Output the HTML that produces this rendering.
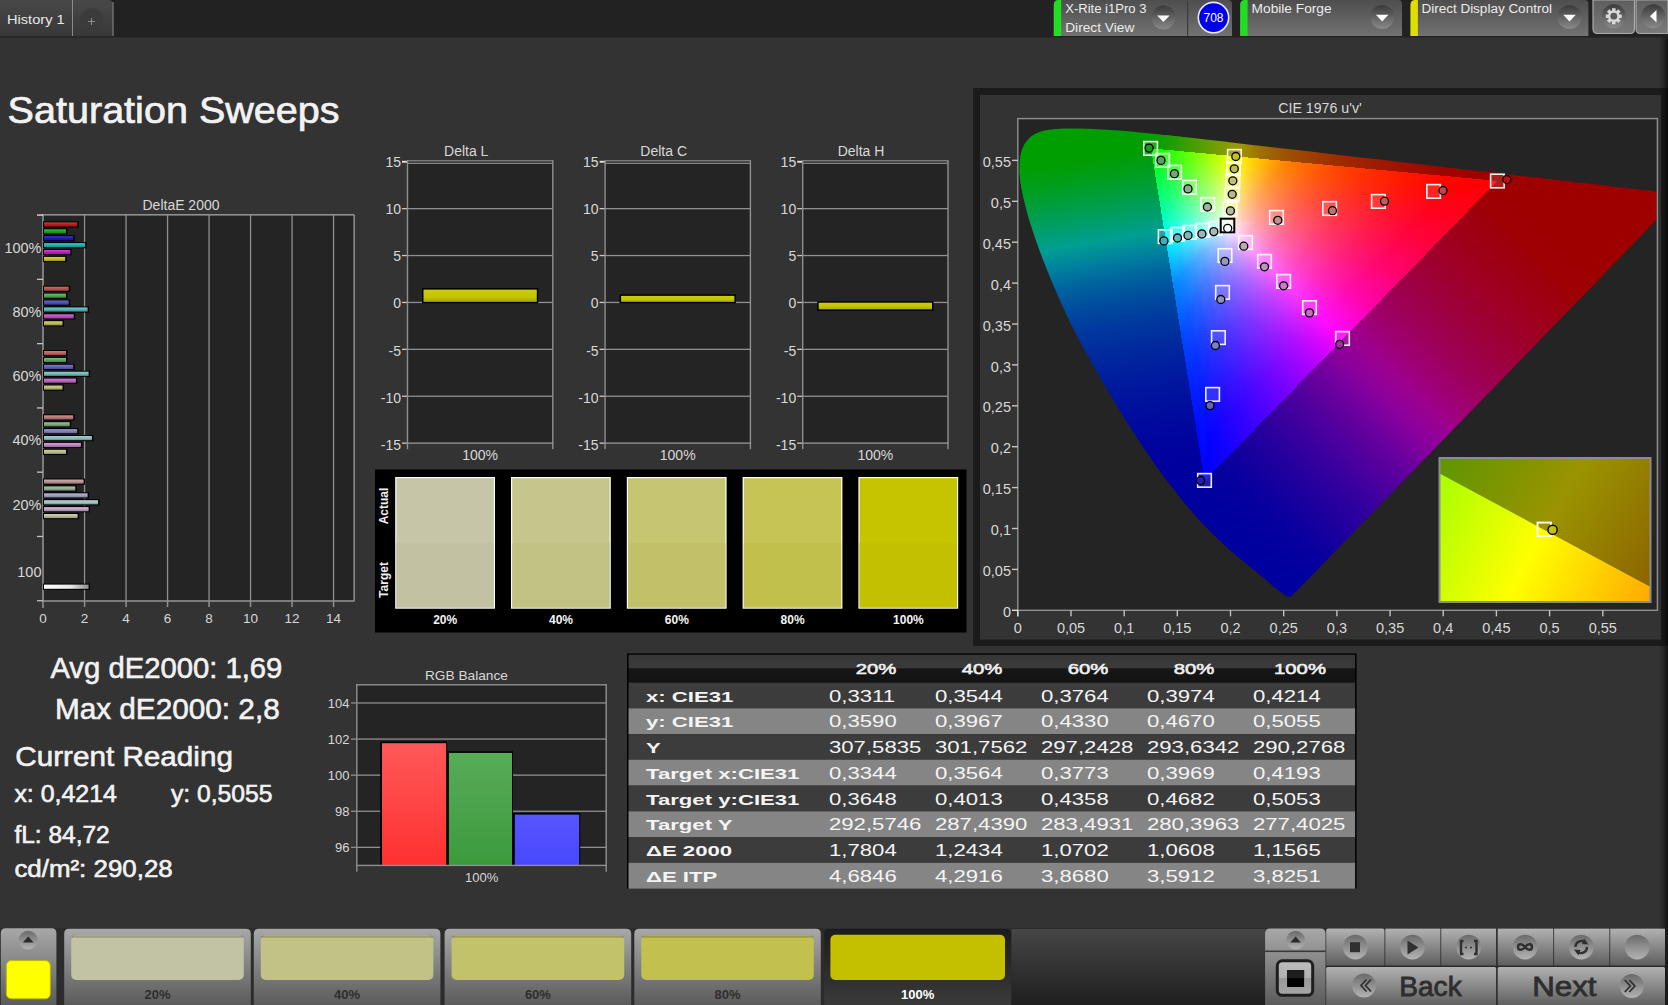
<!DOCTYPE html><html><head><meta charset="utf-8"><style>html,body{margin:0;padding:0;background:#333;overflow:hidden}svg{display:block;font-family:"Liberation Sans",sans-serif}</style></head><body>
<svg width="1668" height="1005" viewBox="0 0 1668 1005">
<defs><linearGradient id="tabg" x1="0" y1="0" x2="0" y2="1"><stop offset="0" stop-color="#484848"/><stop offset="1" stop-color="#383838"/></linearGradient><radialGradient id="plusg" cx="0.5" cy="0.3" r="0.7"><stop offset="0" stop-color="#3a3a3a"/><stop offset="1" stop-color="#444"/></radialGradient><linearGradient id="de1" x1="0" y1="0" x2="0" y2="1"><stop offset="0" stop-color="#ce4343"/><stop offset="0.45" stop-color="#c41a1a"/><stop offset="1" stop-color="#931313"/></linearGradient><linearGradient id="de2" x1="0" y1="0" x2="0" y2="1"><stop offset="0" stop-color="#44b944"/><stop offset="0.45" stop-color="#1caa1c"/><stop offset="1" stop-color="#157f15"/></linearGradient><linearGradient id="de3" x1="0" y1="0" x2="0" y2="1"><stop offset="0" stop-color="#4343c9"/><stop offset="0.45" stop-color="#1a1abe"/><stop offset="1" stop-color="#13138e"/></linearGradient><linearGradient id="de4" x1="0" y1="0" x2="0" y2="1"><stop offset="0" stop-color="#49c1c1"/><stop offset="0.45" stop-color="#22b4b4"/><stop offset="1" stop-color="#198787"/></linearGradient><linearGradient id="de5" x1="0" y1="0" x2="0" y2="1"><stop offset="0" stop-color="#cb48ce"/><stop offset="0.45" stop-color="#c020c4"/><stop offset="1" stop-color="#901893"/></linearGradient><linearGradient id="de6" x1="0" y1="0" x2="0" y2="1"><stop offset="0" stop-color="#cece4b"/><stop offset="0.45" stop-color="#c4c424"/><stop offset="1" stop-color="#93931b"/></linearGradient><linearGradient id="de7" x1="0" y1="0" x2="0" y2="1"><stop offset="0" stop-color="#cb6f6f"/><stop offset="0.45" stop-color="#c05050"/><stop offset="1" stop-color="#903c3c"/></linearGradient><linearGradient id="de8" x1="0" y1="0" x2="0" y2="1"><stop offset="0" stop-color="#6fb96f"/><stop offset="0.45" stop-color="#50aa50"/><stop offset="1" stop-color="#3c7f3c"/></linearGradient><linearGradient id="de9" x1="0" y1="0" x2="0" y2="1"><stop offset="0" stop-color="#6f6fc9"/><stop offset="0.45" stop-color="#5050be"/><stop offset="1" stop-color="#3c3c8e"/></linearGradient><linearGradient id="de10" x1="0" y1="0" x2="0" y2="1"><stop offset="0" stop-color="#76c4c4"/><stop offset="0.45" stop-color="#58b8b8"/><stop offset="1" stop-color="#428a8a"/></linearGradient><linearGradient id="de11" x1="0" y1="0" x2="0" y2="1"><stop offset="0" stop-color="#cb6fce"/><stop offset="0.45" stop-color="#c050c4"/><stop offset="1" stop-color="#903c93"/></linearGradient><linearGradient id="de12" x1="0" y1="0" x2="0" y2="1"><stop offset="0" stop-color="#cbcb76"/><stop offset="0.45" stop-color="#c0c058"/><stop offset="1" stop-color="#909042"/></linearGradient><linearGradient id="de13" x1="0" y1="0" x2="0" y2="1"><stop offset="0" stop-color="#cb7e7e"/><stop offset="0.45" stop-color="#c06262"/><stop offset="1" stop-color="#904949"/></linearGradient><linearGradient id="de14" x1="0" y1="0" x2="0" y2="1"><stop offset="0" stop-color="#7eb97e"/><stop offset="0.45" stop-color="#62aa62"/><stop offset="1" stop-color="#497f49"/></linearGradient><linearGradient id="de15" x1="0" y1="0" x2="0" y2="1"><stop offset="0" stop-color="#7f7fcb"/><stop offset="0.45" stop-color="#6464c0"/><stop offset="1" stop-color="#4b4b90"/></linearGradient><linearGradient id="de16" x1="0" y1="0" x2="0" y2="1"><stop offset="0" stop-color="#90c8c8"/><stop offset="0.45" stop-color="#78bcbc"/><stop offset="1" stop-color="#5a8d8d"/></linearGradient><linearGradient id="de17" x1="0" y1="0" x2="0" y2="1"><stop offset="0" stop-color="#cb83ce"/><stop offset="0.45" stop-color="#c068c4"/><stop offset="1" stop-color="#904e93"/></linearGradient><linearGradient id="de18" x1="0" y1="0" x2="0" y2="1"><stop offset="0" stop-color="#cbcb89"/><stop offset="0.45" stop-color="#c0c070"/><stop offset="1" stop-color="#909054"/></linearGradient><linearGradient id="de19" x1="0" y1="0" x2="0" y2="1"><stop offset="0" stop-color="#cb9191"/><stop offset="0.45" stop-color="#c07a7a"/><stop offset="1" stop-color="#905b5b"/></linearGradient><linearGradient id="de20" x1="0" y1="0" x2="0" y2="1"><stop offset="0" stop-color="#95bc95"/><stop offset="0.45" stop-color="#7eae7e"/><stop offset="1" stop-color="#5e825e"/></linearGradient><linearGradient id="de21" x1="0" y1="0" x2="0" y2="1"><stop offset="0" stop-color="#9898cc"/><stop offset="0.45" stop-color="#8282c2"/><stop offset="1" stop-color="#616191"/></linearGradient><linearGradient id="de22" x1="0" y1="0" x2="0" y2="1"><stop offset="0" stop-color="#a5cbcb"/><stop offset="0.45" stop-color="#92c0c0"/><stop offset="1" stop-color="#6d9090"/></linearGradient><linearGradient id="de23" x1="0" y1="0" x2="0" y2="1"><stop offset="0" stop-color="#cb9dce"/><stop offset="0.45" stop-color="#c088c4"/><stop offset="1" stop-color="#906693"/></linearGradient><linearGradient id="de24" x1="0" y1="0" x2="0" y2="1"><stop offset="0" stop-color="#cbcba0"/><stop offset="0.45" stop-color="#c0c08c"/><stop offset="1" stop-color="#909069"/></linearGradient><linearGradient id="de25" x1="0" y1="0" x2="0" y2="1"><stop offset="0" stop-color="#cbaaaa"/><stop offset="0.45" stop-color="#c09898"/><stop offset="1" stop-color="#907272"/></linearGradient><linearGradient id="de26" x1="0" y1="0" x2="0" y2="1"><stop offset="0" stop-color="#aac1aa"/><stop offset="0.45" stop-color="#98b498"/><stop offset="1" stop-color="#728772"/></linearGradient><linearGradient id="de27" x1="0" y1="0" x2="0" y2="1"><stop offset="0" stop-color="#b4b4d1"/><stop offset="0.45" stop-color="#a4a4c8"/><stop offset="1" stop-color="#7b7b96"/></linearGradient><linearGradient id="de28" x1="0" y1="0" x2="0" y2="1"><stop offset="0" stop-color="#b7d0d0"/><stop offset="0.45" stop-color="#a8c6c6"/><stop offset="1" stop-color="#7e9494"/></linearGradient><linearGradient id="de29" x1="0" y1="0" x2="0" y2="1"><stop offset="0" stop-color="#ceb7d1"/><stop offset="0.45" stop-color="#c4a8c8"/><stop offset="1" stop-color="#937e96"/></linearGradient><linearGradient id="de30" x1="0" y1="0" x2="0" y2="1"><stop offset="0" stop-color="#cbcbb2"/><stop offset="0.45" stop-color="#c0c0a2"/><stop offset="1" stop-color="#909079"/></linearGradient><linearGradient id="dew" x1="0" y1="0" x2="1" y2="0"><stop offset="0" stop-color="#ffffff"/><stop offset="0.6" stop-color="#e8e8e8"/><stop offset="1" stop-color="#909090"/></linearGradient><linearGradient id="ybar" x1="0" y1="0" x2="0" y2="1"><stop offset="0" stop-color="#cccc0a"/><stop offset="0.6" stop-color="#c4c400"/><stop offset="1" stop-color="#a4a400"/></linearGradient><clipPath id="plotclip"><rect x="1018.5" y="119.3" width="638.2" height="490.3"/></clipPath><clipPath id="locus"><path d="M1291.2,596.6 C1290.8,596.7 1289.6,597.2 1288.8,597.1 C1288.0,597.1 1287.2,596.8 1286.3,596.3 C1285.4,595.9 1284.6,595.3 1283.5,594.5 C1282.5,593.7 1281.3,592.8 1279.8,591.6 C1278.3,590.4 1276.5,588.9 1274.4,587.3 C1272.4,585.6 1270.2,583.6 1267.7,581.5 C1265.1,579.3 1262.4,577.1 1259.1,574.3 C1255.8,571.6 1252.0,568.5 1247.8,565.1 C1243.7,561.7 1239.3,558.1 1234.3,553.7 C1229.3,549.3 1223.8,544.6 1217.7,538.7 C1211.6,532.8 1205.5,527.0 1197.7,518.3 C1190.0,509.6 1180.9,498.9 1171.3,486.2 C1161.6,473.6 1150.9,458.8 1140.0,442.4 C1129.1,426.0 1117.2,406.8 1106.1,387.8 C1095.0,368.9 1083.2,348.1 1073.5,328.9 C1063.8,309.6 1055.1,289.6 1048.0,272.2 C1040.8,254.8 1035.0,238.3 1030.6,224.5 C1026.3,210.6 1023.5,199.0 1021.7,189.0 C1019.8,178.9 1019.3,171.2 1019.5,164.3 C1019.7,157.3 1021.0,151.9 1022.9,147.3 C1024.9,142.7 1027.8,139.2 1031.1,136.5 C1034.3,133.8 1038.4,132.3 1042.6,131.0 C1046.8,129.8 1051.5,129.4 1056.3,129.0 C1061.1,128.6 1066.2,128.5 1071.3,128.5 C1076.3,128.4 1081.3,128.5 1086.4,128.7 C1091.6,128.8 1096.8,129.1 1102.3,129.4 C1107.8,129.7 1113.4,130.2 1119.3,130.6 C1125.3,131.1 1131.4,131.7 1137.9,132.3 C1144.4,132.9 1151.1,133.6 1158.3,134.4 C1165.4,135.1 1172.9,135.9 1180.9,136.8 C1188.8,137.7 1197.1,138.6 1205.9,139.6 C1214.6,140.6 1223.8,141.6 1233.5,142.8 C1243.2,143.9 1253.3,145.0 1263.9,146.2 C1274.5,147.5 1285.6,148.8 1297.1,150.1 C1308.6,151.4 1320.6,152.8 1332.8,154.2 C1345.1,155.6 1357.9,157.1 1370.7,158.6 C1383.5,160.0 1396.8,161.6 1409.5,163.1 C1422.3,164.5 1434.8,166.0 1447.2,167.4 C1459.6,168.8 1472.2,170.3 1483.9,171.6 C1495.5,173.0 1506.7,174.2 1517.1,175.4 C1527.5,176.6 1537.4,177.8 1546.5,178.8 C1555.5,179.9 1563.8,180.8 1571.4,181.7 C1579.1,182.6 1585.9,183.4 1592.4,184.1 C1598.8,184.9 1604.5,185.5 1610.0,186.2 C1615.5,186.8 1620.6,187.4 1625.3,187.9 C1630.0,188.5 1634.3,189.0 1638.2,189.4 C1642.1,189.9 1645.6,190.3 1648.7,190.6 C1651.8,191.0 1653.6,191.2 1656.8,191.6 C1660.0,191.9 1664.4,192.4 1667.9,192.8 C1671.3,193.2 1675.2,193.7 1677.4,193.9 C1679.7,194.2 1680.5,194.3 1681.2,194.4 Z"/></clipPath><linearGradient id="es0" gradientUnits="userSpaceOnUse" x1="1497.5" y1="180.9" x2="1151.0" y2="148.4"><stop offset="0.000" stop-color="#9e0000"/><stop offset="0.062" stop-color="#9e0000"/><stop offset="0.125" stop-color="#9e0200"/><stop offset="0.188" stop-color="#9e0800"/><stop offset="0.250" stop-color="#9e0e00"/><stop offset="0.312" stop-color="#9e1500"/><stop offset="0.375" stop-color="#9e1e00"/><stop offset="0.438" stop-color="#9e2700"/><stop offset="0.500" stop-color="#9e3400"/><stop offset="0.562" stop-color="#9e4300"/><stop offset="0.625" stop-color="#9e5600"/><stop offset="0.688" stop-color="#9e7100"/><stop offset="0.750" stop-color="#9e9800"/><stop offset="0.812" stop-color="#749e00"/><stop offset="0.875" stop-color="#499e00"/><stop offset="0.938" stop-color="#209e00"/><stop offset="1.000" stop-color="#009e00"/></linearGradient><linearGradient id="es1" gradientUnits="userSpaceOnUse" x1="1151.0" y1="148.4" x2="1204.6" y2="480.6"><stop offset="0.000" stop-color="#009e00"/><stop offset="0.062" stop-color="#009e1c"/><stop offset="0.125" stop-color="#009e40"/><stop offset="0.188" stop-color="#009e68"/><stop offset="0.250" stop-color="#009e93"/><stop offset="0.312" stop-color="#007f9e"/><stop offset="0.375" stop-color="#00619e"/><stop offset="0.438" stop-color="#004b9e"/><stop offset="0.500" stop-color="#003a9e"/><stop offset="0.562" stop-color="#002d9e"/><stop offset="0.625" stop-color="#00229e"/><stop offset="0.688" stop-color="#00189e"/><stop offset="0.750" stop-color="#00109e"/><stop offset="0.812" stop-color="#00099e"/><stop offset="0.875" stop-color="#00039e"/><stop offset="0.938" stop-color="#00009e"/><stop offset="1.000" stop-color="#00009e"/></linearGradient><linearGradient id="es2" gradientUnits="userSpaceOnUse" x1="1204.6" y1="480.6" x2="1497.5" y2="180.9"><stop offset="0.000" stop-color="#00009e"/><stop offset="0.062" stop-color="#08009e"/><stop offset="0.125" stop-color="#18009e"/><stop offset="0.188" stop-color="#29009e"/><stop offset="0.250" stop-color="#3d009e"/><stop offset="0.312" stop-color="#53009e"/><stop offset="0.375" stop-color="#6d009e"/><stop offset="0.438" stop-color="#8b009e"/><stop offset="0.500" stop-color="#9e008e"/><stop offset="0.562" stop-color="#9e006f"/><stop offset="0.625" stop-color="#9e0057"/><stop offset="0.688" stop-color="#9e0042"/><stop offset="0.750" stop-color="#9e0030"/><stop offset="0.812" stop-color="#9e0020"/><stop offset="0.875" stop-color="#9e0012"/><stop offset="0.938" stop-color="#9e0005"/><stop offset="1.000" stop-color="#9e0000"/></linearGradient><linearGradient id="gR" gradientUnits="userSpaceOnUse"><stop offset="0" stop-color="#000"/><stop offset="1" stop-color="#f00"/></linearGradient><linearGradient id="gG" gradientUnits="userSpaceOnUse"><stop offset="0" stop-color="#000"/><stop offset="1" stop-color="#0f0"/></linearGradient><linearGradient id="gB" gradientUnits="userSpaceOnUse"><stop offset="0" stop-color="#000"/><stop offset="1" stop-color="#00f"/></linearGradient><linearGradient id="m1" href="#gG" x1="522.43" y1="-543.38" x2="477.30" y2="-496.44"/><linearGradient id="m2" href="#gB" x1="77.73" y1="-220.84" x2="64.72" y2="-183.88"/><linearGradient id="m3" href="#gG" x1="850.42" y1="-525.77" x2="787.76" y2="-487.03"/><linearGradient id="m4" href="#gB" x1="122.24" y1="-288.91" x2="105.51" y2="-249.38"/><linearGradient id="m5" href="#gG" x1="1158.21" y1="-317.03" x2="1085.32" y2="-297.08"/><linearGradient id="m6" href="#gB" x1="190.50" y1="-366.44" x2="168.98" y2="-325.05"/><linearGradient id="m7" href="#gG" x1="1290.30" y1="-36.94" x2="1220.96" y2="-34.95"/><linearGradient id="m8" href="#gB" x1="287.01" y1="-443.06" x2="260.11" y2="-401.54"/><linearGradient id="m9" href="#gG" x1="1298.54" y1="122.19" x2="1238.69" y2="116.56"/><linearGradient id="m10" href="#gB" x1="394.90" y1="-498.46" x2="363.82" y2="-459.24"/><linearGradient id="m11" href="#gR" x1="1183.42" y1="116.81" x2="1238.63" y2="122.26"/><linearGradient id="m12" href="#gB" x1="41.32" y1="320.22" x2="48.77" y2="377.95"/><linearGradient id="m13" href="#gR" x1="1182.56" y1="121.01" x2="1238.55" y2="126.74"/><linearGradient id="m14" href="#gB" x1="39.46" y1="315.69" x2="46.68" y2="373.44"/><linearGradient id="m15" href="#gR" x1="1181.54" y1="129.31" x2="1238.29" y2="135.52"/><linearGradient id="m16" href="#gB" x1="37.60" y1="311.09" x2="44.58" y2="368.82"/><linearGradient id="m17" href="#gR" x1="1180.22" y1="141.58" x2="1237.69" y2="148.47"/><linearGradient id="m18" href="#gB" x1="35.76" y1="306.45" x2="42.48" y2="364.10"/><linearGradient id="m19" href="#gR" x1="1178.36" y1="157.67" x2="1236.48" y2="165.45"/><linearGradient id="m20" href="#gB" x1="33.93" y1="301.78" x2="40.40" y2="359.31"/><linearGradient id="m21" href="#gG" x1="942.86" y1="-532.81" x2="806.01" y2="-455.47"/><linearGradient id="m22" href="#gB" x1="55.76" y1="-186.25" x2="34.64" y2="-115.70"/><linearGradient id="m23" href="#gG" x1="850.12" y1="757.03" x2="787.20" y2="701.00"/><linearGradient id="m24" href="#gB" x1="882.44" y1="-542.35" x2="772.40" y2="-474.72"/><linearGradient id="m25" href="#gG" x1="1194.89" y1="-339.41" x2="1055.08" y2="-299.69"/><linearGradient id="m26" href="#gB" x1="82.81" y1="-237.55" x2="58.93" y2="-169.04"/><linearGradient id="m27" href="#gG" x1="1079.57" y1="629.13" x2="1007.19" y2="586.95"/><linearGradient id="m28" href="#gB" x1="685.11" y1="-567.61" x2="607.69" y2="-503.47"/><linearGradient id="m29" href="#gG" x1="1323.28" y1="-63.54" x2="1201.29" y2="-57.69"/><linearGradient id="m30" href="#gB" x1="127.25" y1="-303.38" x2="99.78" y2="-237.89"/><linearGradient id="m31" href="#gG" x1="1242.83" y1="415.18" x2="1168.21" y2="390.26"/><linearGradient id="m32" href="#gB" x1="549.07" y1="-551.92" x2="493.48" y2="-496.04"/><linearGradient id="m33" href="#gG" x1="1325.45" y1="154.10" x2="1232.02" y2="143.24"/><linearGradient id="m34" href="#gB" x1="200.73" y1="-383.14" x2="169.10" y2="-322.76"/><linearGradient id="m35" href="#gG" x1="1300.30" y1="207.97" x2="1231.43" y2="196.96"/><linearGradient id="m36" href="#gB" x1="465.08" y1="-527.53" x2="423.49" y2="-480.36"/><linearGradient id="m37" href="#gG" x1="1296.12" y1="225.91" x2="1228.87" y2="214.19"/><linearGradient id="m38" href="#gB" x1="312.30" y1="-463.45" x2="277.53" y2="-411.86"/><linearGradient id="m39" href="#gG" x1="1298.54" y1="122.19" x2="1238.69" y2="116.56"/><linearGradient id="m40" href="#gB" x1="423.94" y1="-509.98" x2="390.80" y2="-470.11"/><linearGradient id="m41" href="#gR" x1="1180.66" y1="110.18" x2="1238.74" y2="115.60"/><linearGradient id="m42" href="#gB" x1="23.12" y1="268.09" x2="28.43" y2="329.65"/><linearGradient id="m43" href="#gR" x1="1183.17" y1="85.77" x2="1238.49" y2="89.78"/><linearGradient id="m44" href="#gB" x1="48.97" y1="335.41" x2="58.00" y2="397.25"/><linearGradient id="m45" href="#gR" x1="1178.98" y1="107.77" x2="1238.94" y2="113.25"/><linearGradient id="m46" href="#gB" x1="21.14" y1="261.42" x2="26.17" y2="323.59"/><linearGradient id="m47" href="#gR" x1="1180.70" y1="56.75" x2="1236.86" y2="59.44"/><linearGradient id="m48" href="#gB" x1="49.59" y1="335.91" x2="58.95" y2="399.26"/><linearGradient id="m49" href="#gR" x1="1177.40" y1="109.70" x2="1239.19" y2="115.46"/><linearGradient id="m50" href="#gB" x1="19.29" y1="254.95" x2="24.03" y2="317.68"/><linearGradient id="m51" href="#gR" x1="1176.34" y1="24.12" x2="1233.27" y2="25.28"/><linearGradient id="m52" href="#gB" x1="50.32" y1="336.60" x2="60.03" y2="401.53"/><linearGradient id="m53" href="#gR" x1="1175.90" y1="115.41" x2="1239.47" y2="121.65"/><linearGradient id="m54" href="#gB" x1="17.55" y1="248.70" x2="22.01" y2="311.92"/><linearGradient id="m55" href="#gR" x1="1169.60" y1="-11.41" x2="1227.18" y2="-11.98"/><linearGradient id="m56" href="#gB" x1="51.16" y1="337.47" x2="61.26" y2="404.07"/><linearGradient id="m57" href="#gR" x1="1174.39" y1="124.28" x2="1239.66" y2="131.19"/><linearGradient id="m58" href="#gB" x1="15.92" y1="242.65" x2="20.10" y2="306.32"/><linearGradient id="m59" href="#gR" x1="1160.06" y1="-49.04" x2="1218.16" y2="-51.50"/><linearGradient id="m60" href="#gB" x1="52.10" y1="338.51" x2="62.63" y2="406.86"/><linearGradient id="m61" href="#gG" x1="1397.17" y1="-48.94" x2="1092.16" y2="-38.25"/><linearGradient id="m62" href="#gB" x1="33.43" y1="-137.50" x2="4.88" y2="-20.07"/><linearGradient id="m63" href="#gG" x1="976.55" y1="737.36" x2="846.51" y2="639.18"/><linearGradient id="m64" href="#gB" x1="285.48" y1="-469.94" x2="200.23" y2="-329.61"/><linearGradient id="m65" href="#gG" x1="1395.29" y1="149.03" x2="1157.04" y2="123.58"/><linearGradient id="m66" href="#gB" x1="48.28" y1="-174.70" x2="18.46" y2="-66.80"/><linearGradient id="m67" href="#gG" x1="1168.09" y1="586.45" x2="1038.27" y2="521.28"/><linearGradient id="m68" href="#gB" x1="272.45" y1="-454.63" x2="205.24" y2="-342.48"/><linearGradient id="m69" href="#gG" x1="1346.46" y1="299.02" x2="1174.19" y2="260.77"/><linearGradient id="m70" href="#gB" x1="73.69" y1="-226.28" x2="41.98" y2="-128.89"/><linearGradient id="m71" href="#gG" x1="1291.29" y1="373.35" x2="1174.88" y2="339.69"/><linearGradient id="m72" href="#gB" x1="264.64" y1="-443.10" x2="212.23" y2="-355.35"/><linearGradient id="m73" href="#gG" x1="1292.88" y1="370.02" x2="1176.06" y2="336.59"/><linearGradient id="m74" href="#gB" x1="120.72" y1="-298.92" x2="86.45" y2="-214.05"/><linearGradient id="m75" href="#gG" x1="1323.03" y1="180.84" x2="1229.90" y2="168.11"/><linearGradient id="m76" href="#gB" x1="265.14" y1="-437.79" x2="224.56" y2="-370.79"/><linearGradient id="m77" href="#gG" x1="1274.29" y1="333.92" x2="1199.82" y2="314.40"/><linearGradient id="m78" href="#gB" x1="212.30" y1="-395.94" x2="175.72" y2="-327.73"/><linearGradient id="m79" href="#gG" x1="1306.87" y1="122.98" x2="1238.69" y2="116.56"/><linearGradient id="m80" href="#gB" x1="282.11" y1="-443.97" x2="250.41" y2="-394.07"/><linearGradient id="m81" href="#gR" x1="1177.46" y1="109.91" x2="1238.74" y2="115.63"/><linearGradient id="m82" href="#gB" x1="8.56" y1="210.95" x2="11.23" y2="276.68"/><linearGradient id="m83" href="#gR" x1="1180.06" y1="71.96" x2="1238.26" y2="75.51"/><linearGradient id="m84" href="#gB" x1="29.29" y1="283.90" x2="36.21" y2="351.03"/><linearGradient id="m85" href="#gR" x1="1175.00" y1="98.14" x2="1239.38" y2="103.52"/><linearGradient id="m86" href="#gB" x1="7.18" y1="203.84" x2="9.54" y2="270.94"/><linearGradient id="m87" href="#gR" x1="1174.87" y1="30.21" x2="1234.92" y2="31.75"/><linearGradient id="m88" href="#gB" x1="28.84" y1="281.47" x2="35.97" y2="351.05"/><linearGradient id="m89" href="#gR" x1="1172.77" y1="89.76" x2="1240.14" y2="94.91"/><linearGradient id="m90" href="#gB" x1="5.95" y1="197.17" x2="8.01" y2="265.59"/><linearGradient id="m91" href="#gR" x1="1166.44" y1="-13.58" x2="1228.16" y2="-14.30"/><linearGradient id="m92" href="#gB" x1="28.44" y1="279.16" x2="35.79" y2="351.26"/><linearGradient id="m93" href="#gR" x1="1170.90" y1="83.53" x2="1241.10" y2="88.54"/><linearGradient id="m94" href="#gB" x1="4.85" y1="190.92" x2="6.62" y2="260.62"/><linearGradient id="m95" href="#gR" x1="1154.58" y1="-58.00" x2="1217.71" y2="-61.17"/><linearGradient id="m96" href="#gB" x1="28.08" y1="276.95" x2="35.66" y2="351.64"/><linearGradient id="m97" href="#gR" x1="1169.40" y1="77.74" x2="1242.22" y2="82.59"/><linearGradient id="m98" href="#gB" x1="3.88" y1="185.07" x2="5.36" y2="256.01"/><linearGradient id="m99" href="#gR" x1="1139.50" y1="-101.41" x2="1203.80" y2="-107.13"/><linearGradient id="m100" href="#gB" x1="27.76" y1="274.83" x2="35.58" y2="352.19"/><linearGradient id="m101" href="#gG" x1="1295.18" y1="535.22" x2="910.76" y2="376.37"/><linearGradient id="m102" href="#gB" x1="14.31" y1="-76.22" x2="-16.73" y2="89.16"/><linearGradient id="m103" href="#gG" x1="1072.33" y1="712.63" x2="846.55" y2="562.59"/><linearGradient id="m104" href="#gB" x1="82.36" y1="-249.25" x2="23.65" y2="-71.59"/><linearGradient id="m105" href="#gG" x1="1257.88" y1="558.90" x2="969.81" y2="430.91"/><linearGradient id="m106" href="#gB" x1="21.00" y1="-100.87" x2="-9.74" y2="46.79"/><linearGradient id="m107" href="#gG" x1="1237.38" y1="549.69" x2="1029.82" y2="457.49"/><linearGradient id="m108" href="#gB" x1="92.06" y1="-263.10" x2="41.27" y2="-117.95"/><linearGradient id="m109" href="#gG" x1="1225.22" y1="563.24" x2="1021.30" y2="469.49"/><linearGradient id="m110" href="#gB" x1="32.69" y1="-136.69" x2="1.81" y2="-7.56"/><linearGradient id="m111" href="#gG" x1="1333.44" y1="338.66" x2="1163.13" y2="295.41"/><linearGradient id="m112" href="#gB" x1="104.74" y1="-279.89" x2="61.98" y2="-165.62"/><linearGradient id="m113" href="#gG" x1="1214.44" y1="529.75" x2="1079.29" y2="470.79"/><linearGradient id="m114" href="#gB" x1="56.04" y1="-192.63" x2="24.30" y2="-83.53"/><linearGradient id="m115" href="#gG" x1="1345.86" y1="157.16" x2="1223.11" y2="142.82"/><linearGradient id="m116" href="#gB" x1="122.81" y1="-301.85" x2="88.02" y2="-216.33"/><linearGradient id="m117" href="#gG" x1="1241.99" y1="419.69" x2="1161.25" y2="392.41"/><linearGradient id="m118" href="#gB" x1="111.66" y1="-286.44" x2="78.31" y2="-200.90"/><linearGradient id="m119" href="#gG" x1="1316.37" y1="123.87" x2="1238.69" y2="116.56"/><linearGradient id="m120" href="#gB" x1="153.26" y1="-335.02" x2="125.95" y2="-275.32"/><linearGradient id="m121" href="#gR" x1="1174.28" y1="109.64" x2="1238.74" y2="115.66"/><linearGradient id="m122" href="#gB" x1="-0.61" y1="154.77" x2="-0.89" y2="224.01"/><linearGradient id="m123" href="#gR" x1="1176.68" y1="59.62" x2="1238.09" y2="62.73"/><linearGradient id="m124" href="#gB" x1="11.89" y1="223.22" x2="15.72" y2="295.08"/><linearGradient id="m125" href="#gR" x1="1171.18" y1="87.47" x2="1239.95" y2="92.60"/><linearGradient id="m126" href="#gB" x1="-1.23" y1="148.82" x2="-1.83" y2="220.23"/><linearGradient id="m127" href="#gR" x1="1168.65" y1="7.34" x2="1233.00" y2="7.75"/><linearGradient id="m128" href="#gB" x1="11.11" y1="218.73" x2="14.93" y2="293.84"/><linearGradient id="m129" href="#gR" x1="1168.13" y1="67.08" x2="1240.94" y2="71.26"/><linearGradient id="m130" href="#gB" x1="-1.76" y1="143.39" x2="-2.66" y2="216.94"/><linearGradient id="m131" href="#gR" x1="1156.32" y1="-44.65" x2="1223.25" y2="-47.24"/><linearGradient id="m132" href="#gB" x1="10.39" y1="214.43" x2="14.19" y2="292.84"/><linearGradient id="m133" href="#gR" x1="1165.15" y1="46.34" x2="1241.57" y2="49.38"/><linearGradient id="m134" href="#gB" x1="-2.20" y1="138.42" x2="-3.41" y2="214.08"/><linearGradient id="m135" href="#gR" x1="1140.28" y1="-94.03" x2="1209.36" y2="-99.73"/><linearGradient id="m136" href="#gB" x1="9.72" y1="210.29" x2="13.50" y2="292.04"/><linearGradient id="m137" href="#gR" x1="1161.71" y1="21.15" x2="1240.99" y2="22.59"/><linearGradient id="m138" href="#gB" x1="-2.58" y1="133.86" x2="-4.08" y2="211.60"/><linearGradient id="m139" href="#gR" x1="1122.38" y1="-137.38" x2="1193.17" y2="-146.05"/><linearGradient id="m140" href="#gB" x1="9.10" y1="206.32" x2="12.85" y2="291.43"/><linearGradient id="m141" href="#gG" x1="1046.25" y1="752.82" x2="652.73" y2="469.67"/><linearGradient id="m142" href="#gB" x1="1.40" y1="-10.21" x2="-26.27" y2="191.89"/><linearGradient id="m143" href="#gG" x1="1093.93" y1="717.84" x2="772.43" y2="506.87"/><linearGradient id="m144" href="#gB" x1="22.85" y1="-108.70" x2="-19.86" y2="94.51"/><linearGradient id="m145" href="#gG" x1="1070.69" y1="730.87" x2="759.18" y2="518.23"/><linearGradient id="m146" href="#gB" x1="3.35" y1="-22.89" x2="-22.65" y2="154.73"/><linearGradient id="m147" href="#gG" x1="1262.31" y1="553.56" x2="973.16" y2="426.76"/><linearGradient id="m148" href="#gB" x1="27.92" y1="-124.11" x2="-9.92" y2="44.11"/><linearGradient id="m149" href="#gG" x1="1096.30" y1="693.86" x2="868.83" y2="549.90"/><linearGradient id="m150" href="#gB" x1="6.70" y1="-41.60" x2="-17.86" y2="110.93"/><linearGradient id="m151" href="#gG" x1="1358.91" y1="337.23" x2="1130.65" y2="280.59"/><linearGradient id="m152" href="#gB" x1="35.06" y1="-143.47" x2="2.45" y2="-10.03"/><linearGradient id="m153" href="#gG" x1="1137.98" y1="624.98" x2="986.34" y2="541.70"/><linearGradient id="m154" href="#gB" x1="13.53" y1="-72.56" x2="-10.06" y2="53.94"/><linearGradient id="m155" href="#gG" x1="1365.99" y1="149.31" x2="1211.72" y2="132.45"/><linearGradient id="m156" href="#gB" x1="45.89" y1="-169.16" x2="18.97" y2="-69.91"/><linearGradient id="m157" href="#gG" x1="1210.00" y1="480.91" x2="1123.40" y2="446.49"/><linearGradient id="m158" href="#gB" x1="32.13" y1="-133.84" x2="8.50" y2="-35.40"/><linearGradient id="m159" href="#gG" x1="1325.87" y1="124.76" x2="1238.69" y2="116.56"/><linearGradient id="m160" href="#gB" x1="64.71" y1="-206.84" x2="43.93" y2="-140.43"/><linearGradient id="m161" href="#gR" x1="1171.09" y1="109.38" x2="1238.74" y2="115.69"/><linearGradient id="m162" href="#gB" x1="-4.79" y1="99.39" x2="-8.22" y2="170.37"/><linearGradient id="m163" href="#gR" x1="1173.39" y1="48.54" x2="1238.00" y2="51.21"/><linearGradient id="m164" href="#gB" x1="0.49" y1="161.72" x2="0.72" y2="236.35"/><linearGradient id="m165" href="#gR" x1="1167.50" y1="77.52" x2="1240.62" y2="82.37"/><linearGradient id="m166" href="#gB" x1="-4.87" y1="95.87" x2="-8.62" y2="169.73"/><linearGradient id="m167" href="#gR" x1="1162.57" y1="-12.92" x2="1231.15" y2="-13.68"/><linearGradient id="m168" href="#gB" x1="0.03" y1="157.07" x2="0.04" y2="235.56"/><linearGradient id="m169" href="#gR" x1="1163.48" y1="45.85" x2="1241.53" y2="48.92"/><linearGradient id="m170" href="#gB" x1="-4.92" y1="92.73" x2="-9.00" y2="169.45"/><linearGradient id="m171" href="#gR" x1="1146.60" y1="-71.54" x2="1218.55" y2="-76.03"/><linearGradient id="m172" href="#gB" x1="-0.38" y1="152.70" x2="-0.59" y2="235.06"/><linearGradient id="m173" href="#gR" x1="1158.55" y1="10.61" x2="1240.55" y2="11.37"/><linearGradient id="m174" href="#gB" x1="-4.96" y1="89.92" x2="-9.35" y2="169.47"/><linearGradient id="m175" href="#gR" x1="1127.52" y1="-123.23" x2="1202.10" y2="-131.38"/><linearGradient id="m176" href="#gB" x1="-0.75" y1="148.60" x2="-1.19" y2="234.83"/><linearGradient id="m177" href="#gR" x1="1149.75" y1="-39.44" x2="1233.32" y2="-42.30"/><linearGradient id="m178" href="#gB" x1="-4.99" y1="87.40" x2="-9.69" y2="169.76"/><linearGradient id="m179" href="#gR" x1="1111.85" y1="-157.65" x2="1188.42" y2="-168.51"/><linearGradient id="m180" href="#gB" x1="-1.08" y1="144.73" x2="-1.75" y2="234.84"/><linearGradient id="m181" href="#gG" x1="100.22" y1="476.02" x2="-25.95" y2="-123.23"/><linearGradient id="m182" href="#gG" x1="1061.21" y1="745.32" x2="661.86" y2="464.84"/><linearGradient id="m183" href="#gB" x1="272.54" y1="-484.09" x2="-686.10" y2="1218.66"/><linearGradient id="m184" href="#gG" x1="928.06" y1="796.35" x2="599.26" y2="514.22"/><linearGradient id="m185" href="#gB" x1="-3.76" y1="40.03" x2="-88.90" y2="947.41"/><linearGradient id="m186" href="#gG" x1="1258.44" y1="582.72" x2="889.69" y2="411.97"/><linearGradient id="m187" href="#gB" x1="68.05" y1="-226.63" x2="-128.27" y2="427.17"/><linearGradient id="m188" href="#gG" x1="990.72" y1="759.83" x2="742.54" y2="569.48"/><linearGradient id="m189" href="#gB" x1="-3.75" y1="39.95" x2="-48.48" y2="516.35"/><linearGradient id="m190" href="#gG" x1="1373.49" y1="356.44" x2="1084.88" y2="281.54"/><linearGradient id="m191" href="#gB" x1="36.96" y1="-151.59" x2="-43.44" y2="178.15"/><linearGradient id="m192" href="#gG" x1="1072.25" y1="684.69" x2="904.88" y2="577.82"/><linearGradient id="m193" href="#gB" x1="-3.74" y1="39.78" x2="-30.03" y2="319.40"/><linearGradient id="m194" href="#gG" x1="1384.29" y1="152.07" x2="1196.92" y2="131.49"/><linearGradient id="m195" href="#gB" x1="27.82" y1="-123.21" x2="-12.25" y2="54.24"/><linearGradient id="m196" href="#gG" x1="1180.83" y1="526.00" x2="1088.57" y2="484.90"/><linearGradient id="m197" href="#gB" x1="-3.74" y1="39.71" x2="-19.39" y2="206.11"/><linearGradient id="m198" href="#gG" x1="1335.36" y1="125.66" x2="1238.69" y2="116.56"/><linearGradient id="m199" href="#gB" x1="26.47" y1="-117.05" x2="6.20" y2="-27.43"/><linearGradient id="m200" href="#gR" x1="1167.91" y1="109.11" x2="1238.74" y2="115.72"/><linearGradient id="m201" href="#gB" x1="-3.75" y1="39.97" x2="-12.41" y2="132.21"/><linearGradient id="m202" href="#gR" x1="1170.22" y1="38.55" x2="1238.00" y2="40.78"/><linearGradient id="m203" href="#gB" x1="-3.49" y1="118.74" x2="-6.45" y2="219.14"/><linearGradient id="m204" href="#gR" x1="1163.96" y1="68.24" x2="1241.38" y2="72.77"/><linearGradient id="m205" href="#gB" x1="-3.75" y1="39.97" x2="-13.02" y2="138.65"/><linearGradient id="m206" href="#gR" x1="1156.73" y1="-30.96" x2="1229.47" y2="-32.91"/><linearGradient id="m207" href="#gB" x1="-3.55" y1="116.27" x2="-6.88" y2="225.03"/><linearGradient id="m208" href="#gR" x1="1158.86" y1="25.86" x2="1241.94" y2="27.71"/><linearGradient id="m209" href="#gB" x1="-3.75" y1="39.97" x2="-13.64" y2="145.31"/><linearGradient id="m210" href="#gR" x1="1137.56" y1="-94.72" x2="1214.31" y2="-101.11"/><linearGradient id="m211" href="#gB" x1="-3.60" y1="114.04" x2="-7.30" y2="231.57"/><linearGradient id="m212" href="#gR" x1="1151.02" y1="-24.95" x2="1237.63" y2="-26.83"/><linearGradient id="m213" href="#gB" x1="-3.75" y1="39.97" x2="-14.29" y2="152.21"/><linearGradient id="m214" href="#gR" x1="1117.58" y1="-144.52" x2="1197.19" y2="-154.81"/><linearGradient id="m215" href="#gB" x1="-3.63" y1="112.03" x2="-7.73" y2="238.75"/><linearGradient id="m216" href="#gR" x1="1148.67" y1="164.51" x2="1260.18" y2="180.48"/><linearGradient id="m217" href="#gB" x1="-3.75" y1="39.97" x2="-14.96" y2="159.37"/><linearGradient id="m218" href="#gR" x1="916.68" y1="-395.14" x2="984.60" y2="-424.42"/><linearGradient id="m219" href="#gB" x1="-3.64" y1="110.20" x2="-8.15" y2="246.59"/><linearGradient id="m220" href="#gR" x1="1181.18" y1="45.73" x2="1235.31" y2="47.82"/><linearGradient id="m221" href="#gB" x1="85.21" y1="403.63" x2="98.02" y2="464.35"/><linearGradient id="m222" href="#gR" x1="1181.57" y1="51.08" x2="1235.87" y2="53.43"/><linearGradient id="m223" href="#gB" x1="74.43" y1="385.98" x2="86.01" y2="446.03"/><linearGradient id="m224" href="#gR" x1="1181.96" y1="56.38" x2="1236.37" y2="58.98"/><linearGradient id="m225" href="#gB" x1="66.71" y1="372.56" x2="77.33" y2="431.84"/><linearGradient id="m226" href="#gR" x1="1182.35" y1="61.59" x2="1236.82" y2="64.42"/><linearGradient id="m227" href="#gB" x1="61.76" y1="363.71" x2="71.69" y2="422.15"/><linearGradient id="m228" href="#gR" x1="1182.43" y1="62.66" x2="1236.91" y2="65.55"/><linearGradient id="m229" href="#gB" x1="59.98" y1="360.67" x2="69.59" y2="418.44"/><linearGradient id="m230" href="#gR" x1="591.70" y1="-480.83" x2="629.38" y2="-511.45"/><linearGradient id="m231" href="#gG" x1="78.99" y1="478.48" x2="68.87" y2="417.15"/><linearGradient id="m232" href="#gR" x1="690.46" y1="-473.75" x2="729.91" y2="-500.82"/><linearGradient id="m233" href="#gG" x1="17.92" y1="357.39" x2="14.37" y2="286.59"/><linearGradient id="m234" href="#gR" x1="784.47" y1="-452.73" x2="823.78" y2="-475.41"/><linearGradient id="m235" href="#gG" x1="-16.11" y1="97.15" x2="-3.55" y2="21.38"/><linearGradient id="m236" href="#gR" x1="862.66" y1="-423.56" x2="900.50" y2="-442.14"/><linearGradient id="m237" href="#gG" x1="97.67" y1="-211.95" x2="129.38" y2="-280.75"/><linearGradient id="m238" href="#gR" x1="923.31" y1="-392.62" x2="959.02" y2="-407.81"/><linearGradient id="m239" href="#gG" x1="332.85" y1="-411.35" x2="375.68" y2="-464.28"/><linearGradient id="m240" href="#gR" x1="1168.50" y1="-4.62" x2="1229.03" y2="-4.86"/><linearGradient id="m241" href="#gB" x1="58.84" y1="352.10" x2="70.34" y2="420.95"/><linearGradient id="m242" href="#gR" x1="1176.44" y1="86.03" x2="1239.64" y2="90.65"/><linearGradient id="m243" href="#gB" x1="16.39" y1="245.68" x2="20.51" y2="307.41"/><linearGradient id="m244" href="#gR" x1="1169.91" y1="1.56" x2="1229.99" y2="1.64"/><linearGradient id="m245" href="#gB" x1="54.27" y1="343.78" x2="64.82" y2="410.62"/><linearGradient id="m246" href="#gR" x1="1177.76" y1="83.83" x2="1239.27" y2="88.21"/><linearGradient id="m247" href="#gB" x1="27.67" y1="282.63" x2="33.62" y2="343.41"/><linearGradient id="m248" href="#gR" x1="1171.34" y1="7.94" x2="1230.92" y2="8.35"/><linearGradient id="m249" href="#gB" x1="51.87" y1="339.82" x2="61.75" y2="404.57"/><linearGradient id="m250" href="#gR" x1="1179.00" y1="81.92" x2="1238.93" y2="86.08"/><linearGradient id="m251" href="#gB" x1="39.41" y1="314.47" x2="46.89" y2="374.20"/><linearGradient id="m252" href="#gR" x1="1172.81" y1="14.52" x2="1231.82" y2="15.26"/><linearGradient id="m253" href="#gB" x1="51.82" y1="340.95" x2="61.33" y2="403.53"/><linearGradient id="m254" href="#gR" x1="1180.19" y1="80.31" x2="1238.63" y2="84.29"/><linearGradient id="m255" href="#gB" x1="50.56" y1="340.74" x2="59.26" y2="399.37"/><linearGradient id="m256" href="#gR" x1="1174.13" y1="20.13" x2="1232.51" y2="21.13"/><linearGradient id="m257" href="#gB" x1="54.58" y1="348.07" x2="64.06" y2="408.49"/><linearGradient id="m258" href="#gR" x1="1181.05" y1="75.12" x2="1238.15" y2="78.75"/><linearGradient id="m259" href="#gB" x1="59.98" y1="360.67" x2="69.59" y2="418.44"/><linearGradient id="m260" href="#gR" x1="723.32" y1="-463.35" x2="768.79" y2="-492.47"/><linearGradient id="m261" href="#gG" x1="81.21" y1="487.67" x2="69.72" y2="418.66"/><linearGradient id="m262" href="#gR" x1="411.87" y1="-447.32" x2="452.63" y2="-491.59"/><linearGradient id="m263" href="#gG" x1="202.45" y1="622.67" x2="183.46" y2="564.26"/><linearGradient id="m264" href="#gR" x1="828.08" y1="-428.75" x2="878.41" y2="-454.81"/><linearGradient id="m265" href="#gG" x1="3.00" y1="327.13" x2="2.16" y2="235.24"/><linearGradient id="m266" href="#gR" x1="304.77" y1="-395.75" x2="351.59" y2="-456.54"/><linearGradient id="m267" href="#gG" x1="434.00" y1="755.17" x2="400.76" y2="697.33"/><linearGradient id="m268" href="#gR" x1="900.06" y1="-392.52" x2="953.27" y2="-415.72"/><linearGradient id="m269" href="#gG" x1="-12.50" y1="56.05" x2="11.49" y2="-51.54"/><linearGradient id="m270" href="#gR" x1="166.64" y1="-287.63" x2="216.21" y2="-373.19"/><linearGradient id="m271" href="#gG" x1="705.35" y1="781.14" x2="659.76" y2="730.65"/><linearGradient id="m272" href="#gR" x1="949.07" y1="-361.00" x2="1004.16" y2="-381.96"/><linearGradient id="m273" href="#gG" x1="104.32" y1="-210.45" x2="157.44" y2="-317.61"/><linearGradient id="m274" href="#gR" x1="28.46" y1="-81.00" x2="70.49" y2="-200.64"/><linearGradient id="m275" href="#gG" x1="930.11" y1="710.50" x2="877.45" y2="670.27"/><linearGradient id="m276" href="#gR" x1="983.20" y1="-335.27" x2="1039.74" y2="-354.55"/><linearGradient id="m277" href="#gG" x1="293.69" y1="-374.67" x2="368.08" y2="-469.58"/><linearGradient id="m278" href="#gR" x1="-21.22" y1="247.98" x2="-7.83" y2="91.48"/><linearGradient id="m279" href="#gG" x1="1079.67" y1="600.01" x2="1024.47" y2="569.33"/><linearGradient id="m280" href="#gR" x1="1152.71" y1="-54.12" x2="1220.36" y2="-57.30"/><linearGradient id="m281" href="#gB" x1="28.50" y1="276.90" x2="36.47" y2="354.37"/><linearGradient id="m282" href="#gR" x1="1167.20" y1="24.03" x2="1237.13" y2="25.47"/><linearGradient id="m283" href="#gB" x1="7.95" y1="207.18" x2="10.61" y2="276.42"/><linearGradient id="m284" href="#gR" x1="1154.73" y1="-48.60" x2="1221.12" y2="-51.40"/><linearGradient id="m285" href="#gB" x1="30.83" y1="284.63" x2="38.88" y2="358.87"/><linearGradient id="m286" href="#gR" x1="1168.90" y1="24.86" x2="1236.31" y2="26.30"/><linearGradient id="m287" href="#gB" x1="19.03" y1="252.07" x2="24.11" y2="319.31"/><linearGradient id="m288" href="#gR" x1="1156.88" y1="-42.70" x2="1221.95" y2="-45.10"/><linearGradient id="m289" href="#gB" x1="34.30" y1="295.42" x2="42.52" y2="366.23"/><linearGradient id="m290" href="#gR" x1="1170.61" y1="25.85" x2="1235.58" y2="27.29"/><linearGradient id="m291" href="#gB" x1="32.22" y1="292.98" x2="39.37" y2="358.01"/><linearGradient id="m292" href="#gR" x1="1159.14" y1="-36.38" x2="1222.85" y2="-38.38"/><linearGradient id="m293" href="#gB" x1="39.68" y1="310.78" x2="48.26" y2="378.00"/><linearGradient id="m294" href="#gR" x1="1172.32" y1="27.01" x2="1234.92" y2="28.45"/><linearGradient id="m295" href="#gB" x1="46.23" y1="328.71" x2="55.04" y2="391.38"/><linearGradient id="m296" href="#gR" x1="1161.45" y1="-30.01" x2="1223.72" y2="-31.62"/><linearGradient id="m297" href="#gB" x1="47.90" y1="331.88" x2="57.07" y2="395.42"/><linearGradient id="m298" href="#gR" x1="1173.87" y1="27.27" x2="1234.22" y2="28.67"/><linearGradient id="m299" href="#gB" x1="59.55" y1="358.11" x2="69.59" y2="418.44"/><linearGradient id="m300" href="#gR" x1="853.09" y1="-414.56" x2="906.08" y2="-440.31"/><linearGradient id="m301" href="#gG" x1="82.65" y1="496.30" x2="69.72" y2="418.67"/><linearGradient id="m302" href="#gR" x1="512.28" y1="-465.05" x2="567.03" y2="-514.75"/><linearGradient id="m303" href="#gG" x1="271.08" y1="677.91" x2="245.73" y2="614.53"/><linearGradient id="m304" href="#gR" x1="930.66" y1="-366.82" x2="992.98" y2="-391.39"/><linearGradient id="m305" href="#gG" x1="-0.94" y1="333.17" x2="-0.61" y2="215.62"/><linearGradient id="m306" href="#gR" x1="483.27" y1="-451.65" x2="557.19" y2="-520.73"/><linearGradient id="m307" href="#gG" x1="543.03" y1="786.58" x2="495.35" y2="717.52"/><linearGradient id="m308" href="#gR" x1="974.52" y1="-332.27" x2="1044.95" y2="-356.29"/><linearGradient id="m309" href="#gG" x1="-22.81" y1="115.70" x2="7.35" y2="-37.29"/><linearGradient id="m310" href="#gR" x1="447.66" y1="-435.33" x2="543.76" y2="-528.77"/><linearGradient id="m311" href="#gG" x1="797.23" y1="775.05" x2="728.95" y2="708.67"/><linearGradient id="m312" href="#gR" x1="1001.94" y1="-307.36" x2="1079.93" y2="-331.29"/><linearGradient id="m313" href="#gG" x1="35.01" y1="-88.62" x2="104.30" y2="-264.05"/><linearGradient id="m314" href="#gR" x1="407.05" y1="-415.36" x2="528.24" y2="-539.03"/><linearGradient id="m315" href="#gG" x1="983.09" y1="696.05" x2="899.06" y2="636.55"/><linearGradient id="m316" href="#gR" x1="1020.47" y1="-288.93" x2="1105.71" y2="-313.07"/><linearGradient id="m317" href="#gG" x1="138.58" y1="-237.56" x2="246.58" y2="-422.72"/><linearGradient id="m318" href="#gR" x1="362.28" y1="-390.91" x2="511.28" y2="-551.68"/><linearGradient id="m319" href="#gG" x1="1102.82" y1="598.83" x2="1007.40" y2="547.02"/><linearGradient id="m320" href="#gR" x1="1136.25" y1="-98.37" x2="1210.48" y2="-104.80"/><linearGradient id="m321" href="#gB" x1="7.41" y1="198.59" x2="10.57" y2="283.20"/><linearGradient id="m322" href="#gR" x1="1153.15" y1="-38.80" x2="1228.74" y2="-41.35"/><linearGradient id="m323" href="#gB" x1="2.51" y1="174.62" x2="3.61" y2="251.79"/><linearGradient id="m324" href="#gR" x1="1138.23" y1="-94.30" x2="1210.34" y2="-100.27"/><linearGradient id="m325" href="#gB" x1="12.84" y1="223.27" x2="17.49" y2="304.27"/><linearGradient id="m326" href="#gR" x1="1155.16" y1="-36.29" x2="1227.55" y2="-38.56"/><linearGradient id="m327" href="#gB" x1="12.66" y1="225.33" x2="16.84" y2="299.59"/><linearGradient id="m328" href="#gR" x1="1140.38" y1="-89.83" x2="1210.35" y2="-95.34"/><linearGradient id="m329" href="#gB" x1="19.60" y1="249.55" x2="25.61" y2="326.16"/><linearGradient id="m330" href="#gR" x1="1157.25" y1="-33.62" x2="1226.46" y2="-35.63"/><linearGradient id="m331" href="#gB" x1="26.41" y1="273.58" x2="33.25" y2="344.46"/><linearGradient id="m332" href="#gR" x1="1142.74" y1="-84.91" x2="1210.51" y2="-89.94"/><linearGradient id="m333" href="#gB" x1="28.77" y1="279.92" x2="36.14" y2="351.68"/><linearGradient id="m334" href="#gR" x1="1159.40" y1="-30.77" x2="1225.50" y2="-32.52"/><linearGradient id="m335" href="#gB" x1="42.44" y1="317.36" x2="51.42" y2="384.53"/><linearGradient id="m336" href="#gR" x1="1145.27" y1="-79.60" x2="1210.80" y2="-84.16"/><linearGradient id="m337" href="#gB" x1="41.60" y1="315.69" x2="50.38" y2="382.35"/><linearGradient id="m338" href="#gR" x1="1161.54" y1="-28.08" x2="1224.59" y2="-29.61"/><linearGradient id="m339" href="#gB" x1="59.06" y1="355.11" x2="69.59" y2="418.44"/><linearGradient id="m340" href="#gR" x1="957.88" y1="-345.89" x2="1016.80" y2="-367.17"/><linearGradient id="m341" href="#gG" x1="84.08" y1="504.89" x2="69.72" y2="418.68"/><linearGradient id="m342" href="#gR" x1="673.19" y1="-460.87" x2="745.10" y2="-510.10"/><linearGradient id="m343" href="#gG" x1="329.10" y1="714.72" x2="297.39" y2="645.86"/><linearGradient id="m344" href="#gR" x1="1003.01" y1="-303.73" x2="1076.91" y2="-326.11"/><linearGradient id="m345" href="#gG" x1="2.70" y1="365.13" x2="1.62" y2="219.88"/><linearGradient id="m346" href="#gR" x1="717.85" y1="-443.46" x2="820.03" y2="-506.58"/><linearGradient id="m347" href="#gG" x1="616.55" y1="799.32" x2="552.59" y2="716.41"/><linearGradient id="m348" href="#gR" x1="1026.56" y1="-278.22" x2="1114.91" y2="-302.16"/><linearGradient id="m349" href="#gG" x1="-29.07" y1="226.87" x2="-2.46" y2="19.16"/><linearGradient id="m350" href="#gR" x1="753.57" y1="-426.36" x2="887.69" y2="-502.24"/><linearGradient id="m351" href="#gG" x1="848.80" y1="770.24" x2="752.57" y2="682.91"/><linearGradient id="m352" href="#gR" x1="1041.07" y1="-261.26" x2="1143.51" y2="-286.97"/><linearGradient id="m353" href="#gG" x1="-26.22" y1="108.89" x2="38.42" y2="-159.53"/><linearGradient id="m354" href="#gR" x1="782.51" y1="-410.29" x2="949.61" y2="-497.90"/><linearGradient id="m355" href="#gG" x1="1007.56" y1="694.33" x2="882.65" y2="608.25"/><linearGradient id="m356" href="#gR" x1="1050.98" y1="-249.21" x2="1167.27" y2="-276.78"/><linearGradient id="m357" href="#gG" x1="-8.34" y1="25.76" x2="97.53" y2="-301.40"/><linearGradient id="m358" href="#gR" x1="806.35" y1="-395.52" x2="1007.01" y2="-493.95"/><linearGradient id="m359" href="#gG" x1="1107.33" y1="611.89" x2="957.48" y2="529.09"/><linearGradient id="m360" href="#gR" x1="1119.52" y1="-139.32" x2="1198.00" y2="-149.08"/><linearGradient id="m361" href="#gB" x1="-2.07" y1="135.71" x2="-3.43" y2="225.09"/><linearGradient id="m362" href="#gR" x1="1136.80" y1="-93.00" x2="1215.82" y2="-99.46"/><linearGradient id="m363" href="#gB" x1="-1.67" y1="141.10" x2="-2.66" y2="225.15"/><linearGradient id="m364" href="#gR" x1="1120.77" y1="-137.09" x2="1196.43" y2="-146.35"/><linearGradient id="m365" href="#gB" x1="2.55" y1="171.47" x2="3.84" y2="258.35"/><linearGradient id="m366" href="#gR" x1="1138.66" y1="-90.47" x2="1213.93" y2="-96.45"/><linearGradient id="m367" href="#gB" x1="7.20" y1="198.73" x2="10.12" y2="279.62"/><linearGradient id="m368" href="#gR" x1="1122.18" y1="-134.61" x2="1194.98" y2="-143.34"/><linearGradient id="m369" href="#gB" x1="9.62" y1="209.40" x2="13.39" y2="291.48"/><linearGradient id="m370" href="#gR" x1="1140.64" y1="-87.76" x2="1212.17" y2="-93.27"/><linearGradient id="m371" href="#gB" x1="21.16" y1="254.70" x2="27.53" y2="331.31"/><linearGradient id="m372" href="#gR" x1="1123.77" y1="-131.81" x2="1193.70" y2="-140.01"/><linearGradient id="m373" href="#gB" x1="20.35" y1="252.24" x2="26.50" y2="328.46"/><linearGradient id="m374" href="#gR" x1="1142.75" y1="-84.85" x2="1210.56" y2="-89.89"/><linearGradient id="m375" href="#gB" x1="38.91" y1="306.41" x2="48.01" y2="378.06"/><linearGradient id="m376" href="#gR" x1="1125.56" y1="-128.67" x2="1192.58" y2="-136.33"/><linearGradient id="m377" href="#gB" x1="36.26" y1="300.95" x2="44.66" y2="370.71"/><linearGradient id="m378" href="#gR" x1="1144.95" y1="-81.82" x2="1209.06" y2="-86.41"/><linearGradient id="m379" href="#gB" x1="58.55" y1="352.09" x2="69.59" y2="418.44"/><linearGradient id="m380" href="#gR" x1="1039.39" y1="-265.77" x2="1101.71" y2="-281.70"/><linearGradient id="m381" href="#gG" x1="85.51" y1="513.46" x2="69.73" y2="418.68"/><linearGradient id="m382" href="#gR" x1="846.90" y1="-406.87" x2="933.35" y2="-448.40"/><linearGradient id="m383" href="#gG" x1="377.65" y1="739.60" x2="339.82" y2="665.51"/><linearGradient id="m384" href="#gR" x1="1058.52" y1="-240.89" x2="1141.57" y2="-259.79"/><linearGradient id="m385" href="#gG" x1="8.93" y1="401.39" x2="5.05" y2="226.87"/><linearGradient id="m386" href="#gR" x1="904.02" y1="-368.25" x2="1024.36" y2="-417.27"/><linearGradient id="m387" href="#gG" x1="674.59" y1="803.81" x2="593.46" y2="707.15"/><linearGradient id="m388" href="#gR" x1="1068.65" y1="-227.20" x2="1172.00" y2="-249.17"/><linearGradient id="m389" href="#gG" x1="-20.35" y1="333.69" x2="-4.08" y2="66.96"/><linearGradient id="m390" href="#gR" x1="939.52" y1="-339.36" x2="1092.43" y2="-394.60"/><linearGradient id="m391" href="#gG" x1="890.86" y1="762.17" x2="764.29" y2="653.87"/><linearGradient id="m392" href="#gR" x1="1075.19" y1="-218.51" x2="1198.44" y2="-243.56"/><linearGradient id="m393" href="#gG" x1="-30.76" y1="305.00" x2="6.43" y2="-63.77"/><linearGradient id="m394" href="#gR" x1="963.57" y1="-317.53" x2="1148.01" y2="-378.31"/><linearGradient id="m395" href="#gG" x1="1028.91" y1="688.23" x2="859.41" y2="574.85"/><linearGradient id="m396" href="#gR" x1="1079.92" y1="-212.52" x2="1222.72" y2="-240.62"/><linearGradient id="m397" href="#gG" x1="-25.68" y1="349.26" x2="9.56" y2="-129.99"/><linearGradient id="m398" href="#gR" x1="980.97" y1="-300.66" x2="1196.12" y2="-366.60"/><linearGradient id="m399" href="#gG" x1="1105.95" y1="622.89" x2="896.17" y2="504.74"/><linearGradient id="m400" href="#gR" x1="1098.41" y1="-177.29" x2="1214.02" y2="-195.95"/><linearGradient id="m401" href="#gB" x1="6.41" y1="-39.13" x2="-12.42" y2="75.84"/><linearGradient id="m402" href="#gR" x1="1123.07" y1="-120.52" x2="1238.36" y2="-132.90"/><linearGradient id="m403" href="#gB" x1="-4.42" y1="103.69" x2="-8.20" y2="192.54"/><linearGradient id="m404" href="#gR" x1="1098.41" y1="-177.29" x2="1206.68" y2="-194.77"/><linearGradient id="m405" href="#gB" x1="-2.53" y1="130.13" x2="-4.32" y2="221.82"/><linearGradient id="m406" href="#gR" x1="1124.28" y1="-119.92" x2="1230.62" y2="-131.26"/><linearGradient id="m407" href="#gB" x1="2.64" y1="172.04" x2="3.97" y2="258.92"/><linearGradient id="m408" href="#gR" x1="1098.41" y1="-177.29" x2="1199.63" y2="-193.63"/><linearGradient id="m409" href="#gB" x1="3.08" y1="174.59" x2="4.62" y2="261.81"/><linearGradient id="m410" href="#gR" x1="1125.57" y1="-119.17" x2="1223.41" y2="-129.53"/><linearGradient id="m411" href="#gB" x1="16.49" y1="236.39" x2="22.22" y2="318.56"/><linearGradient id="m412" href="#gR" x1="1098.41" y1="-177.29" x2="1192.84" y2="-192.53"/><linearGradient id="m413" href="#gB" x1="13.86" y1="227.42" x2="18.77" y2="307.99"/><linearGradient id="m414" href="#gR" x1="1126.96" y1="-118.26" x2="1216.72" y2="-127.68"/><linearGradient id="m415" href="#gB" x1="35.64" y1="295.89" x2="44.80" y2="371.99"/><linearGradient id="m416" href="#gR" x1="1098.41" y1="-177.29" x2="1186.31" y2="-191.48"/><linearGradient id="m417" href="#gB" x1="31.69" y1="287.48" x2="39.73" y2="360.33"/><linearGradient id="m418" href="#gR" x1="1128.45" y1="-117.20" x2="1210.52" y2="-125.73"/><linearGradient id="m419" href="#gB" x1="58.05" y1="349.07" x2="69.59" y2="418.44"/><linearGradient id="m420" href="#gR" x1="1098.41" y1="-177.29" x2="1180.02" y2="-190.46"/><linearGradient id="m421" href="#gG" x1="86.94" y1="522.00" x2="69.73" y2="418.68"/><linearGradient id="m422" href="#gR" x1="906.59" y1="-369.19" x2="1055.06" y2="-429.65"/><linearGradient id="m423" href="#gG" x1="418.41" y1="756.81" x2="374.66" y2="677.68"/><linearGradient id="m424" href="#gR" x1="1098.41" y1="-177.29" x2="1236.15" y2="-199.52"/><linearGradient id="m425" href="#gG" x1="17.54" y1="439.52" x2="9.36" y2="234.51"/><linearGradient id="m426" href="#gR" x1="905.83" y1="-359.39" x2="1174.31" y2="-465.91"/><linearGradient id="m427" href="#gG" x1="721.46" y1="803.76" x2="622.45" y2="693.45"/><linearGradient id="m428" href="#gR" x1="1098.41" y1="-177.29" x2="1315.94" y2="-212.40"/><linearGradient id="m429" href="#gG" x1="1.98" y1="433.78" x2="0.48" y2="105.87"/><linearGradient id="m430" href="#gR" x1="856.19" y1="-375.53" x2="1346.68" y2="-590.67"/><linearGradient id="m431" href="#gG" x1="924.73" y1="752.40" x2="766.10" y2="623.33"/><linearGradient id="m432" href="#gR" x1="1098.41" y1="-177.29" x2="1439.64" y2="-232.37"/><linearGradient id="m433" href="#gG" x1="17.72" y1="489.80" x2="0.91" y2="25.22"/><linearGradient id="m434" href="#gR" x1="668.27" y1="-416.39" x2="1688.66" y2="-1052.18"/><linearGradient id="m435" href="#gG" x1="1042.51" y1="682.80" x2="826.17" y2="541.10"/><linearGradient id="m436" href="#gR" x1="1098.41" y1="-177.29" x2="1658.74" y2="-267.73"/><linearGradient id="m437" href="#gG" x1="889.98" y1="-340.73" x2="1178.90" y2="-451.34"/><linearGradient id="m438" href="#gR" x1="32.31" y1="549.49" x2="-215.64" y2="-3667.72"/><linearGradient id="m439" href="#gG" x1="1245.41" y1="156.68" x2="1107.54" y2="139.33"/><linearGradient id="m440" href="#gR" x1="242.22" y1="-356.98" x2="282.39" y2="-416.18"/><linearGradient id="m441" href="#gG" x1="350.51" y1="726.84" x2="320.09" y2="663.76"/><linearGradient id="m442" href="#gR" x1="320.16" y1="-405.35" x2="362.14" y2="-458.50"/><linearGradient id="m443" href="#gG" x1="313.18" y1="708.18" x2="284.43" y2="643.18"/><linearGradient id="m444" href="#gR" x1="385.44" y1="-435.51" x2="427.53" y2="-483.07"/><linearGradient id="m445" href="#gG" x1="274.73" y1="685.29" x2="248.05" y2="618.75"/><linearGradient id="m446" href="#gR" x1="432.55" y1="-452.77" x2="473.43" y2="-495.56"/><linearGradient id="m447" href="#gG" x1="236.29" y1="658.16" x2="212.04" y2="590.62"/><linearGradient id="m448" href="#gR" x1="458.47" y1="-461.63" x2="497.13" y2="-500.56"/><linearGradient id="m449" href="#gG" x1="199.27" y1="627.32" x2="177.73" y2="559.49"/><linearGradient id="m450" href="#gG" x1="1274.27" y1="325.21" x2="1207.39" y2="308.14"/><linearGradient id="m451" href="#gB" x1="539.09" y1="-540.55" x2="499.68" y2="-501.04"/><linearGradient id="m452" href="#gG" x1="1255.65" y1="377.46" x2="1188.84" y2="357.38"/><linearGradient id="m453" href="#gB" x1="575.12" y1="-548.10" x2="531.02" y2="-506.06"/><linearGradient id="m454" href="#gG" x1="1228.16" y1="435.00" x2="1162.53" y2="411.76"/><linearGradient id="m455" href="#gB" x1="649.16" y1="-554.61" x2="598.62" y2="-511.44"/><linearGradient id="m456" href="#gG" x1="1196.79" y1="486.22" x2="1133.10" y2="460.35"/><linearGradient id="m457" href="#gB" x1="755.55" y1="-548.12" x2="697.55" y2="-506.04"/><linearGradient id="m458" href="#gG" x1="1163.71" y1="530.18" x2="1102.43" y2="502.26"/><linearGradient id="m459" href="#gB" x1="885.74" y1="-514.89" x2="820.08" y2="-476.72"/><linearGradient id="m460" href="#gR" x1="552.70" y1="-454.06" x2="638.14" y2="-524.25"/><linearGradient id="m461" href="#gG" x1="442.42" y1="788.31" x2="379.20" y2="675.68"/><linearGradient id="m462" href="#gR" x1="844.48" y1="-417.67" x2="905.96" y2="-448.08"/><linearGradient id="m463" href="#gG" x1="20.82" y1="405.40" x2="13.66" y2="266.08"/><linearGradient id="m464" href="#gR" x1="556.87" y1="-457.31" x2="633.79" y2="-520.48"/><linearGradient id="m465" href="#gG" x1="408.84" y1="776.07" x2="350.78" y2="665.87"/><linearGradient id="m466" href="#gR" x1="744.11" y1="-454.11" x2="800.45" y2="-488.49"/><linearGradient id="m467" href="#gG" x1="38.59" y1="438.64" x2="27.67" y2="314.51"/><linearGradient id="m468" href="#gR" x1="552.72" y1="-460.65" x2="620.86" y2="-517.43"/><linearGradient id="m469" href="#gG" x1="371.53" y1="759.75" x2="319.09" y2="652.50"/><linearGradient id="m470" href="#gR" x1="641.69" y1="-472.35" x2="692.23" y2="-509.55"/><linearGradient id="m471" href="#gG" x1="55.80" y1="465.82" x2="42.56" y2="355.28"/><linearGradient id="m472" href="#gR" x1="537.07" y1="-463.48" x2="596.26" y2="-514.56"/><linearGradient id="m473" href="#gG" x1="330.65" y1="738.29" x2="284.26" y2="634.72"/><linearGradient id="m474" href="#gR" x1="545.07" y1="-473.58" x2="589.59" y2="-512.27"/><linearGradient id="m475" href="#gG" x1="71.65" y1="487.50" x2="57.18" y2="389.04"/><linearGradient id="m476" href="#gR" x1="506.83" y1="-464.28" x2="557.04" y2="-510.26"/><linearGradient id="m477" href="#gG" x1="286.78" y1="710.65" x2="246.86" y2="611.73"/><linearGradient id="m478" href="#gR" x1="461.57" y1="-462.36" x2="500.33" y2="-501.19"/><linearGradient id="m479" href="#gG" x1="85.48" y1="504.08" x2="70.58" y2="416.26"/><linearGradient id="m480" href="#gG" x1="1243.07" y1="455.67" x2="1149.86" y2="421.50"/><linearGradient id="m481" href="#gB" x1="548.89" y1="-550.38" x2="499.68" y2="-501.04"/><linearGradient id="m482" href="#gG" x1="1318.03" y1="26.06" x2="1223.59" y2="24.20"/><linearGradient id="m483" href="#gB" x1="419.09" y1="-509.54" x2="383.76" y2="-466.59"/><linearGradient id="m484" href="#gG" x1="1213.27" y1="510.82" x2="1115.02" y2="469.45"/><linearGradient id="m485" href="#gB" x1="545.07" y1="-556.21" x2="487.02" y2="-496.97"/><linearGradient id="m486" href="#gG" x1="1314.36" y1="-46.60" x2="1205.48" y2="-42.74"/><linearGradient id="m487" href="#gB" x1="295.25" y1="-451.17" x2="262.50" y2="-401.12"/><linearGradient id="m488" href="#gG" x1="1182.05" y1="556.79" x2="1079.78" y2="508.62"/><linearGradient id="m489" href="#gB" x1="559.36" y1="-564.26" x2="490.95" y2="-495.25"/><linearGradient id="m490" href="#gG" x1="1304.70" y1="-117.74" x2="1179.17" y2="-106.41"/><linearGradient id="m491" href="#gB" x1="184.88" y1="-365.33" x2="156.14" y2="-308.54"/><linearGradient id="m492" href="#gG" x1="1152.14" y1="593.48" x2="1046.64" y2="539.14"/><linearGradient id="m493" href="#gB" x1="587.98" y1="-573.04" x2="507.78" y2="-494.87"/><linearGradient id="m494" href="#gG" x1="1283.27" y1="-198.68" x2="1139.60" y2="-176.44"/><linearGradient id="m495" href="#gB" x1="97.35" y1="-258.98" x2="73.94" y2="-196.70"/><linearGradient id="m496" href="#gG" x1="1124.46" y1="622.72" x2="1016.23" y2="562.78"/><linearGradient id="m497" href="#gB" x1="626.26" y1="-580.52" x2="533.02" y2="-494.09"/><linearGradient id="m498" href="#gG" x1="1245.70" y1="-287.61" x2="1083.01" y2="-250.05"/><linearGradient id="m499" href="#gB" x1="37.65" y1="-143.30" x2="20.24" y2="-77.04"/><linearGradient id="m500" href="#gR" x1="812.87" y1="-404.99" x2="943.24" y2="-469.94"/><linearGradient id="m501" href="#gG" x1="543.75" y1="833.33" x2="425.62" y2="652.29"/><linearGradient id="m502" href="#gR" x1="896.89" y1="-377.94" x2="991.39" y2="-417.76"/><linearGradient id="m503" href="#gG" x1="191.16" y1="675.15" x2="128.97" y2="455.50"/><linearGradient id="m504" href="#gR" x1="756.35" y1="-426.49" x2="870.49" y2="-490.85"/><linearGradient id="m505" href="#gG" x1="515.41" y1="826.80" x2="408.30" y2="654.99"/><linearGradient id="m506" href="#gR" x1="791.43" y1="-427.94" x2="875.55" y2="-473.43"/><linearGradient id="m507" href="#gG" x1="191.44" y1="667.76" x2="136.10" y2="474.73"/><linearGradient id="m508" href="#gR" x1="694.94" y1="-444.33" x2="791.99" y2="-506.38"/><linearGradient id="m509" href="#gG" x1="482.31" y1="817.36" x2="386.69" y2="655.32"/><linearGradient id="m510" href="#gR" x1="675.98" y1="-457.94" x2="748.30" y2="-506.93"/><linearGradient id="m511" href="#gG" x1="190.91" y1="659.78" x2="142.16" y2="491.31"/><linearGradient id="m512" href="#gR" x1="625.48" y1="-457.21" x2="705.36" y2="-515.60"/><linearGradient id="m513" href="#gG" x1="443.62" y1="803.77" x2="360.00" y2="652.27"/><linearGradient id="m514" href="#gR" x1="559.52" y1="-465.47" x2="619.53" y2="-515.39"/><linearGradient id="m515" href="#gG" x1="189.36" y1="651.00" x2="146.92" y2="505.07"/><linearGradient id="m516" href="#gR" x1="545.40" y1="-462.06" x2="608.56" y2="-515.57"/><linearGradient id="m517" href="#gG" x1="398.53" y1="784.29" x2="327.43" y2="644.36"/><linearGradient id="m518" href="#gR" x1="452.08" y1="-452.92" x2="500.25" y2="-501.18"/><linearGradient id="m519" href="#gG" x1="186.48" y1="641.08" x2="150.02" y2="515.75"/><linearGradient id="m520" href="#gG" x1="1186.06" y1="578.28" x2="1059.35" y2="516.50"/><linearGradient id="m521" href="#gB" x1="560.03" y1="-561.55" x2="499.68" y2="-501.04"/><linearGradient id="m522" href="#gG" x1="1349.02" y1="165.96" x2="1203.33" y2="148.03"/><linearGradient id="m523" href="#gB" x1="385.10" y1="-501.62" x2="342.97" y2="-446.73"/><linearGradient id="m524" href="#gG" x1="1153.69" y1="621.10" x2="1013.84" y2="545.81"/><linearGradient id="m525" href="#gB" x1="505.21" y1="-559.91" x2="432.94" y2="-479.82"/><linearGradient id="m526" href="#gG" x1="1364.78" y1="152.13" x2="1186.95" y2="132.30"/><linearGradient id="m527" href="#gB" x1="243.13" y1="-420.61" x2="202.91" y2="-351.03"/><linearGradient id="m528" href="#gG" x1="1124.84" y1="653.36" x2="972.72" y2="565.00"/><linearGradient id="m529" href="#gB" x1="454.12" y1="-552.14" x2="370.49" y2="-450.46"/><linearGradient id="m530" href="#gG" x1="1380.57" y1="140.73" x2="1166.73" y2="118.93"/><linearGradient id="m531" href="#gB" x1="131.41" y1="-310.83" x2="96.19" y2="-227.51"/><linearGradient id="m532" href="#gG" x1="1099.80" y1="677.86" x2="936.05" y2="576.93"/><linearGradient id="m533" href="#gB" x1="404.01" y1="-537.93" x2="310.36" y2="-413.23"/><linearGradient id="m534" href="#gG" x1="1396.46" y1="127.76" x2="1142.73" y2="104.55"/><linearGradient id="m535" href="#gB" x1="55.35" y1="-187.89" x2="27.38" y2="-92.95"/><linearGradient id="m536" href="#gG" x1="1078.11" y1="696.84" x2="903.19" y2="583.78"/><linearGradient id="m537" href="#gB" x1="350.52" y1="-514.97" x2="249.53" y2="-366.60"/><linearGradient id="m538" href="#gG" x1="1412.40" y1="113.36" x2="1114.77" y2="89.47"/><linearGradient id="m539" href="#gB" x1="12.56" y1="-66.58" x2="-7.08" y2="37.53"/><linearGradient id="m540" href="#gR" x1="958.00" y1="-322.00" x2="1122.54" y2="-377.30"/><linearGradient id="m541" href="#gG" x1="648.12" y1="853.27" x2="457.47" y2="602.27"/><linearGradient id="m542" href="#gR" x1="939.28" y1="-341.76" x2="1069.91" y2="-389.29"/><linearGradient id="m543" href="#gG" x1="414.47" y1="819.82" x2="269.35" y2="532.76"/><linearGradient id="m544" href="#gR" x1="880.01" y1="-371.32" x2="1026.58" y2="-433.16"/><linearGradient id="m545" href="#gG" x1="627.20" y1="851.74" x2="454.46" y2="617.15"/><linearGradient id="m546" href="#gR" x1="827.30" y1="-403.64" x2="942.82" y2="-460.00"/><linearGradient id="m547" href="#gG" x1="397.32" y1="807.77" x2="271.75" y2="552.48"/><linearGradient id="m548" href="#gR" x1="790.25" y1="-413.24" x2="914.48" y2="-478.21"/><linearGradient id="m549" href="#gG" x1="601.79" y1="848.77" x2="447.44" y2="631.07"/><linearGradient id="m550" href="#gR" x1="700.12" y1="-443.54" x2="797.34" y2="-505.13"/><linearGradient id="m551" href="#gG" x1="378.96" y1="794.24" x2="271.91" y2="569.88"/><linearGradient id="m552" href="#gR" x1="687.66" y1="-443.82" x2="787.81" y2="-508.46"/><linearGradient id="m553" href="#gG" x1="570.50" y1="843.54" x2="435.12" y2="643.38"/><linearGradient id="m554" href="#gR" x1="567.42" y1="-456.27" x2="645.04" y2="-518.68"/><linearGradient id="m555" href="#gG" x1="359.18" y1="778.94" x2="269.54" y2="584.53"/><linearGradient id="m556" href="#gR" x1="572.44" y1="-457.55" x2="648.50" y2="-518.35"/><linearGradient id="m557" href="#gG" x1="531.45" y1="834.64" x2="415.72" y2="652.89"/><linearGradient id="m558" href="#gR" x1="441.46" y1="-442.31" x2="500.19" y2="-501.17"/><linearGradient id="m559" href="#gG" x1="337.67" y1="761.46" x2="264.23" y2="595.85"/><linearGradient id="m560" href="#gG" x1="1103.09" y1="683.22" x2="942.26" y2="583.61"/><linearGradient id="m561" href="#gB" x1="571.19" y1="-572.73" x2="499.68" y2="-501.04"/><linearGradient id="m562" href="#gG" x1="1326.18" y1="375.94" x2="1120.51" y2="317.64"/><linearGradient id="m563" href="#gB" x1="364.82" y1="-497.96" x2="314.82" y2="-429.71"/><linearGradient id="m564" href="#gG" x1="1073.70" y1="710.64" x2="890.70" y2="589.52"/><linearGradient id="m565" href="#gB" x1="472.65" y1="-561.29" x2="387.12" y2="-459.72"/><linearGradient id="m566" href="#gG" x1="1328.68" y1="408.14" x2="1077.05" y2="330.85"/><linearGradient id="m567" href="#gB" x1="211.18" y1="-399.17" x2="162.76" y2="-307.66"/><linearGradient id="m568" href="#gG" x1="1049.83" y1="730.16" x2="845.29" y2="587.90"/><linearGradient id="m569" href="#gB" x1="372.92" y1="-528.17" x2="277.56" y2="-393.12"/><linearGradient id="m570" href="#gG" x1="1328.79" y1="439.04" x2="1029.49" y2="340.15"/><linearGradient id="m571" href="#gB" x1="100.08" y1="-271.13" x2="58.30" y2="-157.95"/><linearGradient id="m572" href="#gG" x1="1030.20" y1="744.51" x2="804.66" y2="581.51"/><linearGradient id="m573" href="#gB" x1="275.87" y1="-472.53" x2="176.83" y2="-302.88"/><linearGradient id="m574" href="#gG" x1="1327.43" y1="467.32" x2="979.18" y2="344.72"/><linearGradient id="m575" href="#gB" x1="32.69" y1="-135.43" x2="0.98" y2="-4.07"/><linearGradient id="m576" href="#gG" x1="1013.80" y1="755.37" x2="767.66" y2="571.98"/><linearGradient id="m577" href="#gB" x1="182.37" y1="-390.52" x2="88.51" y2="-189.54"/><linearGradient id="m578" href="#gG" x1="1324.92" y1="493.22" x2="926.74" y2="344.99"/><linearGradient id="m579" href="#gB" x1="1.46" y1="-10.39" x2="-18.92" y2="134.99"/><linearGradient id="m580" href="#gR" x1="1031.56" y1="-260.03" x2="1222.76" y2="-308.23"/><linearGradient id="m581" href="#gG" x1="749.30" y1="847.17" x2="481.51" y2="544.40"/><linearGradient id="m582" href="#gR" x1="977.56" y1="-308.07" x2="1141.49" y2="-359.72"/><linearGradient id="m583" href="#gG" x1="598.48" y1="860.26" x2="367.98" y2="528.93"/><linearGradient id="m584" href="#gR" x1="950.44" y1="-324.67" x2="1126.11" y2="-384.68"/><linearGradient id="m585" href="#gG" x1="738.67" y1="848.78" x2="494.49" y2="568.20"/><linearGradient id="m586" href="#gR" x1="857.93" y1="-381.56" x2="1004.43" y2="-446.71"/><linearGradient id="m587" href="#gG" x1="580.52" y1="855.76" x2="378.44" y2="557.87"/><linearGradient id="m588" href="#gR" x1="848.37" y1="-384.57" x2="998.28" y2="-452.53"/><linearGradient id="m589" href="#gG" x1="725.16" y1="850.23" x2="505.05" y2="592.15"/><linearGradient id="m590" href="#gR" x1="719.55" y1="-430.36" x2="841.91" y2="-503.54"/><linearGradient id="m591" href="#gG" x1="560.08" y1="849.89" x2="385.85" y2="585.51"/><linearGradient id="m592" href="#gR" x1="727.05" y1="-430.08" x2="846.91" y2="-500.98"/><linearGradient id="m593" href="#gG" x1="707.60" y1="851.29" x2="512.14" y2="616.14"/><linearGradient id="m594" href="#gR" x1="572.33" y1="-447.42" x2="667.78" y2="-522.04"/><linearGradient id="m595" href="#gG" x1="536.66" y1="842.23" x2="389.55" y2="611.35"/><linearGradient id="m596" href="#gR" x1="589.06" y1="-452.10" x2="677.84" y2="-520.24"/><linearGradient id="m597" href="#gG" x1="684.14" y1="851.54" x2="514.08" y2="639.87"/><linearGradient id="m598" href="#gR" x1="430.84" y1="-431.71" x2="500.14" y2="-501.16"/><linearGradient id="m599" href="#gG" x1="509.60" y1="832.15" x2="388.67" y2="634.68"/><linearGradient id="m600" href="#gG" x1="989.48" y1="769.03" x2="802.80" y2="623.95"/><linearGradient id="m601" href="#gB" x1="582.34" y1="-583.92" x2="499.68" y2="-501.04"/><linearGradient id="m602" href="#gG" x1="1222.15" y1="582.23" x2="968.35" y2="461.32"/><linearGradient id="m603" href="#gB" x1="351.53" y1="-496.52" x2="293.74" y2="-414.90"/><linearGradient id="m604" href="#gG" x1="969.26" y1="780.47" x2="752.68" y2="606.07"/><linearGradient id="m605" href="#gB" x1="451.01" y1="-563.55" x2="352.50" y2="-440.46"/><linearGradient id="m606" href="#gG" x1="1200.84" y1="620.47" x2="897.54" y2="463.76"/><linearGradient id="m607" href="#gB" x1="189.07" y1="-382.72" x2="133.00" y2="-269.22"/><linearGradient id="m608" href="#gG" x1="953.72" y1="788.08" x2="707.76" y2="584.84"/><linearGradient id="m609" href="#gB" x1="319.80" y1="-506.18" x2="213.85" y2="-338.47"/><linearGradient id="m610" href="#gG" x1="1180.54" y1="650.97" x2="828.84" y2="457.03"/><linearGradient id="m611" href="#gB" x1="78.77" y1="-238.75" x2="31.65" y2="-95.93"/><linearGradient id="m612" href="#gG" x1="941.33" y1="793.32" x2="666.47" y2="561.68"/><linearGradient id="m613" href="#gB" x1="200.19" y1="-412.92" x2="97.91" y2="-201.96"/><linearGradient id="m614" href="#gG" x1="1161.83" y1="675.36" x2="762.71" y2="443.36"/><linearGradient id="m615" href="#gB" x1="18.47" y1="-91.59" x2="-15.13" y2="75.02"/><linearGradient id="m616" href="#gG" x1="931.13" y1="797.02" x2="627.77" y2="537.36"/><linearGradient id="m617" href="#gB" x1="96.39" y1="-279.24" x2="13.03" y2="-37.75"/><linearGradient id="m618" href="#gG" x1="1144.66" y1="695.11" x2="699.05" y2="424.51"/><linearGradient id="m619" href="#gB" x1="-3.48" y1="32.44" x2="-23.15" y2="216.03"/><linearGradient id="m620" href="#gR" x1="1218.20" y1="37.41" x2="1485.16" y2="45.61"/><linearGradient id="m621" href="#gG" x1="842.37" y1="844.11" x2="-1123.54" y2="-1125.86"/><linearGradient id="m622" href="#gR" x1="1011.78" y1="-277.02" x2="1204.29" y2="-329.73"/><linearGradient id="m623" href="#gG" x1="298.58" y1="801.78" x2="-529.21" y2="-1421.10"/><linearGradient id="m624" href="#gR" x1="995.46" y1="-288.53" x2="1198.27" y2="-347.31"/><linearGradient id="m625" href="#gG" x1="844.98" y1="842.48" x2="-433.71" y2="-432.43"/><linearGradient id="m626" href="#gR" x1="883.19" y1="-362.12" x2="1059.84" y2="-434.55"/><linearGradient id="m627" href="#gG" x1="425.79" y1="845.60" x2="-247.17" y2="-490.88"/><linearGradient id="m628" href="#gR" x1="887.03" y1="-360.77" x2="1061.78" y2="-431.85"/><linearGradient id="m629" href="#gG" x1="846.05" y1="841.64" x2="-53.07" y2="-52.79"/><linearGradient id="m630" href="#gR" x1="734.62" y1="-418.48" x2="882.15" y2="-502.52"/><linearGradient id="m631" href="#gG" x1="492.39" y1="855.07" x2="-13.98" y2="-24.28"/><linearGradient id="m632" href="#gR" x1="753.54" y1="-417.74" x2="892.80" y2="-494.94"/><linearGradient id="m633" href="#gG" x1="846.30" y1="841.19" x2="188.15" y2="187.01"/><linearGradient id="m634" href="#gR" x1="574.73" y1="-438.90" x2="688.14" y2="-525.51"/><linearGradient id="m635" href="#gG" x1="528.56" y1="855.07" x2="153.41" y2="248.17"/><linearGradient id="m636" href="#gR" x1="599.43" y1="-446.47" x2="700.83" y2="-522.00"/><linearGradient id="m637" href="#gG" x1="845.91" y1="840.97" x2="354.56" y2="352.49"/><linearGradient id="m638" href="#gR" x1="420.24" y1="-421.12" x2="500.10" y2="-501.15"/><linearGradient id="m639" href="#gG" x1="546.75" y1="851.59" x2="272.15" y2="423.88"/><linearGradient id="m640" href="#gG" x1="859.95" y1="836.85" x2="487.05" y2="473.97"/><linearGradient id="m641" href="#gB" x1="593.50" y1="-595.11" x2="499.68" y2="-501.04"/><linearGradient id="m642" href="#gG" x1="1280.37" y1="534.52" x2="566.94" y2="236.68"/><linearGradient id="m643" href="#gB" x1="342.56" y1="-496.66" x2="277.05" y2="-401.69"/><linearGradient id="m644" href="#gG" x1="860.26" y1="837.15" x2="320.58" y2="311.97"/><linearGradient id="m645" href="#gB" x1="436.26" y1="-566.90" x2="324.97" y2="-422.28"/><linearGradient id="m646" href="#gG" x1="1347.30" y1="452.95" x2="152.30" y2="51.20"/><linearGradient id="m647" href="#gB" x1="173.13" y1="-370.11" x2="109.76" y2="-234.64"/><linearGradient id="m648" href="#gG" x1="860.94" y1="837.53" x2="64.13" y2="62.39"/><linearGradient id="m649" href="#gB" x1="283.01" y1="-487.91" x2="167.14" y2="-288.14"/><linearGradient id="m650" href="#gG" x1="1442.79" y1="220.68" x2="-765.27" y2="-117.05"/><linearGradient id="m651" href="#gB" x1="63.75" y1="-212.32" x2="12.07" y2="-40.20"/><linearGradient id="m652" href="#gG" x1="862.31" y1="838.12" x2="-384.04" y2="-373.27"/><linearGradient id="m653" href="#gB" x1="151.99" y1="-363.03" x2="47.53" y2="-113.52"/><linearGradient id="m654" href="#gG" x1="1236.16" y1="-446.03" x2="-2900.81" y2="1046.66"/><linearGradient id="m655" href="#gB" x1="9.53" y1="-55.49" x2="-24.92" y2="145.05"/><linearGradient id="m656" href="#gG" x1="865.53" y1="839.34" x2="-1370.91" y2="-1329.43"/><linearGradient id="m657" href="#gB" x1="294.01" y1="-511.22" x2="46.15" y2="-80.24"/><linearGradient id="m658" href="#gG" x1="22.53" y1="-115.26" x2="-949.04" y2="4854.70"/><linearGradient id="m659" href="#gB" x1="59.26" y1="396.08" x2="84.51" y2="564.84"/><linearGradient id="insIn" gradientUnits="userSpaceOnUse" x1="1440" y1="500" x2="1650" y2="600"><stop offset="0" stop-color="#b0ff00"/><stop offset="0.45" stop-color="#ffff00"/><stop offset="1" stop-color="#ffaa00"/></linearGradient><linearGradient id="insOut" gradientUnits="userSpaceOnUse" x1="1440" y1="460" x2="1650" y2="590"><stop offset="0" stop-color="#5e9600"/><stop offset="0.5" stop-color="#9a9400"/><stop offset="1" stop-color="#8c6400"/></linearGradient><linearGradient id="rbR" x1="0" y1="0" x2="0" y2="1"><stop offset="0" stop-color="#ff5858"/><stop offset="1" stop-color="#ff3030"/></linearGradient><linearGradient id="rbG" x1="0" y1="0" x2="0" y2="1"><stop offset="0" stop-color="#58ac58"/><stop offset="1" stop-color="#3c9a3c"/></linearGradient><linearGradient id="rbB" x1="0" y1="0" x2="0" y2="1"><stop offset="0" stop-color="#5656ff"/><stop offset="1" stop-color="#4848ff"/></linearGradient><linearGradient id="thd" x1="0" y1="0" x2="0" y2="1"><stop offset="0" stop-color="#363636"/><stop offset="0.48" stop-color="#3a3a3a"/><stop offset="0.5" stop-color="#161616"/><stop offset="1" stop-color="#121212"/></linearGradient><linearGradient id="btn" x1="0" y1="0" x2="0" y2="1"><stop offset="0" stop-color="#a8a8a8"/><stop offset="1" stop-color="#5a5a5a"/></linearGradient><linearGradient id="btnsel" x1="0" y1="0" x2="0" y2="1"><stop offset="0" stop-color="#1c1c1c"/><stop offset="1" stop-color="#3a3a3a"/></linearGradient><linearGradient id="circ" x1="0" y1="0" x2="0" y2="1"><stop offset="0" stop-color="#6a6a6a"/><stop offset="1" stop-color="#b4b4b4"/></linearGradient><linearGradient id="circd" x1="0" y1="0" x2="0" y2="1"><stop offset="0" stop-color="#3a3a3a"/><stop offset="1" stop-color="#8a8a8a"/></linearGradient><linearGradient id="darkr" x1="0" y1="0" x2="0" y2="1"><stop offset="0" stop-color="#464646"/><stop offset="1" stop-color="#1e1e1e"/></linearGradient><linearGradient id="stopb" x1="0" y1="0" x2="0" y2="1"><stop offset="0" stop-color="#bdbdbd"/><stop offset="0.5" stop-color="#b0b0b0"/><stop offset="0.5" stop-color="#989898"/><stop offset="1" stop-color="#a6a6a6"/></linearGradient><linearGradient id="btn2" x1="0" y1="0" x2="0" y2="1"><stop offset="0" stop-color="#b2b2b2"/><stop offset="1" stop-color="#5e5e5e"/></linearGradient><linearGradient id="wdg" x1="0" y1="0" x2="0" y2="1"><stop offset="0" stop-color="#4e4e4e"/><stop offset="1" stop-color="#727272"/></linearGradient><linearGradient id="gearb" x1="0" y1="0" x2="0" y2="1"><stop offset="0" stop-color="#5e5e5e"/><stop offset="1" stop-color="#7a7a7a"/></linearGradient><linearGradient id="rshadow" x1="0" y1="0" x2="1" y2="0"><stop offset="0" stop-color="#000" stop-opacity="0"/><stop offset="0.5" stop-color="#000" stop-opacity="0.25"/><stop offset="1" stop-color="#000" stop-opacity="0.62"/></linearGradient></defs>
<rect x="0" y="0" width="1668" height="1005" fill="#333333"/>
<rect x="0" y="0" width="1668" height="37.5" fill="#222222"/>
<path d="M0,0 H108 Q113,0 113,5 V36 H0 Z" fill="url(#tabg)"/>
<rect x="0" y="36" width="114" height="1.5" fill="#282828"/>
<rect x="72" y="0" width="1" height="36" fill="#8a8a8a"/>
<rect x="112.5" y="2" width="1" height="34" fill="#8a8a8a"/>
<circle cx="91.6" cy="19.8" r="11.5" fill="#3b3b3b"/>
<path d="M88,21.5 H95 M91.5,18 V25" stroke="#8a8a8a" stroke-width="1.2"/>
<text x="7.0" y="23.8" font-size="13.5" fill="#e8e8e8" textLength="57.7" lengthAdjust="spacingAndGlyphs">History 1</text>
<text x="7.6" y="123.0" font-size="37.5" fill="#f2f2f2" textLength="332.0" lengthAdjust="spacingAndGlyphs" stroke="#f2f2f2" stroke-width="0.7">Saturation Sweeps</text>
<text x="181.0" y="210.0" font-size="14" text-anchor="middle" fill="#d8d8d8" textLength="77.0" lengthAdjust="spacingAndGlyphs">DeltaE 2000</text>
<rect x="43" y="215" width="311.2" height="386" fill="#242424"/>
<rect x="83.9" y="215" width="1.3" height="386" fill="#8f8f8f"/>
<rect x="125.4" y="215" width="1.3" height="386" fill="#8f8f8f"/>
<rect x="166.9" y="215" width="1.3" height="386" fill="#8f8f8f"/>
<rect x="208.4" y="215" width="1.3" height="386" fill="#8f8f8f"/>
<rect x="249.9" y="215" width="1.3" height="386" fill="#8f8f8f"/>
<rect x="291.4" y="215" width="1.3" height="386" fill="#8f8f8f"/>
<rect x="332.9" y="215" width="1.3" height="386" fill="#8f8f8f"/>
<rect x="353.4" y="215" width="1.5" height="386" fill="#8f8f8f"/>
<rect x="42.2" y="214" width="312.2" height="1.6" fill="#8f8f8f"/>
<rect x="42.2" y="600.2" width="312.2" height="1.6" fill="#8f8f8f"/>
<rect x="42.2" y="214" width="1.6" height="394" fill="#8f8f8f"/>
<rect x="37" y="214.4" width="6" height="1.3" fill="#e8e8e8"/>
<rect x="37" y="278.7" width="6" height="1.3" fill="#c4c4c4"/>
<rect x="37" y="343.0" width="6" height="1.3" fill="#c4c4c4"/>
<rect x="37" y="407.3" width="6" height="1.3" fill="#c4c4c4"/>
<rect x="37" y="471.5" width="6" height="1.3" fill="#c4c4c4"/>
<rect x="37" y="535.8" width="6" height="1.3" fill="#c4c4c4"/>
<rect x="37" y="600.1" width="6" height="1.3" fill="#c4c4c4"/>
<rect x="83.8" y="601" width="1.5" height="6" fill="#8f8f8f"/>
<rect x="125.3" y="601" width="1.5" height="6" fill="#8f8f8f"/>
<rect x="166.8" y="601" width="1.5" height="6" fill="#8f8f8f"/>
<rect x="208.3" y="601" width="1.5" height="6" fill="#8f8f8f"/>
<rect x="249.8" y="601" width="1.5" height="6" fill="#8f8f8f"/>
<rect x="291.3" y="601" width="1.5" height="6" fill="#8f8f8f"/>
<rect x="332.8" y="601" width="1.5" height="6" fill="#8f8f8f"/>
<text x="43.0" y="622.9" font-size="13.5" text-anchor="middle" fill="#d8d8d8">0</text>
<text x="84.5" y="622.9" font-size="13.5" text-anchor="middle" fill="#d8d8d8">2</text>
<text x="126.0" y="622.9" font-size="13.5" text-anchor="middle" fill="#d8d8d8">4</text>
<text x="167.5" y="622.9" font-size="13.5" text-anchor="middle" fill="#d8d8d8">6</text>
<text x="209.0" y="622.9" font-size="13.5" text-anchor="middle" fill="#d8d8d8">8</text>
<text x="250.5" y="622.9" font-size="13.5" text-anchor="middle" fill="#d8d8d8">10</text>
<text x="292.0" y="622.9" font-size="13.5" text-anchor="middle" fill="#d8d8d8">12</text>
<text x="333.5" y="622.9" font-size="13.5" text-anchor="middle" fill="#d8d8d8">14</text>
<text x="41.5" y="252.7" font-size="14.5" text-anchor="end" fill="#d8d8d8">100%</text>
<text x="41.5" y="316.7" font-size="14.5" text-anchor="end" fill="#d8d8d8">80%</text>
<text x="41.5" y="381.2" font-size="14.5" text-anchor="end" fill="#d8d8d8">60%</text>
<text x="41.5" y="445.2" font-size="14.5" text-anchor="end" fill="#d8d8d8">40%</text>
<text x="41.5" y="510.2" font-size="14.5" text-anchor="end" fill="#d8d8d8">20%</text>
<text x="41.5" y="577.2" font-size="14.5" text-anchor="end" fill="#d8d8d8">100</text>
<rect x="43" y="221.4" width="35.7" height="6.2" fill="#000"/>
<rect x="44" y="222.4" width="33.2" height="4.2" fill="url(#de1)"/>
<rect x="43" y="228.3" width="24.5" height="6.2" fill="#000"/>
<rect x="44" y="229.3" width="22.0" height="4.2" fill="url(#de2)"/>
<rect x="43" y="235.2" width="31.7" height="6.2" fill="#000"/>
<rect x="44" y="236.2" width="29.2" height="4.2" fill="url(#de3)"/>
<rect x="43" y="242.1" width="43.6" height="6.2" fill="#000"/>
<rect x="44" y="243.1" width="41.1" height="4.2" fill="url(#de4)"/>
<rect x="43" y="249.0" width="28.8" height="6.2" fill="#000"/>
<rect x="44" y="250.0" width="26.3" height="4.2" fill="url(#de5)"/>
<rect x="43" y="255.9" width="23.7" height="6.2" fill="#000"/>
<rect x="44" y="256.9" width="21.2" height="4.2" fill="url(#de6)"/>
<rect x="43" y="285.7" width="27.2" height="6.2" fill="#000"/>
<rect x="44" y="286.7" width="24.7" height="4.2" fill="url(#de7)"/>
<rect x="43" y="292.6" width="24.5" height="6.2" fill="#000"/>
<rect x="44" y="293.6" width="22.0" height="4.2" fill="url(#de8)"/>
<rect x="43" y="299.5" width="27.2" height="6.2" fill="#000"/>
<rect x="44" y="300.5" width="24.7" height="4.2" fill="url(#de9)"/>
<rect x="43" y="306.4" width="46.1" height="6.2" fill="#000"/>
<rect x="44" y="307.4" width="43.6" height="4.2" fill="url(#de10)"/>
<rect x="43" y="313.3" width="32.2" height="6.2" fill="#000"/>
<rect x="44" y="314.3" width="29.7" height="4.2" fill="url(#de11)"/>
<rect x="43" y="320.2" width="21.0" height="6.2" fill="#000"/>
<rect x="44" y="321.2" width="18.5" height="4.2" fill="url(#de12)"/>
<rect x="43" y="350.0" width="24.5" height="6.2" fill="#000"/>
<rect x="44" y="351.0" width="22.0" height="4.2" fill="url(#de13)"/>
<rect x="43" y="356.9" width="24.5" height="6.2" fill="#000"/>
<rect x="44" y="357.9" width="22.0" height="4.2" fill="url(#de14)"/>
<rect x="43" y="363.8" width="31.7" height="6.2" fill="#000"/>
<rect x="44" y="364.8" width="29.2" height="4.2" fill="url(#de15)"/>
<rect x="43" y="370.7" width="47.1" height="6.2" fill="#000"/>
<rect x="44" y="371.7" width="44.6" height="4.2" fill="url(#de16)"/>
<rect x="43" y="377.6" width="34.4" height="6.2" fill="#000"/>
<rect x="44" y="378.6" width="31.9" height="4.2" fill="url(#de17)"/>
<rect x="43" y="384.5" width="21.0" height="6.2" fill="#000"/>
<rect x="44" y="385.5" width="18.5" height="4.2" fill="url(#de18)"/>
<rect x="43" y="414.3" width="31.7" height="6.2" fill="#000"/>
<rect x="44" y="415.3" width="29.2" height="4.2" fill="url(#de19)"/>
<rect x="43" y="421.2" width="28.2" height="6.2" fill="#000"/>
<rect x="44" y="422.2" width="25.7" height="4.2" fill="url(#de20)"/>
<rect x="43" y="428.1" width="35.7" height="6.2" fill="#000"/>
<rect x="44" y="429.1" width="33.2" height="4.2" fill="url(#de21)"/>
<rect x="43" y="435.0" width="50.4" height="6.2" fill="#000"/>
<rect x="44" y="436.0" width="47.9" height="4.2" fill="url(#de22)"/>
<rect x="43" y="441.9" width="39.4" height="6.2" fill="#000"/>
<rect x="44" y="442.9" width="36.9" height="4.2" fill="url(#de23)"/>
<rect x="43" y="448.8" width="24.5" height="6.2" fill="#000"/>
<rect x="44" y="449.8" width="22.0" height="4.2" fill="url(#de24)"/>
<rect x="43" y="478.5" width="42.1" height="6.2" fill="#000"/>
<rect x="44" y="479.5" width="39.6" height="4.2" fill="url(#de25)"/>
<rect x="43" y="485.4" width="33.8" height="6.2" fill="#000"/>
<rect x="44" y="486.4" width="31.3" height="4.2" fill="url(#de26)"/>
<rect x="43" y="492.3" width="46.1" height="6.2" fill="#000"/>
<rect x="44" y="493.3" width="43.6" height="4.2" fill="url(#de27)"/>
<rect x="43" y="499.2" width="56.6" height="6.2" fill="#000"/>
<rect x="44" y="500.2" width="54.1" height="4.2" fill="url(#de28)"/>
<rect x="43" y="506.1" width="47.1" height="6.2" fill="#000"/>
<rect x="44" y="507.1" width="44.6" height="4.2" fill="url(#de29)"/>
<rect x="43" y="513.0" width="36.1" height="6.2" fill="#000"/>
<rect x="44" y="514.0" width="33.6" height="4.2" fill="url(#de30)"/>
<rect x="43" y="583.6" width="47.1" height="6.2" fill="#000"/>
<rect x="44" y="584.6" width="44.6" height="4.2" fill="url(#dew)"/>
<text x="466.2" y="156.3" font-size="14" text-anchor="middle" fill="#d8d8d8">Delta L</text>
<rect x="407.5" y="161" width="145.3" height="282" fill="#242424"/>
<rect x="407.5" y="208.0" width="145.3" height="1.3" fill="#8f8f8f"/>
<rect x="407.5" y="254.9" width="145.3" height="1.3" fill="#8f8f8f"/>
<rect x="407.5" y="301.8" width="145.3" height="1.3" fill="#8f8f8f"/>
<rect x="407.5" y="348.7" width="145.3" height="1.3" fill="#8f8f8f"/>
<rect x="407.5" y="395.6" width="145.3" height="1.3" fill="#8f8f8f"/>
<rect x="402.0" y="208.0" width="5.5" height="1.3" fill="#c8c8c8"/>
<rect x="402.0" y="254.9" width="5.5" height="1.3" fill="#c8c8c8"/>
<rect x="402.0" y="301.8" width="5.5" height="1.3" fill="#c8c8c8"/>
<rect x="402.0" y="348.7" width="5.5" height="1.3" fill="#c8c8c8"/>
<rect x="402.0" y="395.6" width="5.5" height="1.3" fill="#c8c8c8"/>
<rect x="402.0" y="442.5" width="5.5" height="1.3" fill="#c8c8c8"/>
<rect x="402.0" y="160.8" width="5.5" height="1.9" fill="#e4e4e4"/>
<rect x="407.5" y="160.2" width="145.3" height="1.2" fill="#8f8f8f"/>
<rect x="407.5" y="162.7" width="145.3" height="1.2" fill="#8f8f8f"/>
<rect x="406.8" y="442.4" width="146.7" height="1.4" fill="#8f8f8f"/>
<rect x="406.8" y="160.2" width="1.4" height="289" fill="#8f8f8f"/>
<rect x="552.1" y="160.2" width="1.4" height="289" fill="#8f8f8f"/>
<text x="401.0" y="167.1" font-size="14" text-anchor="end" fill="#d8d8d8">15</text>
<text x="401.0" y="214.2" font-size="14" text-anchor="end" fill="#d8d8d8">10</text>
<text x="401.0" y="261.3" font-size="14" text-anchor="end" fill="#d8d8d8">5</text>
<text x="401.0" y="308.4" font-size="14" text-anchor="end" fill="#d8d8d8">0</text>
<text x="401.0" y="355.5" font-size="14" text-anchor="end" fill="#d8d8d8">-5</text>
<text x="401.0" y="402.6" font-size="14" text-anchor="end" fill="#d8d8d8">-10</text>
<text x="401.0" y="449.7" font-size="14" text-anchor="end" fill="#d8d8d8">-15</text>
<text x="480.1" y="460.0" font-size="14" text-anchor="middle" fill="#d8d8d8">100%</text>
<rect x="422.0" y="288.1" width="116.3" height="15.3" fill="#000"/>
<rect x="423.5" y="289.6" width="113.3" height="12.3" fill="url(#ybar)"/>
<text x="663.7" y="156.3" font-size="14" text-anchor="middle" fill="#d8d8d8">Delta C</text>
<rect x="605.1" y="161" width="145.3" height="282" fill="#242424"/>
<rect x="605.1" y="208.0" width="145.3" height="1.3" fill="#8f8f8f"/>
<rect x="605.1" y="254.9" width="145.3" height="1.3" fill="#8f8f8f"/>
<rect x="605.1" y="301.8" width="145.3" height="1.3" fill="#8f8f8f"/>
<rect x="605.1" y="348.7" width="145.3" height="1.3" fill="#8f8f8f"/>
<rect x="605.1" y="395.6" width="145.3" height="1.3" fill="#8f8f8f"/>
<rect x="599.6" y="208.0" width="5.5" height="1.3" fill="#c8c8c8"/>
<rect x="599.6" y="254.9" width="5.5" height="1.3" fill="#c8c8c8"/>
<rect x="599.6" y="301.8" width="5.5" height="1.3" fill="#c8c8c8"/>
<rect x="599.6" y="348.7" width="5.5" height="1.3" fill="#c8c8c8"/>
<rect x="599.6" y="395.6" width="5.5" height="1.3" fill="#c8c8c8"/>
<rect x="599.6" y="442.5" width="5.5" height="1.3" fill="#c8c8c8"/>
<rect x="599.6" y="160.8" width="5.5" height="1.9" fill="#e4e4e4"/>
<rect x="605.1" y="160.2" width="145.3" height="1.2" fill="#8f8f8f"/>
<rect x="605.1" y="162.7" width="145.3" height="1.2" fill="#8f8f8f"/>
<rect x="604.4" y="442.4" width="146.7" height="1.4" fill="#8f8f8f"/>
<rect x="604.4" y="160.2" width="1.4" height="289" fill="#8f8f8f"/>
<rect x="749.7" y="160.2" width="1.4" height="289" fill="#8f8f8f"/>
<text x="598.6" y="167.1" font-size="14" text-anchor="end" fill="#d8d8d8">15</text>
<text x="598.6" y="214.2" font-size="14" text-anchor="end" fill="#d8d8d8">10</text>
<text x="598.6" y="261.3" font-size="14" text-anchor="end" fill="#d8d8d8">5</text>
<text x="598.6" y="308.4" font-size="14" text-anchor="end" fill="#d8d8d8">0</text>
<text x="598.6" y="355.5" font-size="14" text-anchor="end" fill="#d8d8d8">-5</text>
<text x="598.6" y="402.6" font-size="14" text-anchor="end" fill="#d8d8d8">-10</text>
<text x="598.6" y="449.7" font-size="14" text-anchor="end" fill="#d8d8d8">-15</text>
<text x="677.7" y="460.0" font-size="14" text-anchor="middle" fill="#d8d8d8">100%</text>
<rect x="619.6" y="294.4" width="116.3" height="9.0" fill="#000"/>
<rect x="621.1" y="295.9" width="113.3" height="6.0" fill="url(#ybar)"/>
<text x="861.0" y="156.3" font-size="14" text-anchor="middle" fill="#d8d8d8">Delta H</text>
<rect x="802.7" y="161" width="145.3" height="282" fill="#242424"/>
<rect x="802.7" y="208.0" width="145.3" height="1.3" fill="#8f8f8f"/>
<rect x="802.7" y="254.9" width="145.3" height="1.3" fill="#8f8f8f"/>
<rect x="802.7" y="301.8" width="145.3" height="1.3" fill="#8f8f8f"/>
<rect x="802.7" y="348.7" width="145.3" height="1.3" fill="#8f8f8f"/>
<rect x="802.7" y="395.6" width="145.3" height="1.3" fill="#8f8f8f"/>
<rect x="797.2" y="208.0" width="5.5" height="1.3" fill="#c8c8c8"/>
<rect x="797.2" y="254.9" width="5.5" height="1.3" fill="#c8c8c8"/>
<rect x="797.2" y="301.8" width="5.5" height="1.3" fill="#c8c8c8"/>
<rect x="797.2" y="348.7" width="5.5" height="1.3" fill="#c8c8c8"/>
<rect x="797.2" y="395.6" width="5.5" height="1.3" fill="#c8c8c8"/>
<rect x="797.2" y="442.5" width="5.5" height="1.3" fill="#c8c8c8"/>
<rect x="797.2" y="160.8" width="5.5" height="1.9" fill="#e4e4e4"/>
<rect x="802.7" y="160.2" width="145.3" height="1.2" fill="#8f8f8f"/>
<rect x="802.7" y="162.7" width="145.3" height="1.2" fill="#8f8f8f"/>
<rect x="802.0" y="442.4" width="146.7" height="1.4" fill="#8f8f8f"/>
<rect x="802.0" y="160.2" width="1.4" height="289" fill="#8f8f8f"/>
<rect x="947.3" y="160.2" width="1.4" height="289" fill="#8f8f8f"/>
<text x="796.2" y="167.1" font-size="14" text-anchor="end" fill="#d8d8d8">15</text>
<text x="796.2" y="214.2" font-size="14" text-anchor="end" fill="#d8d8d8">10</text>
<text x="796.2" y="261.3" font-size="14" text-anchor="end" fill="#d8d8d8">5</text>
<text x="796.2" y="308.4" font-size="14" text-anchor="end" fill="#d8d8d8">0</text>
<text x="796.2" y="355.5" font-size="14" text-anchor="end" fill="#d8d8d8">-5</text>
<text x="796.2" y="402.6" font-size="14" text-anchor="end" fill="#d8d8d8">-10</text>
<text x="796.2" y="449.7" font-size="14" text-anchor="end" fill="#d8d8d8">-15</text>
<text x="875.3" y="460.0" font-size="14" text-anchor="middle" fill="#d8d8d8">100%</text>
<rect x="817.2" y="301.2" width="116.3" height="9.7" fill="#000"/>
<rect x="818.7" y="302.7" width="113.3" height="6.7" fill="url(#ybar)"/>
<rect x="375" y="469.5" width="591.5" height="163" fill="#000"/>
<rect x="395.2" y="477" width="99.8" height="131.7" fill="#fff"/>
<rect x="396.4" y="478.2" width="97.4" height="129.3" fill="#c6c5a8"/>
<rect x="396.4" y="543" width="97.4" height="64.5" fill="#c2c2a3"/>
<text x="445.2" y="623.6" font-size="12" text-anchor="middle" font-weight="bold" fill="#f4f4f4">20%</text>
<rect x="511.0" y="477" width="99.8" height="131.7" fill="#fff"/>
<rect x="512.2" y="478.2" width="97.4" height="129.3" fill="#c6c68c"/>
<rect x="512.2" y="543" width="97.4" height="64.5" fill="#c2c284"/>
<text x="561.0" y="623.6" font-size="12" text-anchor="middle" font-weight="bold" fill="#f4f4f4">40%</text>
<rect x="626.8" y="477" width="99.8" height="131.7" fill="#fff"/>
<rect x="628.0" y="478.2" width="97.4" height="129.3" fill="#c6c571"/>
<rect x="628.0" y="543" width="97.4" height="64.5" fill="#c2c069"/>
<text x="676.8" y="623.6" font-size="12" text-anchor="middle" font-weight="bold" fill="#f4f4f4">60%</text>
<rect x="742.6" y="477" width="99.8" height="131.7" fill="#fff"/>
<rect x="743.8" y="478.2" width="97.4" height="129.3" fill="#c6c454"/>
<rect x="743.8" y="543" width="97.4" height="64.5" fill="#c2c04c"/>
<text x="792.6" y="623.6" font-size="12" text-anchor="middle" font-weight="bold" fill="#f4f4f4">80%</text>
<rect x="858.4" y="477" width="99.8" height="131.7" fill="#fff"/>
<rect x="859.6" y="478.2" width="97.4" height="129.3" fill="#c6c400"/>
<rect x="859.6" y="543" width="97.4" height="64.5" fill="#c2c000"/>
<text x="908.4" y="623.6" font-size="12" text-anchor="middle" font-weight="bold" fill="#f4f4f4">100%</text>
<text transform="translate(387.5,506) rotate(-90)" font-size="12" font-weight="bold" text-anchor="middle" fill="#f0f0f0">Actual</text>
<text transform="translate(387.5,580) rotate(-90)" font-size="12" font-weight="bold" text-anchor="middle" fill="#f0f0f0">Target</text>
<rect x="973" y="88" width="695" height="558" fill="#1b1b1b"/>
<rect x="980" y="95" width="681" height="544.6" fill="#333333"/>
<text x="1320.0" y="113.0" font-size="14" text-anchor="middle" fill="#d8d8d8" textLength="83.5" lengthAdjust="spacingAndGlyphs">CIE 1976 u'v'</text>
<rect x="1017.8" y="118.6" width="639.6" height="491.7" fill="#242424"/>
<g clip-path="url(#plotclip)"><g clip-path="url(#locus)"><polygon points="1475.1,201.0 2120.1,831.4 2764.8,-284.1 1551.7,-718.0 1467.4,180.1" fill="#9e0000"/><polygon points="1180.7,153.2 1264.9,-744.9 165.2,-774.0 267.3,321.4 1157.7,177.7" fill="#009e00"/><polygon points="1201.8,450.6 311.3,594.4 796.7,1767.5 1869.2,1088.2 1224.1,457.7" fill="#00009e"/><polygon points="1497.3,182.9 1150.8,150.4 1235.1,-747.7 1581.5,-715.2" fill="url(#es0)"/><polygon points="1152.9,148.1 1206.6,480.2 316.1,624.0 262.5,291.8" fill="url(#es1)"/><polygon points="1203.2,479.2 1496.0,179.5 2141.1,809.9 1848.2,1109.6" fill="url(#es2)"/><g style="isolation:isolate"><g shape-rendering="crispEdges"><polygon points="1228.42,225.73 1260.70,220.35 1254.40,219.76" fill="#ff0000"/><polygon points="1228.42,225.73 1254.40,219.76 1248.10,219.16" fill="#ff0000"/><polygon points="1228.42,225.73 1248.10,219.16 1241.80,218.57" fill="#ff0000"/><polygon points="1228.42,225.73 1241.80,218.57 1235.50,217.98" fill="#ff0000"/><polygon points="1228.42,225.73 1235.50,217.98 1229.20,217.39" fill="#ff0000"/><polygon points="1228.42,225.73 1229.20,217.39 1227.19,217.20" fill="url(#m11)"/><polygon points="1228.42,225.73 1227.19,217.20 1225.17,217.01" fill="url(#m13)"/><polygon points="1228.42,225.73 1225.17,217.01 1223.16,216.82" fill="url(#m15)"/><polygon points="1228.42,225.73 1223.16,216.82 1221.14,216.63" fill="url(#m17)"/><polygon points="1228.42,225.73 1221.14,216.63 1219.13,216.45" fill="url(#m19)"/><polygon points="1260.70,220.35 1303.75,213.17 1289.05,211.79" fill="#ff0000"/><polygon points="1260.70,220.35 1289.05,211.79 1254.40,219.76" fill="#ff0000"/><polygon points="1254.40,219.76 1289.05,211.79 1274.35,210.42" fill="#ff0000"/><polygon points="1254.40,219.76 1274.35,210.42 1248.10,219.16" fill="#ff0000"/><polygon points="1248.10,219.16 1274.35,210.42 1259.65,209.04" fill="#ff0000"/><polygon points="1248.10,219.16 1259.65,209.04 1241.80,218.57" fill="#ff0000"/><polygon points="1241.80,218.57 1259.65,209.04 1244.95,207.66" fill="#ff0000"/><polygon points="1241.80,218.57 1244.95,207.66 1235.50,217.98" fill="#ff0000"/><polygon points="1235.50,217.98 1244.95,207.66 1230.25,206.28" fill="#ff0000"/><polygon points="1235.50,217.98 1230.25,206.28 1229.20,217.39" fill="#ff0000"/><polygon points="1229.20,217.39 1230.25,206.28 1225.55,205.84" fill="url(#m41)"/><polygon points="1229.20,217.39 1225.55,205.84 1227.19,217.20" fill="url(#m43)"/><polygon points="1227.19,217.20 1225.55,205.84 1220.84,205.39" fill="url(#m45)"/><polygon points="1227.19,217.20 1220.84,205.39 1225.17,217.01" fill="url(#m47)"/><polygon points="1225.17,217.01 1220.84,205.39 1216.14,204.95" fill="url(#m49)"/><polygon points="1225.17,217.01 1216.14,204.95 1223.16,216.82" fill="url(#m51)"/><polygon points="1223.16,216.82 1216.14,204.95 1211.44,204.51" fill="url(#m53)"/><polygon points="1223.16,216.82 1211.44,204.51 1221.14,216.63" fill="url(#m55)"/><polygon points="1221.14,216.63 1211.44,204.51 1206.74,204.07" fill="url(#m57)"/><polygon points="1221.14,216.63 1206.74,204.07 1219.13,216.45" fill="url(#m59)"/><polygon points="1303.75,213.17 1352.18,205.11 1328.03,202.84" fill="#ff0000"/><polygon points="1303.75,213.17 1328.03,202.84 1289.05,211.79" fill="#ff0000"/><polygon points="1289.05,211.79 1328.03,202.84 1303.88,200.57" fill="#ff0000"/><polygon points="1289.05,211.79 1303.88,200.57 1274.35,210.42" fill="#ff0000"/><polygon points="1274.35,210.42 1303.88,200.57 1279.73,198.31" fill="#ff0000"/><polygon points="1274.35,210.42 1279.73,198.31 1259.65,209.04" fill="#ff0000"/><polygon points="1259.65,209.04 1279.73,198.31 1255.58,196.04" fill="#ff0000"/><polygon points="1259.65,209.04 1255.58,196.04 1244.95,207.66" fill="#ff0000"/><polygon points="1244.95,207.66 1255.58,196.04 1231.43,193.78" fill="#ff0000"/><polygon points="1244.95,207.66 1231.43,193.78 1230.25,206.28" fill="#ff0000"/><polygon points="1230.25,206.28 1231.43,193.78 1223.70,193.05" fill="url(#m81)"/><polygon points="1230.25,206.28 1223.70,193.05 1225.55,205.84" fill="url(#m83)"/><polygon points="1225.55,205.84 1223.70,193.05 1215.97,192.33" fill="url(#m85)"/><polygon points="1225.55,205.84 1215.97,192.33 1220.84,205.39" fill="url(#m87)"/><polygon points="1220.84,205.39 1215.97,192.33 1208.25,191.60" fill="url(#m89)"/><polygon points="1220.84,205.39 1208.25,191.60 1216.14,204.95" fill="url(#m91)"/><polygon points="1216.14,204.95 1208.25,191.60 1200.52,190.88" fill="url(#m93)"/><polygon points="1216.14,204.95 1200.52,190.88 1211.44,204.51" fill="url(#m95)"/><polygon points="1211.44,204.51 1200.52,190.88 1192.80,190.15" fill="url(#m97)"/><polygon points="1211.44,204.51 1192.80,190.15 1206.74,204.07" fill="url(#m99)"/><polygon points="1352.18,205.11 1400.60,197.04 1367.00,193.88" fill="#ff0000"/><polygon points="1352.18,205.11 1367.00,193.88 1328.03,202.84" fill="#ff0000"/><polygon points="1328.03,202.84 1367.00,193.88 1333.40,190.73" fill="#ff0000"/><polygon points="1328.03,202.84 1333.40,190.73 1303.88,200.57" fill="#ff0000"/><polygon points="1303.88,200.57 1333.40,190.73 1299.80,187.58" fill="#ff0000"/><polygon points="1303.88,200.57 1299.80,187.58 1279.73,198.31" fill="#ff0000"/><polygon points="1279.73,198.31 1299.80,187.58 1266.20,184.43" fill="#ff0000"/><polygon points="1279.73,198.31 1266.20,184.43 1255.58,196.04" fill="#ff0000"/><polygon points="1255.58,196.04 1266.20,184.43 1232.60,181.27" fill="#ff0000"/><polygon points="1255.58,196.04 1232.60,181.27 1231.43,193.78" fill="#ff0000"/><polygon points="1231.43,193.78 1232.60,181.27 1221.85,180.26" fill="url(#m121)"/><polygon points="1231.43,193.78 1221.85,180.26 1223.70,193.05" fill="url(#m123)"/><polygon points="1223.70,193.05 1221.85,180.26 1211.10,179.26" fill="url(#m125)"/><polygon points="1223.70,193.05 1211.10,179.26 1215.97,192.33" fill="url(#m127)"/><polygon points="1215.97,192.33 1211.10,179.26 1200.35,178.25" fill="url(#m129)"/><polygon points="1215.97,192.33 1200.35,178.25 1208.25,191.60" fill="url(#m131)"/><polygon points="1208.25,191.60 1200.35,178.25 1189.60,177.24" fill="url(#m133)"/><polygon points="1208.25,191.60 1189.60,177.24 1200.52,190.88" fill="url(#m135)"/><polygon points="1200.52,190.88 1189.60,177.24 1178.86,176.23" fill="url(#m137)"/><polygon points="1200.52,190.88 1178.86,176.23 1192.80,190.15" fill="url(#m139)"/><polygon points="1400.60,197.04 1449.03,188.97 1405.98,184.93" fill="#ff0000"/><polygon points="1400.60,197.04 1405.98,184.93 1367.00,193.88" fill="#ff0000"/><polygon points="1367.00,193.88 1405.98,184.93 1362.93,180.89" fill="#ff0000"/><polygon points="1367.00,193.88 1362.93,180.89 1333.40,190.73" fill="#ff0000"/><polygon points="1333.40,190.73 1362.93,180.89 1319.88,176.85" fill="#ff0000"/><polygon points="1333.40,190.73 1319.88,176.85 1299.80,187.58" fill="#ff0000"/><polygon points="1299.80,187.58 1319.88,176.85 1276.83,172.81" fill="#ff0000"/><polygon points="1299.80,187.58 1276.83,172.81 1266.20,184.43" fill="#ff0000"/><polygon points="1266.20,184.43 1276.83,172.81 1233.78,168.77" fill="#ff0000"/><polygon points="1266.20,184.43 1233.78,168.77 1232.60,181.27" fill="#ff0000"/><polygon points="1232.60,181.27 1233.78,168.77 1220.01,167.48" fill="url(#m161)"/><polygon points="1232.60,181.27 1220.01,167.48 1221.85,180.26" fill="url(#m163)"/><polygon points="1221.85,180.26 1220.01,167.48 1206.23,166.19" fill="url(#m165)"/><polygon points="1221.85,180.26 1206.23,166.19 1211.10,179.26" fill="url(#m167)"/><polygon points="1211.10,179.26 1206.23,166.19 1192.46,164.89" fill="url(#m169)"/><polygon points="1211.10,179.26 1192.46,164.89 1200.35,178.25" fill="url(#m171)"/><polygon points="1200.35,178.25 1192.46,164.89 1178.69,163.60" fill="url(#m173)"/><polygon points="1200.35,178.25 1178.69,163.60 1189.60,177.24" fill="url(#m175)"/><polygon points="1189.60,177.24 1178.69,163.60 1164.92,162.31" fill="url(#m177)"/><polygon points="1189.60,177.24 1164.92,162.31 1178.86,176.23" fill="url(#m179)"/><polygon points="1449.03,188.97 1497.45,180.90 1444.95,175.97" fill="#ff0000"/><polygon points="1449.03,188.97 1444.95,175.97 1405.98,184.93" fill="#ff0000"/><polygon points="1405.98,184.93 1444.95,175.97 1392.46,171.05" fill="#ff0000"/><polygon points="1405.98,184.93 1392.46,171.05 1362.93,180.89" fill="#ff0000"/><polygon points="1362.93,180.89 1392.46,171.05 1339.96,166.12" fill="#ff0000"/><polygon points="1362.93,180.89 1339.96,166.12 1319.88,176.85" fill="#ff0000"/><polygon points="1319.88,176.85 1339.96,166.12 1287.46,161.19" fill="#ff0000"/><polygon points="1319.88,176.85 1287.46,161.19 1276.83,172.81" fill="#ff0000"/><polygon points="1276.83,172.81 1287.46,161.19 1234.96,156.27" fill="#ff0000"/><polygon points="1276.83,172.81 1234.96,156.27 1233.78,168.77" fill="#ff0000"/><polygon points="1233.78,168.77 1234.96,156.27 1218.16,154.69" fill="url(#m200)"/><polygon points="1233.78,168.77 1218.16,154.69 1220.01,167.48" fill="url(#m202)"/><polygon points="1220.01,167.48 1218.16,154.69 1201.36,153.12" fill="url(#m204)"/><polygon points="1220.01,167.48 1201.36,153.12 1206.23,166.19" fill="url(#m206)"/><polygon points="1206.23,166.19 1201.36,153.12 1184.57,151.54" fill="url(#m208)"/><polygon points="1206.23,166.19 1184.57,151.54 1192.46,164.89" fill="url(#m210)"/><polygon points="1192.46,164.89 1184.57,151.54 1167.77,149.96" fill="url(#m212)"/><polygon points="1192.46,164.89 1167.77,149.96 1178.69,163.60" fill="url(#m214)"/><polygon points="1178.69,163.60 1167.77,149.96 1150.97,148.39" fill="url(#m216)"/><polygon points="1178.69,163.60 1150.97,148.39 1164.92,162.31" fill="url(#m218)"/><polygon points="1228.42,225.73 1219.13,216.45 1219.47,218.55" fill="url(#m220)"/><polygon points="1228.42,225.73 1219.47,218.55 1219.81,220.66" fill="url(#m222)"/><polygon points="1228.42,225.73 1219.81,220.66 1220.15,222.77" fill="url(#m224)"/><polygon points="1228.42,225.73 1220.15,222.77 1220.49,224.88" fill="url(#m226)"/><polygon points="1228.42,225.73 1220.49,224.88 1220.83,226.99" fill="url(#m228)"/><polygon points="1228.42,225.73 1220.83,226.99 1221.77,232.85" fill="url(#m230)"/><polygon points="1228.42,225.73 1221.77,232.85 1222.72,238.72" fill="url(#m232)"/><polygon points="1228.42,225.73 1222.72,238.72 1223.67,244.58" fill="url(#m234)"/><polygon points="1228.42,225.73 1223.67,244.58 1224.61,250.44" fill="url(#m236)"/><polygon points="1228.42,225.73 1224.61,250.44 1225.56,256.31" fill="url(#m238)"/><polygon points="1219.13,216.45 1206.74,204.07 1207.53,208.99" fill="url(#m240)"/><polygon points="1219.13,216.45 1207.53,208.99 1219.47,218.55" fill="url(#m242)"/><polygon points="1219.47,218.55 1207.53,208.99 1208.32,213.91" fill="url(#m244)"/><polygon points="1219.47,218.55 1208.32,213.91 1219.81,220.66" fill="url(#m246)"/><polygon points="1219.81,220.66 1208.32,213.91 1209.12,218.83" fill="url(#m248)"/><polygon points="1219.81,220.66 1209.12,218.83 1220.15,222.77" fill="url(#m250)"/><polygon points="1220.15,222.77 1209.12,218.83 1209.91,223.75" fill="url(#m252)"/><polygon points="1220.15,222.77 1209.91,223.75 1220.49,224.88" fill="url(#m254)"/><polygon points="1220.49,224.88 1209.91,223.75 1210.71,228.67" fill="url(#m256)"/><polygon points="1220.49,224.88 1210.71,228.67 1220.83,226.99" fill="url(#m258)"/><polygon points="1220.83,226.99 1210.71,228.67 1212.91,242.35" fill="url(#m260)"/><polygon points="1220.83,226.99 1212.91,242.35 1221.77,232.85" fill="url(#m262)"/><polygon points="1221.77,232.85 1212.91,242.35 1215.12,256.04" fill="url(#m264)"/><polygon points="1221.77,232.85 1215.12,256.04 1222.72,238.72" fill="url(#m266)"/><polygon points="1222.72,238.72 1215.12,256.04 1217.33,269.72" fill="url(#m268)"/><polygon points="1222.72,238.72 1217.33,269.72 1223.67,244.58" fill="url(#m270)"/><polygon points="1223.67,244.58 1217.33,269.72 1219.54,283.40" fill="url(#m272)"/><polygon points="1223.67,244.58 1219.54,283.40 1224.61,250.44" fill="url(#m274)"/><polygon points="1224.61,250.44 1219.54,283.40 1221.75,297.08" fill="url(#m276)"/><polygon points="1224.61,250.44 1221.75,297.08 1225.56,256.31" fill="url(#m278)"/><polygon points="1206.74,204.07 1192.80,190.15 1194.10,198.23" fill="url(#m280)"/><polygon points="1206.74,204.07 1194.10,198.23 1207.53,208.99" fill="url(#m282)"/><polygon points="1207.53,208.99 1194.10,198.23 1195.40,206.32" fill="url(#m284)"/><polygon points="1207.53,208.99 1195.40,206.32 1208.32,213.91" fill="url(#m286)"/><polygon points="1208.32,213.91 1195.40,206.32 1196.71,214.40" fill="url(#m288)"/><polygon points="1208.32,213.91 1196.71,214.40 1209.12,218.83" fill="url(#m290)"/><polygon points="1209.12,218.83 1196.71,214.40 1198.01,222.48" fill="url(#m292)"/><polygon points="1209.12,218.83 1198.01,222.48 1209.91,223.75" fill="url(#m294)"/><polygon points="1209.91,223.75 1198.01,222.48 1199.32,230.57" fill="url(#m296)"/><polygon points="1209.91,223.75 1199.32,230.57 1210.71,228.67" fill="url(#m298)"/><polygon points="1210.71,228.67 1199.32,230.57 1202.95,253.04" fill="url(#m300)"/><polygon points="1210.71,228.67 1202.95,253.04 1212.91,242.35" fill="url(#m302)"/><polygon points="1212.91,242.35 1202.95,253.04 1206.57,275.52" fill="url(#m304)"/><polygon points="1212.91,242.35 1206.57,275.52 1215.12,256.04" fill="url(#m306)"/><polygon points="1215.12,256.04 1206.57,275.52 1210.20,298.00" fill="url(#m308)"/><polygon points="1215.12,256.04 1210.20,298.00 1217.33,269.72" fill="url(#m310)"/><polygon points="1217.33,269.72 1210.20,298.00 1213.83,320.47" fill="url(#m312)"/><polygon points="1217.33,269.72 1213.83,320.47 1219.54,283.40" fill="url(#m314)"/><polygon points="1219.54,283.40 1213.83,320.47 1217.46,342.95" fill="url(#m316)"/><polygon points="1219.54,283.40 1217.46,342.95 1221.75,297.08" fill="url(#m318)"/><polygon points="1192.80,190.15 1178.86,176.23 1180.67,187.48" fill="url(#m320)"/><polygon points="1192.80,190.15 1180.67,187.48 1194.10,198.23" fill="url(#m322)"/><polygon points="1194.10,198.23 1180.67,187.48 1182.49,198.72" fill="url(#m324)"/><polygon points="1194.10,198.23 1182.49,198.72 1195.40,206.32" fill="url(#m326)"/><polygon points="1195.40,206.32 1182.49,198.72 1184.30,209.97" fill="url(#m328)"/><polygon points="1195.40,206.32 1184.30,209.97 1196.71,214.40" fill="url(#m330)"/><polygon points="1196.71,214.40 1184.30,209.97 1186.12,221.21" fill="url(#m332)"/><polygon points="1196.71,214.40 1186.12,221.21 1198.01,222.48" fill="url(#m334)"/><polygon points="1198.01,222.48 1186.12,221.21 1187.93,232.46" fill="url(#m336)"/><polygon points="1198.01,222.48 1187.93,232.46 1199.32,230.57" fill="url(#m338)"/><polygon points="1199.32,230.57 1187.93,232.46 1192.98,263.73" fill="url(#m340)"/><polygon points="1199.32,230.57 1192.98,263.73 1202.95,253.04" fill="url(#m342)"/><polygon points="1202.95,253.04 1192.98,263.73 1198.03,295.00" fill="url(#m344)"/><polygon points="1202.95,253.04 1198.03,295.00 1206.57,275.52" fill="url(#m346)"/><polygon points="1206.57,275.52 1198.03,295.00 1203.07,326.28" fill="url(#m348)"/><polygon points="1206.57,275.52 1203.07,326.28 1210.20,298.00" fill="url(#m350)"/><polygon points="1210.20,298.00 1203.07,326.28 1208.12,357.55" fill="url(#m352)"/><polygon points="1210.20,298.00 1208.12,357.55 1213.83,320.47" fill="url(#m354)"/><polygon points="1213.83,320.47 1208.12,357.55 1213.17,388.82" fill="url(#m356)"/><polygon points="1213.83,320.47 1213.17,388.82 1217.46,342.95" fill="url(#m358)"/><polygon points="1178.86,176.23 1164.92,162.31 1167.24,176.72" fill="url(#m360)"/><polygon points="1178.86,176.23 1167.24,176.72 1180.67,187.48" fill="url(#m362)"/><polygon points="1180.67,187.48 1167.24,176.72 1169.57,191.13" fill="url(#m364)"/><polygon points="1180.67,187.48 1169.57,191.13 1182.49,198.72" fill="url(#m366)"/><polygon points="1182.49,198.72 1169.57,191.13 1171.89,205.54" fill="url(#m368)"/><polygon points="1182.49,198.72 1171.89,205.54 1184.30,209.97" fill="url(#m370)"/><polygon points="1184.30,209.97 1171.89,205.54 1174.22,219.94" fill="url(#m372)"/><polygon points="1184.30,209.97 1174.22,219.94 1186.12,221.21" fill="url(#m374)"/><polygon points="1186.12,221.21 1174.22,219.94 1176.54,234.35" fill="url(#m376)"/><polygon points="1186.12,221.21 1176.54,234.35 1187.93,232.46" fill="url(#m378)"/><polygon points="1187.93,232.46 1176.54,234.35 1183.01,274.42" fill="url(#m380)"/><polygon points="1187.93,232.46 1183.01,274.42 1192.98,263.73" fill="url(#m382)"/><polygon points="1192.98,263.73 1183.01,274.42 1189.48,314.49" fill="url(#m384)"/><polygon points="1192.98,263.73 1189.48,314.49 1198.03,295.00" fill="url(#m386)"/><polygon points="1198.03,295.00 1189.48,314.49 1195.95,354.56" fill="url(#m388)"/><polygon points="1198.03,295.00 1195.95,354.56 1203.07,326.28" fill="url(#m390)"/><polygon points="1203.07,326.28 1195.95,354.56 1202.41,394.63" fill="url(#m392)"/><polygon points="1203.07,326.28 1202.41,394.63 1208.12,357.55" fill="url(#m394)"/><polygon points="1208.12,357.55 1202.41,394.63 1208.88,434.69" fill="url(#m396)"/><polygon points="1208.12,357.55 1208.88,434.69 1213.17,388.82" fill="url(#m398)"/><polygon points="1164.92,162.31 1150.97,148.39 1153.81,165.96" fill="url(#m400)"/><polygon points="1164.92,162.31 1153.81,165.96 1167.24,176.72" fill="url(#m402)"/><polygon points="1167.24,176.72 1153.81,165.96 1156.65,183.53" fill="url(#m404)"/><polygon points="1167.24,176.72 1156.65,183.53 1169.57,191.13" fill="url(#m406)"/><polygon points="1169.57,191.13 1156.65,183.53 1159.48,201.10" fill="url(#m408)"/><polygon points="1169.57,191.13 1159.48,201.10 1171.89,205.54" fill="url(#m410)"/><polygon points="1171.89,205.54 1159.48,201.10 1162.32,218.67" fill="url(#m412)"/><polygon points="1171.89,205.54 1162.32,218.67 1174.22,219.94" fill="url(#m414)"/><polygon points="1174.22,219.94 1162.32,218.67 1165.16,236.25" fill="url(#m416)"/><polygon points="1174.22,219.94 1165.16,236.25 1176.54,234.35" fill="url(#m418)"/><polygon points="1176.54,234.35 1165.16,236.25 1173.04,285.11" fill="url(#m420)"/><polygon points="1176.54,234.35 1173.04,285.11 1183.01,274.42" fill="url(#m422)"/><polygon points="1183.01,274.42 1173.04,285.11 1180.93,333.97" fill="url(#m424)"/><polygon points="1183.01,274.42 1180.93,333.97 1189.48,314.49" fill="url(#m426)"/><polygon points="1189.48,314.49 1180.93,333.97 1188.82,382.84" fill="url(#m428)"/><polygon points="1189.48,314.49 1188.82,382.84 1195.95,354.56" fill="url(#m430)"/><polygon points="1195.95,354.56 1188.82,382.84 1196.70,431.70" fill="url(#m432)"/><polygon points="1195.95,354.56 1196.70,431.70 1202.41,394.63" fill="url(#m434)"/><polygon points="1202.41,394.63 1196.70,431.70 1204.59,480.56" fill="url(#m436)"/><polygon points="1202.41,394.63 1204.59,480.56 1208.88,434.69" fill="url(#m438)"/><polygon points="1228.42,225.73 1225.56,256.31 1228.87,252.92" fill="url(#m440)"/><polygon points="1228.42,225.73 1228.87,252.92 1232.18,249.53" fill="url(#m442)"/><polygon points="1228.42,225.73 1232.18,249.53 1235.49,246.15" fill="url(#m444)"/><polygon points="1228.42,225.73 1235.49,246.15 1238.80,242.76" fill="url(#m446)"/><polygon points="1228.42,225.73 1238.80,242.76 1242.11,239.38" fill="url(#m448)"/><polygon points="1228.42,225.73 1242.11,239.38 1245.83,235.57" fill="#ff0000"/><polygon points="1228.42,225.73 1245.83,235.57 1249.55,231.76" fill="#ff0000"/><polygon points="1228.42,225.73 1249.55,231.76 1253.26,227.96" fill="#ff0000"/><polygon points="1228.42,225.73 1253.26,227.96 1256.98,224.15" fill="#ff0000"/><polygon points="1228.42,225.73 1256.98,224.15 1260.70,220.35" fill="#ff0000"/><polygon points="1225.56,256.31 1221.75,297.08 1229.47,289.18" fill="url(#m460)"/><polygon points="1225.56,256.31 1229.47,289.18 1228.87,252.92" fill="url(#m462)"/><polygon points="1228.87,252.92 1229.47,289.18 1237.19,281.28" fill="url(#m464)"/><polygon points="1228.87,252.92 1237.19,281.28 1232.18,249.53" fill="url(#m466)"/><polygon points="1232.18,249.53 1237.19,281.28 1244.91,273.38" fill="url(#m468)"/><polygon points="1232.18,249.53 1244.91,273.38 1235.49,246.15" fill="url(#m470)"/><polygon points="1235.49,246.15 1244.91,273.38 1252.63,265.48" fill="url(#m472)"/><polygon points="1235.49,246.15 1252.63,265.48 1238.80,242.76" fill="url(#m474)"/><polygon points="1238.80,242.76 1252.63,265.48 1260.36,257.58" fill="url(#m476)"/><polygon points="1238.80,242.76 1260.36,257.58 1242.11,239.38" fill="url(#m478)"/><polygon points="1242.11,239.38 1260.36,257.58 1269.03,248.70" fill="#ff0000"/><polygon points="1242.11,239.38 1269.03,248.70 1245.83,235.57" fill="#ff0000"/><polygon points="1245.83,235.57 1269.03,248.70 1277.71,239.82" fill="#ff0000"/><polygon points="1245.83,235.57 1277.71,239.82 1249.55,231.76" fill="#ff0000"/><polygon points="1249.55,231.76 1277.71,239.82 1286.39,230.93" fill="#ff0000"/><polygon points="1249.55,231.76 1286.39,230.93 1253.26,227.96" fill="#ff0000"/><polygon points="1253.26,227.96 1286.39,230.93 1295.07,222.05" fill="#ff0000"/><polygon points="1253.26,227.96 1295.07,222.05 1256.98,224.15" fill="#ff0000"/><polygon points="1256.98,224.15 1295.07,222.05 1303.75,213.17" fill="#ff0000"/><polygon points="1256.98,224.15 1303.75,213.17 1260.70,220.35" fill="#ff0000"/><polygon points="1221.75,297.08 1217.46,342.95 1230.14,329.97" fill="url(#m500)"/><polygon points="1221.75,297.08 1230.14,329.97 1229.47,289.18" fill="url(#m502)"/><polygon points="1229.47,289.18 1230.14,329.97 1242.83,316.99" fill="url(#m504)"/><polygon points="1229.47,289.18 1242.83,316.99 1237.19,281.28" fill="url(#m506)"/><polygon points="1237.19,281.28 1242.83,316.99 1255.52,304.01" fill="url(#m508)"/><polygon points="1237.19,281.28 1255.52,304.01 1244.91,273.38" fill="url(#m510)"/><polygon points="1244.91,273.38 1255.52,304.01 1268.20,291.03" fill="url(#m512)"/><polygon points="1244.91,273.38 1268.20,291.03 1252.63,265.48" fill="url(#m514)"/><polygon points="1252.63,265.48 1268.20,291.03 1280.89,278.05" fill="url(#m516)"/><polygon points="1252.63,265.48 1280.89,278.05 1260.36,257.58" fill="url(#m518)"/><polygon points="1260.36,257.58 1280.89,278.05 1295.14,263.46" fill="#ff0000"/><polygon points="1260.36,257.58 1295.14,263.46 1269.03,248.70" fill="#ff0000"/><polygon points="1269.03,248.70 1295.14,263.46 1309.40,248.87" fill="#ff0000"/><polygon points="1269.03,248.70 1309.40,248.87 1277.71,239.82" fill="#ff0000"/><polygon points="1277.71,239.82 1309.40,248.87 1323.66,234.28" fill="#ff0000"/><polygon points="1277.71,239.82 1323.66,234.28 1286.39,230.93" fill="#ff0000"/><polygon points="1286.39,230.93 1323.66,234.28 1337.92,219.69" fill="#ff0000"/><polygon points="1286.39,230.93 1337.92,219.69 1295.07,222.05" fill="#ff0000"/><polygon points="1295.07,222.05 1337.92,219.69 1352.18,205.11" fill="#ff0000"/><polygon points="1295.07,222.05 1352.18,205.11 1303.75,213.17" fill="#ff0000"/><polygon points="1217.46,342.95 1213.17,388.82 1230.82,370.76" fill="url(#m540)"/><polygon points="1217.46,342.95 1230.82,370.76 1230.14,329.97" fill="url(#m542)"/><polygon points="1230.14,329.97 1230.82,370.76 1248.47,352.70" fill="url(#m544)"/><polygon points="1230.14,329.97 1248.47,352.70 1242.83,316.99" fill="url(#m546)"/><polygon points="1242.83,316.99 1248.47,352.70 1266.12,334.64" fill="url(#m548)"/><polygon points="1242.83,316.99 1266.12,334.64 1255.52,304.01" fill="url(#m550)"/><polygon points="1255.52,304.01 1266.12,334.64 1283.77,316.58" fill="url(#m552)"/><polygon points="1255.52,304.01 1283.77,316.58 1268.20,291.03" fill="url(#m554)"/><polygon points="1268.20,291.03 1283.77,316.58 1301.42,298.53" fill="url(#m556)"/><polygon points="1268.20,291.03 1301.42,298.53 1280.89,278.05" fill="url(#m558)"/><polygon points="1280.89,278.05 1301.42,298.53 1321.25,278.23" fill="#ff0000"/><polygon points="1280.89,278.05 1321.25,278.23 1295.14,263.46" fill="#ff0000"/><polygon points="1295.14,263.46 1321.25,278.23 1341.09,257.93" fill="#ff0000"/><polygon points="1295.14,263.46 1341.09,257.93 1309.40,248.87" fill="#ff0000"/><polygon points="1309.40,248.87 1341.09,257.93 1360.93,237.63" fill="#ff0000"/><polygon points="1309.40,248.87 1360.93,237.63 1323.66,234.28" fill="#ff0000"/><polygon points="1323.66,234.28 1360.93,237.63 1380.76,217.33" fill="#ff0000"/><polygon points="1323.66,234.28 1380.76,217.33 1337.92,219.69" fill="#ff0000"/><polygon points="1337.92,219.69 1380.76,217.33 1400.60,197.04" fill="#ff0000"/><polygon points="1337.92,219.69 1400.60,197.04 1352.18,205.11" fill="#ff0000"/><polygon points="1213.17,388.82 1208.88,434.69 1231.49,411.55" fill="url(#m580)"/><polygon points="1213.17,388.82 1231.49,411.55 1230.82,370.76" fill="url(#m582)"/><polygon points="1230.82,370.76 1231.49,411.55 1254.11,388.42" fill="url(#m584)"/><polygon points="1230.82,370.76 1254.11,388.42 1248.47,352.70" fill="url(#m586)"/><polygon points="1248.47,352.70 1254.11,388.42 1276.72,365.28" fill="url(#m588)"/><polygon points="1248.47,352.70 1276.72,365.28 1266.12,334.64" fill="url(#m590)"/><polygon points="1266.12,334.64 1276.72,365.28 1299.33,342.14" fill="url(#m592)"/><polygon points="1266.12,334.64 1299.33,342.14 1283.77,316.58" fill="url(#m594)"/><polygon points="1283.77,316.58 1299.33,342.14 1321.95,319.00" fill="url(#m596)"/><polygon points="1283.77,316.58 1321.95,319.00 1301.42,298.53" fill="url(#m598)"/><polygon points="1301.42,298.53 1321.95,319.00 1347.36,292.99" fill="#ff0000"/><polygon points="1301.42,298.53 1347.36,292.99 1321.25,278.23" fill="#ff0000"/><polygon points="1321.25,278.23 1347.36,292.99 1372.78,266.99" fill="#ff0000"/><polygon points="1321.25,278.23 1372.78,266.99 1341.09,257.93" fill="#ff0000"/><polygon points="1341.09,257.93 1372.78,266.99 1398.20,240.98" fill="#ff0000"/><polygon points="1341.09,257.93 1398.20,240.98 1360.93,237.63" fill="#ff0000"/><polygon points="1360.93,237.63 1398.20,240.98 1423.61,214.97" fill="#ff0000"/><polygon points="1360.93,237.63 1423.61,214.97 1380.76,217.33" fill="#ff0000"/><polygon points="1380.76,217.33 1423.61,214.97 1449.03,188.97" fill="#ff0000"/><polygon points="1380.76,217.33 1449.03,188.97 1400.60,197.04" fill="#ff0000"/><polygon points="1208.88,434.69 1204.59,480.56 1232.17,452.35" fill="url(#m620)"/><polygon points="1208.88,434.69 1232.17,452.35 1231.49,411.55" fill="url(#m622)"/><polygon points="1231.49,411.55 1232.17,452.35 1259.75,424.13" fill="url(#m624)"/><polygon points="1231.49,411.55 1259.75,424.13 1254.11,388.42" fill="url(#m626)"/><polygon points="1254.11,388.42 1259.75,424.13 1287.32,395.91" fill="url(#m628)"/><polygon points="1254.11,388.42 1287.32,395.91 1276.72,365.28" fill="url(#m630)"/><polygon points="1276.72,365.28 1287.32,395.91 1314.90,367.69" fill="url(#m632)"/><polygon points="1276.72,365.28 1314.90,367.69 1299.33,342.14" fill="url(#m634)"/><polygon points="1299.33,342.14 1314.90,367.69 1342.48,339.48" fill="url(#m636)"/><polygon points="1299.33,342.14 1342.48,339.48 1321.95,319.00" fill="url(#m638)"/><polygon points="1321.95,319.00 1342.48,339.48 1373.47,307.76" fill="#ff0000"/><polygon points="1321.95,319.00 1373.47,307.76 1347.36,292.99" fill="#ff0000"/><polygon points="1347.36,292.99 1373.47,307.76 1404.47,276.04" fill="#ff0000"/><polygon points="1347.36,292.99 1404.47,276.04 1372.78,266.99" fill="#ff0000"/><polygon points="1372.78,266.99 1404.47,276.04 1435.46,244.33" fill="#ff0000"/><polygon points="1372.78,266.99 1435.46,244.33 1398.20,240.98" fill="#ff0000"/><polygon points="1398.20,240.98 1435.46,244.33 1466.46,212.61" fill="#ff0000"/><polygon points="1398.20,240.98 1466.46,212.61 1423.61,214.97" fill="#ff0000"/><polygon points="1423.61,214.97 1466.46,212.61 1497.45,180.90" fill="#ff0000"/><polygon points="1423.61,214.97 1497.45,180.90 1449.03,188.97" fill="#ff0000"/></g><g shape-rendering="crispEdges" style="mix-blend-mode:screen"><polygon points="1228.42,225.73 1260.70,220.35 1254.40,219.76" fill="url(#m1)"/><polygon points="1228.42,225.73 1254.40,219.76 1248.10,219.16" fill="url(#m3)"/><polygon points="1228.42,225.73 1248.10,219.16 1241.80,218.57" fill="url(#m5)"/><polygon points="1228.42,225.73 1241.80,218.57 1235.50,217.98" fill="url(#m7)"/><polygon points="1228.42,225.73 1235.50,217.98 1229.20,217.39" fill="url(#m9)"/><polygon points="1228.42,225.73 1229.20,217.39 1227.19,217.20" fill="#00ff00"/><polygon points="1228.42,225.73 1227.19,217.20 1225.17,217.01" fill="#00ff00"/><polygon points="1228.42,225.73 1225.17,217.01 1223.16,216.82" fill="#00ff00"/><polygon points="1228.42,225.73 1223.16,216.82 1221.14,216.63" fill="#00ff00"/><polygon points="1228.42,225.73 1221.14,216.63 1219.13,216.45" fill="#00ff00"/><polygon points="1260.70,220.35 1303.75,213.17 1289.05,211.79" fill="url(#m21)"/><polygon points="1260.70,220.35 1289.05,211.79 1254.40,219.76" fill="url(#m23)"/><polygon points="1254.40,219.76 1289.05,211.79 1274.35,210.42" fill="url(#m25)"/><polygon points="1254.40,219.76 1274.35,210.42 1248.10,219.16" fill="url(#m27)"/><polygon points="1248.10,219.16 1274.35,210.42 1259.65,209.04" fill="url(#m29)"/><polygon points="1248.10,219.16 1259.65,209.04 1241.80,218.57" fill="url(#m31)"/><polygon points="1241.80,218.57 1259.65,209.04 1244.95,207.66" fill="url(#m33)"/><polygon points="1241.80,218.57 1244.95,207.66 1235.50,217.98" fill="url(#m35)"/><polygon points="1235.50,217.98 1244.95,207.66 1230.25,206.28" fill="url(#m37)"/><polygon points="1235.50,217.98 1230.25,206.28 1229.20,217.39" fill="url(#m39)"/><polygon points="1229.20,217.39 1230.25,206.28 1225.55,205.84" fill="#00ff00"/><polygon points="1229.20,217.39 1225.55,205.84 1227.19,217.20" fill="#00ff00"/><polygon points="1227.19,217.20 1225.55,205.84 1220.84,205.39" fill="#00ff00"/><polygon points="1227.19,217.20 1220.84,205.39 1225.17,217.01" fill="#00ff00"/><polygon points="1225.17,217.01 1220.84,205.39 1216.14,204.95" fill="#00ff00"/><polygon points="1225.17,217.01 1216.14,204.95 1223.16,216.82" fill="#00ff00"/><polygon points="1223.16,216.82 1216.14,204.95 1211.44,204.51" fill="#00ff00"/><polygon points="1223.16,216.82 1211.44,204.51 1221.14,216.63" fill="#00ff00"/><polygon points="1221.14,216.63 1211.44,204.51 1206.74,204.07" fill="#00ff00"/><polygon points="1221.14,216.63 1206.74,204.07 1219.13,216.45" fill="#00ff00"/><polygon points="1303.75,213.17 1352.18,205.11 1328.03,202.84" fill="url(#m61)"/><polygon points="1303.75,213.17 1328.03,202.84 1289.05,211.79" fill="url(#m63)"/><polygon points="1289.05,211.79 1328.03,202.84 1303.88,200.57" fill="url(#m65)"/><polygon points="1289.05,211.79 1303.88,200.57 1274.35,210.42" fill="url(#m67)"/><polygon points="1274.35,210.42 1303.88,200.57 1279.73,198.31" fill="url(#m69)"/><polygon points="1274.35,210.42 1279.73,198.31 1259.65,209.04" fill="url(#m71)"/><polygon points="1259.65,209.04 1279.73,198.31 1255.58,196.04" fill="url(#m73)"/><polygon points="1259.65,209.04 1255.58,196.04 1244.95,207.66" fill="url(#m75)"/><polygon points="1244.95,207.66 1255.58,196.04 1231.43,193.78" fill="url(#m77)"/><polygon points="1244.95,207.66 1231.43,193.78 1230.25,206.28" fill="url(#m79)"/><polygon points="1230.25,206.28 1231.43,193.78 1223.70,193.05" fill="#00ff00"/><polygon points="1230.25,206.28 1223.70,193.05 1225.55,205.84" fill="#00ff00"/><polygon points="1225.55,205.84 1223.70,193.05 1215.97,192.33" fill="#00ff00"/><polygon points="1225.55,205.84 1215.97,192.33 1220.84,205.39" fill="#00ff00"/><polygon points="1220.84,205.39 1215.97,192.33 1208.25,191.60" fill="#00ff00"/><polygon points="1220.84,205.39 1208.25,191.60 1216.14,204.95" fill="#00ff00"/><polygon points="1216.14,204.95 1208.25,191.60 1200.52,190.88" fill="#00ff00"/><polygon points="1216.14,204.95 1200.52,190.88 1211.44,204.51" fill="#00ff00"/><polygon points="1211.44,204.51 1200.52,190.88 1192.80,190.15" fill="#00ff00"/><polygon points="1211.44,204.51 1192.80,190.15 1206.74,204.07" fill="#00ff00"/><polygon points="1352.18,205.11 1400.60,197.04 1367.00,193.88" fill="url(#m101)"/><polygon points="1352.18,205.11 1367.00,193.88 1328.03,202.84" fill="url(#m103)"/><polygon points="1328.03,202.84 1367.00,193.88 1333.40,190.73" fill="url(#m105)"/><polygon points="1328.03,202.84 1333.40,190.73 1303.88,200.57" fill="url(#m107)"/><polygon points="1303.88,200.57 1333.40,190.73 1299.80,187.58" fill="url(#m109)"/><polygon points="1303.88,200.57 1299.80,187.58 1279.73,198.31" fill="url(#m111)"/><polygon points="1279.73,198.31 1299.80,187.58 1266.20,184.43" fill="url(#m113)"/><polygon points="1279.73,198.31 1266.20,184.43 1255.58,196.04" fill="url(#m115)"/><polygon points="1255.58,196.04 1266.20,184.43 1232.60,181.27" fill="url(#m117)"/><polygon points="1255.58,196.04 1232.60,181.27 1231.43,193.78" fill="url(#m119)"/><polygon points="1231.43,193.78 1232.60,181.27 1221.85,180.26" fill="#00ff00"/><polygon points="1231.43,193.78 1221.85,180.26 1223.70,193.05" fill="#00ff00"/><polygon points="1223.70,193.05 1221.85,180.26 1211.10,179.26" fill="#00ff00"/><polygon points="1223.70,193.05 1211.10,179.26 1215.97,192.33" fill="#00ff00"/><polygon points="1215.97,192.33 1211.10,179.26 1200.35,178.25" fill="#00ff00"/><polygon points="1215.97,192.33 1200.35,178.25 1208.25,191.60" fill="#00ff00"/><polygon points="1208.25,191.60 1200.35,178.25 1189.60,177.24" fill="#00ff00"/><polygon points="1208.25,191.60 1189.60,177.24 1200.52,190.88" fill="#00ff00"/><polygon points="1200.52,190.88 1189.60,177.24 1178.86,176.23" fill="#00ff00"/><polygon points="1200.52,190.88 1178.86,176.23 1192.80,190.15" fill="#00ff00"/><polygon points="1400.60,197.04 1449.03,188.97 1405.98,184.93" fill="url(#m141)"/><polygon points="1400.60,197.04 1405.98,184.93 1367.00,193.88" fill="url(#m143)"/><polygon points="1367.00,193.88 1405.98,184.93 1362.93,180.89" fill="url(#m145)"/><polygon points="1367.00,193.88 1362.93,180.89 1333.40,190.73" fill="url(#m147)"/><polygon points="1333.40,190.73 1362.93,180.89 1319.88,176.85" fill="url(#m149)"/><polygon points="1333.40,190.73 1319.88,176.85 1299.80,187.58" fill="url(#m151)"/><polygon points="1299.80,187.58 1319.88,176.85 1276.83,172.81" fill="url(#m153)"/><polygon points="1299.80,187.58 1276.83,172.81 1266.20,184.43" fill="url(#m155)"/><polygon points="1266.20,184.43 1276.83,172.81 1233.78,168.77" fill="url(#m157)"/><polygon points="1266.20,184.43 1233.78,168.77 1232.60,181.27" fill="url(#m159)"/><polygon points="1232.60,181.27 1233.78,168.77 1220.01,167.48" fill="#00ff00"/><polygon points="1232.60,181.27 1220.01,167.48 1221.85,180.26" fill="#00ff00"/><polygon points="1221.85,180.26 1220.01,167.48 1206.23,166.19" fill="#00ff00"/><polygon points="1221.85,180.26 1206.23,166.19 1211.10,179.26" fill="#00ff00"/><polygon points="1211.10,179.26 1206.23,166.19 1192.46,164.89" fill="#00ff00"/><polygon points="1211.10,179.26 1192.46,164.89 1200.35,178.25" fill="#00ff00"/><polygon points="1200.35,178.25 1192.46,164.89 1178.69,163.60" fill="#00ff00"/><polygon points="1200.35,178.25 1178.69,163.60 1189.60,177.24" fill="#00ff00"/><polygon points="1189.60,177.24 1178.69,163.60 1164.92,162.31" fill="#00ff00"/><polygon points="1189.60,177.24 1164.92,162.31 1178.86,176.23" fill="#00ff00"/><polygon points="1449.03,188.97 1497.45,180.90 1444.95,175.97" fill="url(#m181)"/><polygon points="1449.03,188.97 1444.95,175.97 1405.98,184.93" fill="url(#m182)"/><polygon points="1405.98,184.93 1444.95,175.97 1392.46,171.05" fill="url(#m184)"/><polygon points="1405.98,184.93 1392.46,171.05 1362.93,180.89" fill="url(#m186)"/><polygon points="1362.93,180.89 1392.46,171.05 1339.96,166.12" fill="url(#m188)"/><polygon points="1362.93,180.89 1339.96,166.12 1319.88,176.85" fill="url(#m190)"/><polygon points="1319.88,176.85 1339.96,166.12 1287.46,161.19" fill="url(#m192)"/><polygon points="1319.88,176.85 1287.46,161.19 1276.83,172.81" fill="url(#m194)"/><polygon points="1276.83,172.81 1287.46,161.19 1234.96,156.27" fill="url(#m196)"/><polygon points="1276.83,172.81 1234.96,156.27 1233.78,168.77" fill="url(#m198)"/><polygon points="1233.78,168.77 1234.96,156.27 1218.16,154.69" fill="#00ff00"/><polygon points="1233.78,168.77 1218.16,154.69 1220.01,167.48" fill="#00ff00"/><polygon points="1220.01,167.48 1218.16,154.69 1201.36,153.12" fill="#00ff00"/><polygon points="1220.01,167.48 1201.36,153.12 1206.23,166.19" fill="#00ff00"/><polygon points="1206.23,166.19 1201.36,153.12 1184.57,151.54" fill="#00ff00"/><polygon points="1206.23,166.19 1184.57,151.54 1192.46,164.89" fill="#00ff00"/><polygon points="1192.46,164.89 1184.57,151.54 1167.77,149.96" fill="#00ff00"/><polygon points="1192.46,164.89 1167.77,149.96 1178.69,163.60" fill="#00ff00"/><polygon points="1178.69,163.60 1167.77,149.96 1150.97,148.39" fill="#00ff00"/><polygon points="1178.69,163.60 1150.97,148.39 1164.92,162.31" fill="#00ff00"/><polygon points="1228.42,225.73 1219.13,216.45 1219.47,218.55" fill="#00ff00"/><polygon points="1228.42,225.73 1219.47,218.55 1219.81,220.66" fill="#00ff00"/><polygon points="1228.42,225.73 1219.81,220.66 1220.15,222.77" fill="#00ff00"/><polygon points="1228.42,225.73 1220.15,222.77 1220.49,224.88" fill="#00ff00"/><polygon points="1228.42,225.73 1220.49,224.88 1220.83,226.99" fill="#00ff00"/><polygon points="1228.42,225.73 1220.83,226.99 1221.77,232.85" fill="url(#m231)"/><polygon points="1228.42,225.73 1221.77,232.85 1222.72,238.72" fill="url(#m233)"/><polygon points="1228.42,225.73 1222.72,238.72 1223.67,244.58" fill="url(#m235)"/><polygon points="1228.42,225.73 1223.67,244.58 1224.61,250.44" fill="url(#m237)"/><polygon points="1228.42,225.73 1224.61,250.44 1225.56,256.31" fill="url(#m239)"/><polygon points="1219.13,216.45 1206.74,204.07 1207.53,208.99" fill="#00ff00"/><polygon points="1219.13,216.45 1207.53,208.99 1219.47,218.55" fill="#00ff00"/><polygon points="1219.47,218.55 1207.53,208.99 1208.32,213.91" fill="#00ff00"/><polygon points="1219.47,218.55 1208.32,213.91 1219.81,220.66" fill="#00ff00"/><polygon points="1219.81,220.66 1208.32,213.91 1209.12,218.83" fill="#00ff00"/><polygon points="1219.81,220.66 1209.12,218.83 1220.15,222.77" fill="#00ff00"/><polygon points="1220.15,222.77 1209.12,218.83 1209.91,223.75" fill="#00ff00"/><polygon points="1220.15,222.77 1209.91,223.75 1220.49,224.88" fill="#00ff00"/><polygon points="1220.49,224.88 1209.91,223.75 1210.71,228.67" fill="#00ff00"/><polygon points="1220.49,224.88 1210.71,228.67 1220.83,226.99" fill="#00ff00"/><polygon points="1220.83,226.99 1210.71,228.67 1212.91,242.35" fill="url(#m261)"/><polygon points="1220.83,226.99 1212.91,242.35 1221.77,232.85" fill="url(#m263)"/><polygon points="1221.77,232.85 1212.91,242.35 1215.12,256.04" fill="url(#m265)"/><polygon points="1221.77,232.85 1215.12,256.04 1222.72,238.72" fill="url(#m267)"/><polygon points="1222.72,238.72 1215.12,256.04 1217.33,269.72" fill="url(#m269)"/><polygon points="1222.72,238.72 1217.33,269.72 1223.67,244.58" fill="url(#m271)"/><polygon points="1223.67,244.58 1217.33,269.72 1219.54,283.40" fill="url(#m273)"/><polygon points="1223.67,244.58 1219.54,283.40 1224.61,250.44" fill="url(#m275)"/><polygon points="1224.61,250.44 1219.54,283.40 1221.75,297.08" fill="url(#m277)"/><polygon points="1224.61,250.44 1221.75,297.08 1225.56,256.31" fill="url(#m279)"/><polygon points="1206.74,204.07 1192.80,190.15 1194.10,198.23" fill="#00ff00"/><polygon points="1206.74,204.07 1194.10,198.23 1207.53,208.99" fill="#00ff00"/><polygon points="1207.53,208.99 1194.10,198.23 1195.40,206.32" fill="#00ff00"/><polygon points="1207.53,208.99 1195.40,206.32 1208.32,213.91" fill="#00ff00"/><polygon points="1208.32,213.91 1195.40,206.32 1196.71,214.40" fill="#00ff00"/><polygon points="1208.32,213.91 1196.71,214.40 1209.12,218.83" fill="#00ff00"/><polygon points="1209.12,218.83 1196.71,214.40 1198.01,222.48" fill="#00ff00"/><polygon points="1209.12,218.83 1198.01,222.48 1209.91,223.75" fill="#00ff00"/><polygon points="1209.91,223.75 1198.01,222.48 1199.32,230.57" fill="#00ff00"/><polygon points="1209.91,223.75 1199.32,230.57 1210.71,228.67" fill="#00ff00"/><polygon points="1210.71,228.67 1199.32,230.57 1202.95,253.04" fill="url(#m301)"/><polygon points="1210.71,228.67 1202.95,253.04 1212.91,242.35" fill="url(#m303)"/><polygon points="1212.91,242.35 1202.95,253.04 1206.57,275.52" fill="url(#m305)"/><polygon points="1212.91,242.35 1206.57,275.52 1215.12,256.04" fill="url(#m307)"/><polygon points="1215.12,256.04 1206.57,275.52 1210.20,298.00" fill="url(#m309)"/><polygon points="1215.12,256.04 1210.20,298.00 1217.33,269.72" fill="url(#m311)"/><polygon points="1217.33,269.72 1210.20,298.00 1213.83,320.47" fill="url(#m313)"/><polygon points="1217.33,269.72 1213.83,320.47 1219.54,283.40" fill="url(#m315)"/><polygon points="1219.54,283.40 1213.83,320.47 1217.46,342.95" fill="url(#m317)"/><polygon points="1219.54,283.40 1217.46,342.95 1221.75,297.08" fill="url(#m319)"/><polygon points="1192.80,190.15 1178.86,176.23 1180.67,187.48" fill="#00ff00"/><polygon points="1192.80,190.15 1180.67,187.48 1194.10,198.23" fill="#00ff00"/><polygon points="1194.10,198.23 1180.67,187.48 1182.49,198.72" fill="#00ff00"/><polygon points="1194.10,198.23 1182.49,198.72 1195.40,206.32" fill="#00ff00"/><polygon points="1195.40,206.32 1182.49,198.72 1184.30,209.97" fill="#00ff00"/><polygon points="1195.40,206.32 1184.30,209.97 1196.71,214.40" fill="#00ff00"/><polygon points="1196.71,214.40 1184.30,209.97 1186.12,221.21" fill="#00ff00"/><polygon points="1196.71,214.40 1186.12,221.21 1198.01,222.48" fill="#00ff00"/><polygon points="1198.01,222.48 1186.12,221.21 1187.93,232.46" fill="#00ff00"/><polygon points="1198.01,222.48 1187.93,232.46 1199.32,230.57" fill="#00ff00"/><polygon points="1199.32,230.57 1187.93,232.46 1192.98,263.73" fill="url(#m341)"/><polygon points="1199.32,230.57 1192.98,263.73 1202.95,253.04" fill="url(#m343)"/><polygon points="1202.95,253.04 1192.98,263.73 1198.03,295.00" fill="url(#m345)"/><polygon points="1202.95,253.04 1198.03,295.00 1206.57,275.52" fill="url(#m347)"/><polygon points="1206.57,275.52 1198.03,295.00 1203.07,326.28" fill="url(#m349)"/><polygon points="1206.57,275.52 1203.07,326.28 1210.20,298.00" fill="url(#m351)"/><polygon points="1210.20,298.00 1203.07,326.28 1208.12,357.55" fill="url(#m353)"/><polygon points="1210.20,298.00 1208.12,357.55 1213.83,320.47" fill="url(#m355)"/><polygon points="1213.83,320.47 1208.12,357.55 1213.17,388.82" fill="url(#m357)"/><polygon points="1213.83,320.47 1213.17,388.82 1217.46,342.95" fill="url(#m359)"/><polygon points="1178.86,176.23 1164.92,162.31 1167.24,176.72" fill="#00ff00"/><polygon points="1178.86,176.23 1167.24,176.72 1180.67,187.48" fill="#00ff00"/><polygon points="1180.67,187.48 1167.24,176.72 1169.57,191.13" fill="#00ff00"/><polygon points="1180.67,187.48 1169.57,191.13 1182.49,198.72" fill="#00ff00"/><polygon points="1182.49,198.72 1169.57,191.13 1171.89,205.54" fill="#00ff00"/><polygon points="1182.49,198.72 1171.89,205.54 1184.30,209.97" fill="#00ff00"/><polygon points="1184.30,209.97 1171.89,205.54 1174.22,219.94" fill="#00ff00"/><polygon points="1184.30,209.97 1174.22,219.94 1186.12,221.21" fill="#00ff00"/><polygon points="1186.12,221.21 1174.22,219.94 1176.54,234.35" fill="#00ff00"/><polygon points="1186.12,221.21 1176.54,234.35 1187.93,232.46" fill="#00ff00"/><polygon points="1187.93,232.46 1176.54,234.35 1183.01,274.42" fill="url(#m381)"/><polygon points="1187.93,232.46 1183.01,274.42 1192.98,263.73" fill="url(#m383)"/><polygon points="1192.98,263.73 1183.01,274.42 1189.48,314.49" fill="url(#m385)"/><polygon points="1192.98,263.73 1189.48,314.49 1198.03,295.00" fill="url(#m387)"/><polygon points="1198.03,295.00 1189.48,314.49 1195.95,354.56" fill="url(#m389)"/><polygon points="1198.03,295.00 1195.95,354.56 1203.07,326.28" fill="url(#m391)"/><polygon points="1203.07,326.28 1195.95,354.56 1202.41,394.63" fill="url(#m393)"/><polygon points="1203.07,326.28 1202.41,394.63 1208.12,357.55" fill="url(#m395)"/><polygon points="1208.12,357.55 1202.41,394.63 1208.88,434.69" fill="url(#m397)"/><polygon points="1208.12,357.55 1208.88,434.69 1213.17,388.82" fill="url(#m399)"/><polygon points="1164.92,162.31 1150.97,148.39 1153.81,165.96" fill="#00ff00"/><polygon points="1164.92,162.31 1153.81,165.96 1167.24,176.72" fill="#00ff00"/><polygon points="1167.24,176.72 1153.81,165.96 1156.65,183.53" fill="#00ff00"/><polygon points="1167.24,176.72 1156.65,183.53 1169.57,191.13" fill="#00ff00"/><polygon points="1169.57,191.13 1156.65,183.53 1159.48,201.10" fill="#00ff00"/><polygon points="1169.57,191.13 1159.48,201.10 1171.89,205.54" fill="#00ff00"/><polygon points="1171.89,205.54 1159.48,201.10 1162.32,218.67" fill="#00ff00"/><polygon points="1171.89,205.54 1162.32,218.67 1174.22,219.94" fill="#00ff00"/><polygon points="1174.22,219.94 1162.32,218.67 1165.16,236.25" fill="#00ff00"/><polygon points="1174.22,219.94 1165.16,236.25 1176.54,234.35" fill="#00ff00"/><polygon points="1176.54,234.35 1165.16,236.25 1173.04,285.11" fill="url(#m421)"/><polygon points="1176.54,234.35 1173.04,285.11 1183.01,274.42" fill="url(#m423)"/><polygon points="1183.01,274.42 1173.04,285.11 1180.93,333.97" fill="url(#m425)"/><polygon points="1183.01,274.42 1180.93,333.97 1189.48,314.49" fill="url(#m427)"/><polygon points="1189.48,314.49 1180.93,333.97 1188.82,382.84" fill="url(#m429)"/><polygon points="1189.48,314.49 1188.82,382.84 1195.95,354.56" fill="url(#m431)"/><polygon points="1195.95,354.56 1188.82,382.84 1196.70,431.70" fill="url(#m433)"/><polygon points="1195.95,354.56 1196.70,431.70 1202.41,394.63" fill="url(#m435)"/><polygon points="1202.41,394.63 1196.70,431.70 1204.59,480.56" fill="url(#m437)"/><polygon points="1202.41,394.63 1204.59,480.56 1208.88,434.69" fill="url(#m439)"/><polygon points="1228.42,225.73 1225.56,256.31 1228.87,252.92" fill="url(#m441)"/><polygon points="1228.42,225.73 1228.87,252.92 1232.18,249.53" fill="url(#m443)"/><polygon points="1228.42,225.73 1232.18,249.53 1235.49,246.15" fill="url(#m445)"/><polygon points="1228.42,225.73 1235.49,246.15 1238.80,242.76" fill="url(#m447)"/><polygon points="1228.42,225.73 1238.80,242.76 1242.11,239.38" fill="url(#m449)"/><polygon points="1228.42,225.73 1242.11,239.38 1245.83,235.57" fill="url(#m450)"/><polygon points="1228.42,225.73 1245.83,235.57 1249.55,231.76" fill="url(#m452)"/><polygon points="1228.42,225.73 1249.55,231.76 1253.26,227.96" fill="url(#m454)"/><polygon points="1228.42,225.73 1253.26,227.96 1256.98,224.15" fill="url(#m456)"/><polygon points="1228.42,225.73 1256.98,224.15 1260.70,220.35" fill="url(#m458)"/><polygon points="1225.56,256.31 1221.75,297.08 1229.47,289.18" fill="url(#m461)"/><polygon points="1225.56,256.31 1229.47,289.18 1228.87,252.92" fill="url(#m463)"/><polygon points="1228.87,252.92 1229.47,289.18 1237.19,281.28" fill="url(#m465)"/><polygon points="1228.87,252.92 1237.19,281.28 1232.18,249.53" fill="url(#m467)"/><polygon points="1232.18,249.53 1237.19,281.28 1244.91,273.38" fill="url(#m469)"/><polygon points="1232.18,249.53 1244.91,273.38 1235.49,246.15" fill="url(#m471)"/><polygon points="1235.49,246.15 1244.91,273.38 1252.63,265.48" fill="url(#m473)"/><polygon points="1235.49,246.15 1252.63,265.48 1238.80,242.76" fill="url(#m475)"/><polygon points="1238.80,242.76 1252.63,265.48 1260.36,257.58" fill="url(#m477)"/><polygon points="1238.80,242.76 1260.36,257.58 1242.11,239.38" fill="url(#m479)"/><polygon points="1242.11,239.38 1260.36,257.58 1269.03,248.70" fill="url(#m480)"/><polygon points="1242.11,239.38 1269.03,248.70 1245.83,235.57" fill="url(#m482)"/><polygon points="1245.83,235.57 1269.03,248.70 1277.71,239.82" fill="url(#m484)"/><polygon points="1245.83,235.57 1277.71,239.82 1249.55,231.76" fill="url(#m486)"/><polygon points="1249.55,231.76 1277.71,239.82 1286.39,230.93" fill="url(#m488)"/><polygon points="1249.55,231.76 1286.39,230.93 1253.26,227.96" fill="url(#m490)"/><polygon points="1253.26,227.96 1286.39,230.93 1295.07,222.05" fill="url(#m492)"/><polygon points="1253.26,227.96 1295.07,222.05 1256.98,224.15" fill="url(#m494)"/><polygon points="1256.98,224.15 1295.07,222.05 1303.75,213.17" fill="url(#m496)"/><polygon points="1256.98,224.15 1303.75,213.17 1260.70,220.35" fill="url(#m498)"/><polygon points="1221.75,297.08 1217.46,342.95 1230.14,329.97" fill="url(#m501)"/><polygon points="1221.75,297.08 1230.14,329.97 1229.47,289.18" fill="url(#m503)"/><polygon points="1229.47,289.18 1230.14,329.97 1242.83,316.99" fill="url(#m505)"/><polygon points="1229.47,289.18 1242.83,316.99 1237.19,281.28" fill="url(#m507)"/><polygon points="1237.19,281.28 1242.83,316.99 1255.52,304.01" fill="url(#m509)"/><polygon points="1237.19,281.28 1255.52,304.01 1244.91,273.38" fill="url(#m511)"/><polygon points="1244.91,273.38 1255.52,304.01 1268.20,291.03" fill="url(#m513)"/><polygon points="1244.91,273.38 1268.20,291.03 1252.63,265.48" fill="url(#m515)"/><polygon points="1252.63,265.48 1268.20,291.03 1280.89,278.05" fill="url(#m517)"/><polygon points="1252.63,265.48 1280.89,278.05 1260.36,257.58" fill="url(#m519)"/><polygon points="1260.36,257.58 1280.89,278.05 1295.14,263.46" fill="url(#m520)"/><polygon points="1260.36,257.58 1295.14,263.46 1269.03,248.70" fill="url(#m522)"/><polygon points="1269.03,248.70 1295.14,263.46 1309.40,248.87" fill="url(#m524)"/><polygon points="1269.03,248.70 1309.40,248.87 1277.71,239.82" fill="url(#m526)"/><polygon points="1277.71,239.82 1309.40,248.87 1323.66,234.28" fill="url(#m528)"/><polygon points="1277.71,239.82 1323.66,234.28 1286.39,230.93" fill="url(#m530)"/><polygon points="1286.39,230.93 1323.66,234.28 1337.92,219.69" fill="url(#m532)"/><polygon points="1286.39,230.93 1337.92,219.69 1295.07,222.05" fill="url(#m534)"/><polygon points="1295.07,222.05 1337.92,219.69 1352.18,205.11" fill="url(#m536)"/><polygon points="1295.07,222.05 1352.18,205.11 1303.75,213.17" fill="url(#m538)"/><polygon points="1217.46,342.95 1213.17,388.82 1230.82,370.76" fill="url(#m541)"/><polygon points="1217.46,342.95 1230.82,370.76 1230.14,329.97" fill="url(#m543)"/><polygon points="1230.14,329.97 1230.82,370.76 1248.47,352.70" fill="url(#m545)"/><polygon points="1230.14,329.97 1248.47,352.70 1242.83,316.99" fill="url(#m547)"/><polygon points="1242.83,316.99 1248.47,352.70 1266.12,334.64" fill="url(#m549)"/><polygon points="1242.83,316.99 1266.12,334.64 1255.52,304.01" fill="url(#m551)"/><polygon points="1255.52,304.01 1266.12,334.64 1283.77,316.58" fill="url(#m553)"/><polygon points="1255.52,304.01 1283.77,316.58 1268.20,291.03" fill="url(#m555)"/><polygon points="1268.20,291.03 1283.77,316.58 1301.42,298.53" fill="url(#m557)"/><polygon points="1268.20,291.03 1301.42,298.53 1280.89,278.05" fill="url(#m559)"/><polygon points="1280.89,278.05 1301.42,298.53 1321.25,278.23" fill="url(#m560)"/><polygon points="1280.89,278.05 1321.25,278.23 1295.14,263.46" fill="url(#m562)"/><polygon points="1295.14,263.46 1321.25,278.23 1341.09,257.93" fill="url(#m564)"/><polygon points="1295.14,263.46 1341.09,257.93 1309.40,248.87" fill="url(#m566)"/><polygon points="1309.40,248.87 1341.09,257.93 1360.93,237.63" fill="url(#m568)"/><polygon points="1309.40,248.87 1360.93,237.63 1323.66,234.28" fill="url(#m570)"/><polygon points="1323.66,234.28 1360.93,237.63 1380.76,217.33" fill="url(#m572)"/><polygon points="1323.66,234.28 1380.76,217.33 1337.92,219.69" fill="url(#m574)"/><polygon points="1337.92,219.69 1380.76,217.33 1400.60,197.04" fill="url(#m576)"/><polygon points="1337.92,219.69 1400.60,197.04 1352.18,205.11" fill="url(#m578)"/><polygon points="1213.17,388.82 1208.88,434.69 1231.49,411.55" fill="url(#m581)"/><polygon points="1213.17,388.82 1231.49,411.55 1230.82,370.76" fill="url(#m583)"/><polygon points="1230.82,370.76 1231.49,411.55 1254.11,388.42" fill="url(#m585)"/><polygon points="1230.82,370.76 1254.11,388.42 1248.47,352.70" fill="url(#m587)"/><polygon points="1248.47,352.70 1254.11,388.42 1276.72,365.28" fill="url(#m589)"/><polygon points="1248.47,352.70 1276.72,365.28 1266.12,334.64" fill="url(#m591)"/><polygon points="1266.12,334.64 1276.72,365.28 1299.33,342.14" fill="url(#m593)"/><polygon points="1266.12,334.64 1299.33,342.14 1283.77,316.58" fill="url(#m595)"/><polygon points="1283.77,316.58 1299.33,342.14 1321.95,319.00" fill="url(#m597)"/><polygon points="1283.77,316.58 1321.95,319.00 1301.42,298.53" fill="url(#m599)"/><polygon points="1301.42,298.53 1321.95,319.00 1347.36,292.99" fill="url(#m600)"/><polygon points="1301.42,298.53 1347.36,292.99 1321.25,278.23" fill="url(#m602)"/><polygon points="1321.25,278.23 1347.36,292.99 1372.78,266.99" fill="url(#m604)"/><polygon points="1321.25,278.23 1372.78,266.99 1341.09,257.93" fill="url(#m606)"/><polygon points="1341.09,257.93 1372.78,266.99 1398.20,240.98" fill="url(#m608)"/><polygon points="1341.09,257.93 1398.20,240.98 1360.93,237.63" fill="url(#m610)"/><polygon points="1360.93,237.63 1398.20,240.98 1423.61,214.97" fill="url(#m612)"/><polygon points="1360.93,237.63 1423.61,214.97 1380.76,217.33" fill="url(#m614)"/><polygon points="1380.76,217.33 1423.61,214.97 1449.03,188.97" fill="url(#m616)"/><polygon points="1380.76,217.33 1449.03,188.97 1400.60,197.04" fill="url(#m618)"/><polygon points="1208.88,434.69 1204.59,480.56 1232.17,452.35" fill="url(#m621)"/><polygon points="1208.88,434.69 1232.17,452.35 1231.49,411.55" fill="url(#m623)"/><polygon points="1231.49,411.55 1232.17,452.35 1259.75,424.13" fill="url(#m625)"/><polygon points="1231.49,411.55 1259.75,424.13 1254.11,388.42" fill="url(#m627)"/><polygon points="1254.11,388.42 1259.75,424.13 1287.32,395.91" fill="url(#m629)"/><polygon points="1254.11,388.42 1287.32,395.91 1276.72,365.28" fill="url(#m631)"/><polygon points="1276.72,365.28 1287.32,395.91 1314.90,367.69" fill="url(#m633)"/><polygon points="1276.72,365.28 1314.90,367.69 1299.33,342.14" fill="url(#m635)"/><polygon points="1299.33,342.14 1314.90,367.69 1342.48,339.48" fill="url(#m637)"/><polygon points="1299.33,342.14 1342.48,339.48 1321.95,319.00" fill="url(#m639)"/><polygon points="1321.95,319.00 1342.48,339.48 1373.47,307.76" fill="url(#m640)"/><polygon points="1321.95,319.00 1373.47,307.76 1347.36,292.99" fill="url(#m642)"/><polygon points="1347.36,292.99 1373.47,307.76 1404.47,276.04" fill="url(#m644)"/><polygon points="1347.36,292.99 1404.47,276.04 1372.78,266.99" fill="url(#m646)"/><polygon points="1372.78,266.99 1404.47,276.04 1435.46,244.33" fill="url(#m648)"/><polygon points="1372.78,266.99 1435.46,244.33 1398.20,240.98" fill="url(#m650)"/><polygon points="1398.20,240.98 1435.46,244.33 1466.46,212.61" fill="url(#m652)"/><polygon points="1398.20,240.98 1466.46,212.61 1423.61,214.97" fill="url(#m654)"/><polygon points="1423.61,214.97 1466.46,212.61 1497.45,180.90" fill="url(#m656)"/><polygon points="1423.61,214.97 1497.45,180.90 1449.03,188.97" fill="url(#m658)"/></g><g shape-rendering="crispEdges" style="mix-blend-mode:screen"><polygon points="1228.42,225.73 1260.70,220.35 1254.40,219.76" fill="url(#m2)"/><polygon points="1228.42,225.73 1254.40,219.76 1248.10,219.16" fill="url(#m4)"/><polygon points="1228.42,225.73 1248.10,219.16 1241.80,218.57" fill="url(#m6)"/><polygon points="1228.42,225.73 1241.80,218.57 1235.50,217.98" fill="url(#m8)"/><polygon points="1228.42,225.73 1235.50,217.98 1229.20,217.39" fill="url(#m10)"/><polygon points="1228.42,225.73 1229.20,217.39 1227.19,217.20" fill="url(#m12)"/><polygon points="1228.42,225.73 1227.19,217.20 1225.17,217.01" fill="url(#m14)"/><polygon points="1228.42,225.73 1225.17,217.01 1223.16,216.82" fill="url(#m16)"/><polygon points="1228.42,225.73 1223.16,216.82 1221.14,216.63" fill="url(#m18)"/><polygon points="1228.42,225.73 1221.14,216.63 1219.13,216.45" fill="url(#m20)"/><polygon points="1260.70,220.35 1303.75,213.17 1289.05,211.79" fill="url(#m22)"/><polygon points="1260.70,220.35 1289.05,211.79 1254.40,219.76" fill="url(#m24)"/><polygon points="1254.40,219.76 1289.05,211.79 1274.35,210.42" fill="url(#m26)"/><polygon points="1254.40,219.76 1274.35,210.42 1248.10,219.16" fill="url(#m28)"/><polygon points="1248.10,219.16 1274.35,210.42 1259.65,209.04" fill="url(#m30)"/><polygon points="1248.10,219.16 1259.65,209.04 1241.80,218.57" fill="url(#m32)"/><polygon points="1241.80,218.57 1259.65,209.04 1244.95,207.66" fill="url(#m34)"/><polygon points="1241.80,218.57 1244.95,207.66 1235.50,217.98" fill="url(#m36)"/><polygon points="1235.50,217.98 1244.95,207.66 1230.25,206.28" fill="url(#m38)"/><polygon points="1235.50,217.98 1230.25,206.28 1229.20,217.39" fill="url(#m40)"/><polygon points="1229.20,217.39 1230.25,206.28 1225.55,205.84" fill="url(#m42)"/><polygon points="1229.20,217.39 1225.55,205.84 1227.19,217.20" fill="url(#m44)"/><polygon points="1227.19,217.20 1225.55,205.84 1220.84,205.39" fill="url(#m46)"/><polygon points="1227.19,217.20 1220.84,205.39 1225.17,217.01" fill="url(#m48)"/><polygon points="1225.17,217.01 1220.84,205.39 1216.14,204.95" fill="url(#m50)"/><polygon points="1225.17,217.01 1216.14,204.95 1223.16,216.82" fill="url(#m52)"/><polygon points="1223.16,216.82 1216.14,204.95 1211.44,204.51" fill="url(#m54)"/><polygon points="1223.16,216.82 1211.44,204.51 1221.14,216.63" fill="url(#m56)"/><polygon points="1221.14,216.63 1211.44,204.51 1206.74,204.07" fill="url(#m58)"/><polygon points="1221.14,216.63 1206.74,204.07 1219.13,216.45" fill="url(#m60)"/><polygon points="1303.75,213.17 1352.18,205.11 1328.03,202.84" fill="url(#m62)"/><polygon points="1303.75,213.17 1328.03,202.84 1289.05,211.79" fill="url(#m64)"/><polygon points="1289.05,211.79 1328.03,202.84 1303.88,200.57" fill="url(#m66)"/><polygon points="1289.05,211.79 1303.88,200.57 1274.35,210.42" fill="url(#m68)"/><polygon points="1274.35,210.42 1303.88,200.57 1279.73,198.31" fill="url(#m70)"/><polygon points="1274.35,210.42 1279.73,198.31 1259.65,209.04" fill="url(#m72)"/><polygon points="1259.65,209.04 1279.73,198.31 1255.58,196.04" fill="url(#m74)"/><polygon points="1259.65,209.04 1255.58,196.04 1244.95,207.66" fill="url(#m76)"/><polygon points="1244.95,207.66 1255.58,196.04 1231.43,193.78" fill="url(#m78)"/><polygon points="1244.95,207.66 1231.43,193.78 1230.25,206.28" fill="url(#m80)"/><polygon points="1230.25,206.28 1231.43,193.78 1223.70,193.05" fill="url(#m82)"/><polygon points="1230.25,206.28 1223.70,193.05 1225.55,205.84" fill="url(#m84)"/><polygon points="1225.55,205.84 1223.70,193.05 1215.97,192.33" fill="url(#m86)"/><polygon points="1225.55,205.84 1215.97,192.33 1220.84,205.39" fill="url(#m88)"/><polygon points="1220.84,205.39 1215.97,192.33 1208.25,191.60" fill="url(#m90)"/><polygon points="1220.84,205.39 1208.25,191.60 1216.14,204.95" fill="url(#m92)"/><polygon points="1216.14,204.95 1208.25,191.60 1200.52,190.88" fill="url(#m94)"/><polygon points="1216.14,204.95 1200.52,190.88 1211.44,204.51" fill="url(#m96)"/><polygon points="1211.44,204.51 1200.52,190.88 1192.80,190.15" fill="url(#m98)"/><polygon points="1211.44,204.51 1192.80,190.15 1206.74,204.07" fill="url(#m100)"/><polygon points="1352.18,205.11 1400.60,197.04 1367.00,193.88" fill="url(#m102)"/><polygon points="1352.18,205.11 1367.00,193.88 1328.03,202.84" fill="url(#m104)"/><polygon points="1328.03,202.84 1367.00,193.88 1333.40,190.73" fill="url(#m106)"/><polygon points="1328.03,202.84 1333.40,190.73 1303.88,200.57" fill="url(#m108)"/><polygon points="1303.88,200.57 1333.40,190.73 1299.80,187.58" fill="url(#m110)"/><polygon points="1303.88,200.57 1299.80,187.58 1279.73,198.31" fill="url(#m112)"/><polygon points="1279.73,198.31 1299.80,187.58 1266.20,184.43" fill="url(#m114)"/><polygon points="1279.73,198.31 1266.20,184.43 1255.58,196.04" fill="url(#m116)"/><polygon points="1255.58,196.04 1266.20,184.43 1232.60,181.27" fill="url(#m118)"/><polygon points="1255.58,196.04 1232.60,181.27 1231.43,193.78" fill="url(#m120)"/><polygon points="1231.43,193.78 1232.60,181.27 1221.85,180.26" fill="url(#m122)"/><polygon points="1231.43,193.78 1221.85,180.26 1223.70,193.05" fill="url(#m124)"/><polygon points="1223.70,193.05 1221.85,180.26 1211.10,179.26" fill="url(#m126)"/><polygon points="1223.70,193.05 1211.10,179.26 1215.97,192.33" fill="url(#m128)"/><polygon points="1215.97,192.33 1211.10,179.26 1200.35,178.25" fill="url(#m130)"/><polygon points="1215.97,192.33 1200.35,178.25 1208.25,191.60" fill="url(#m132)"/><polygon points="1208.25,191.60 1200.35,178.25 1189.60,177.24" fill="url(#m134)"/><polygon points="1208.25,191.60 1189.60,177.24 1200.52,190.88" fill="url(#m136)"/><polygon points="1200.52,190.88 1189.60,177.24 1178.86,176.23" fill="url(#m138)"/><polygon points="1200.52,190.88 1178.86,176.23 1192.80,190.15" fill="url(#m140)"/><polygon points="1400.60,197.04 1449.03,188.97 1405.98,184.93" fill="url(#m142)"/><polygon points="1400.60,197.04 1405.98,184.93 1367.00,193.88" fill="url(#m144)"/><polygon points="1367.00,193.88 1405.98,184.93 1362.93,180.89" fill="url(#m146)"/><polygon points="1367.00,193.88 1362.93,180.89 1333.40,190.73" fill="url(#m148)"/><polygon points="1333.40,190.73 1362.93,180.89 1319.88,176.85" fill="url(#m150)"/><polygon points="1333.40,190.73 1319.88,176.85 1299.80,187.58" fill="url(#m152)"/><polygon points="1299.80,187.58 1319.88,176.85 1276.83,172.81" fill="url(#m154)"/><polygon points="1299.80,187.58 1276.83,172.81 1266.20,184.43" fill="url(#m156)"/><polygon points="1266.20,184.43 1276.83,172.81 1233.78,168.77" fill="url(#m158)"/><polygon points="1266.20,184.43 1233.78,168.77 1232.60,181.27" fill="url(#m160)"/><polygon points="1232.60,181.27 1233.78,168.77 1220.01,167.48" fill="url(#m162)"/><polygon points="1232.60,181.27 1220.01,167.48 1221.85,180.26" fill="url(#m164)"/><polygon points="1221.85,180.26 1220.01,167.48 1206.23,166.19" fill="url(#m166)"/><polygon points="1221.85,180.26 1206.23,166.19 1211.10,179.26" fill="url(#m168)"/><polygon points="1211.10,179.26 1206.23,166.19 1192.46,164.89" fill="url(#m170)"/><polygon points="1211.10,179.26 1192.46,164.89 1200.35,178.25" fill="url(#m172)"/><polygon points="1200.35,178.25 1192.46,164.89 1178.69,163.60" fill="url(#m174)"/><polygon points="1200.35,178.25 1178.69,163.60 1189.60,177.24" fill="url(#m176)"/><polygon points="1189.60,177.24 1178.69,163.60 1164.92,162.31" fill="url(#m178)"/><polygon points="1189.60,177.24 1164.92,162.31 1178.86,176.23" fill="url(#m180)"/><polygon points="1449.03,188.97 1444.95,175.97 1405.98,184.93" fill="url(#m183)"/><polygon points="1405.98,184.93 1444.95,175.97 1392.46,171.05" fill="url(#m185)"/><polygon points="1405.98,184.93 1392.46,171.05 1362.93,180.89" fill="url(#m187)"/><polygon points="1362.93,180.89 1392.46,171.05 1339.96,166.12" fill="url(#m189)"/><polygon points="1362.93,180.89 1339.96,166.12 1319.88,176.85" fill="url(#m191)"/><polygon points="1319.88,176.85 1339.96,166.12 1287.46,161.19" fill="url(#m193)"/><polygon points="1319.88,176.85 1287.46,161.19 1276.83,172.81" fill="url(#m195)"/><polygon points="1276.83,172.81 1287.46,161.19 1234.96,156.27" fill="url(#m197)"/><polygon points="1276.83,172.81 1234.96,156.27 1233.78,168.77" fill="url(#m199)"/><polygon points="1233.78,168.77 1234.96,156.27 1218.16,154.69" fill="url(#m201)"/><polygon points="1233.78,168.77 1218.16,154.69 1220.01,167.48" fill="url(#m203)"/><polygon points="1220.01,167.48 1218.16,154.69 1201.36,153.12" fill="url(#m205)"/><polygon points="1220.01,167.48 1201.36,153.12 1206.23,166.19" fill="url(#m207)"/><polygon points="1206.23,166.19 1201.36,153.12 1184.57,151.54" fill="url(#m209)"/><polygon points="1206.23,166.19 1184.57,151.54 1192.46,164.89" fill="url(#m211)"/><polygon points="1192.46,164.89 1184.57,151.54 1167.77,149.96" fill="url(#m213)"/><polygon points="1192.46,164.89 1167.77,149.96 1178.69,163.60" fill="url(#m215)"/><polygon points="1178.69,163.60 1167.77,149.96 1150.97,148.39" fill="url(#m217)"/><polygon points="1178.69,163.60 1150.97,148.39 1164.92,162.31" fill="url(#m219)"/><polygon points="1228.42,225.73 1219.13,216.45 1219.47,218.55" fill="url(#m221)"/><polygon points="1228.42,225.73 1219.47,218.55 1219.81,220.66" fill="url(#m223)"/><polygon points="1228.42,225.73 1219.81,220.66 1220.15,222.77" fill="url(#m225)"/><polygon points="1228.42,225.73 1220.15,222.77 1220.49,224.88" fill="url(#m227)"/><polygon points="1228.42,225.73 1220.49,224.88 1220.83,226.99" fill="url(#m229)"/><polygon points="1228.42,225.73 1220.83,226.99 1221.77,232.85" fill="#0000ff"/><polygon points="1228.42,225.73 1221.77,232.85 1222.72,238.72" fill="#0000ff"/><polygon points="1228.42,225.73 1222.72,238.72 1223.67,244.58" fill="#0000ff"/><polygon points="1228.42,225.73 1223.67,244.58 1224.61,250.44" fill="#0000ff"/><polygon points="1228.42,225.73 1224.61,250.44 1225.56,256.31" fill="#0000ff"/><polygon points="1219.13,216.45 1206.74,204.07 1207.53,208.99" fill="url(#m241)"/><polygon points="1219.13,216.45 1207.53,208.99 1219.47,218.55" fill="url(#m243)"/><polygon points="1219.47,218.55 1207.53,208.99 1208.32,213.91" fill="url(#m245)"/><polygon points="1219.47,218.55 1208.32,213.91 1219.81,220.66" fill="url(#m247)"/><polygon points="1219.81,220.66 1208.32,213.91 1209.12,218.83" fill="url(#m249)"/><polygon points="1219.81,220.66 1209.12,218.83 1220.15,222.77" fill="url(#m251)"/><polygon points="1220.15,222.77 1209.12,218.83 1209.91,223.75" fill="url(#m253)"/><polygon points="1220.15,222.77 1209.91,223.75 1220.49,224.88" fill="url(#m255)"/><polygon points="1220.49,224.88 1209.91,223.75 1210.71,228.67" fill="url(#m257)"/><polygon points="1220.49,224.88 1210.71,228.67 1220.83,226.99" fill="url(#m259)"/><polygon points="1220.83,226.99 1210.71,228.67 1212.91,242.35" fill="#0000ff"/><polygon points="1220.83,226.99 1212.91,242.35 1221.77,232.85" fill="#0000ff"/><polygon points="1221.77,232.85 1212.91,242.35 1215.12,256.04" fill="#0000ff"/><polygon points="1221.77,232.85 1215.12,256.04 1222.72,238.72" fill="#0000ff"/><polygon points="1222.72,238.72 1215.12,256.04 1217.33,269.72" fill="#0000ff"/><polygon points="1222.72,238.72 1217.33,269.72 1223.67,244.58" fill="#0000ff"/><polygon points="1223.67,244.58 1217.33,269.72 1219.54,283.40" fill="#0000ff"/><polygon points="1223.67,244.58 1219.54,283.40 1224.61,250.44" fill="#0000ff"/><polygon points="1224.61,250.44 1219.54,283.40 1221.75,297.08" fill="#0000ff"/><polygon points="1224.61,250.44 1221.75,297.08 1225.56,256.31" fill="#0000ff"/><polygon points="1206.74,204.07 1192.80,190.15 1194.10,198.23" fill="url(#m281)"/><polygon points="1206.74,204.07 1194.10,198.23 1207.53,208.99" fill="url(#m283)"/><polygon points="1207.53,208.99 1194.10,198.23 1195.40,206.32" fill="url(#m285)"/><polygon points="1207.53,208.99 1195.40,206.32 1208.32,213.91" fill="url(#m287)"/><polygon points="1208.32,213.91 1195.40,206.32 1196.71,214.40" fill="url(#m289)"/><polygon points="1208.32,213.91 1196.71,214.40 1209.12,218.83" fill="url(#m291)"/><polygon points="1209.12,218.83 1196.71,214.40 1198.01,222.48" fill="url(#m293)"/><polygon points="1209.12,218.83 1198.01,222.48 1209.91,223.75" fill="url(#m295)"/><polygon points="1209.91,223.75 1198.01,222.48 1199.32,230.57" fill="url(#m297)"/><polygon points="1209.91,223.75 1199.32,230.57 1210.71,228.67" fill="url(#m299)"/><polygon points="1210.71,228.67 1199.32,230.57 1202.95,253.04" fill="#0000ff"/><polygon points="1210.71,228.67 1202.95,253.04 1212.91,242.35" fill="#0000ff"/><polygon points="1212.91,242.35 1202.95,253.04 1206.57,275.52" fill="#0000ff"/><polygon points="1212.91,242.35 1206.57,275.52 1215.12,256.04" fill="#0000ff"/><polygon points="1215.12,256.04 1206.57,275.52 1210.20,298.00" fill="#0000ff"/><polygon points="1215.12,256.04 1210.20,298.00 1217.33,269.72" fill="#0000ff"/><polygon points="1217.33,269.72 1210.20,298.00 1213.83,320.47" fill="#0000ff"/><polygon points="1217.33,269.72 1213.83,320.47 1219.54,283.40" fill="#0000ff"/><polygon points="1219.54,283.40 1213.83,320.47 1217.46,342.95" fill="#0000ff"/><polygon points="1219.54,283.40 1217.46,342.95 1221.75,297.08" fill="#0000ff"/><polygon points="1192.80,190.15 1178.86,176.23 1180.67,187.48" fill="url(#m321)"/><polygon points="1192.80,190.15 1180.67,187.48 1194.10,198.23" fill="url(#m323)"/><polygon points="1194.10,198.23 1180.67,187.48 1182.49,198.72" fill="url(#m325)"/><polygon points="1194.10,198.23 1182.49,198.72 1195.40,206.32" fill="url(#m327)"/><polygon points="1195.40,206.32 1182.49,198.72 1184.30,209.97" fill="url(#m329)"/><polygon points="1195.40,206.32 1184.30,209.97 1196.71,214.40" fill="url(#m331)"/><polygon points="1196.71,214.40 1184.30,209.97 1186.12,221.21" fill="url(#m333)"/><polygon points="1196.71,214.40 1186.12,221.21 1198.01,222.48" fill="url(#m335)"/><polygon points="1198.01,222.48 1186.12,221.21 1187.93,232.46" fill="url(#m337)"/><polygon points="1198.01,222.48 1187.93,232.46 1199.32,230.57" fill="url(#m339)"/><polygon points="1199.32,230.57 1187.93,232.46 1192.98,263.73" fill="#0000ff"/><polygon points="1199.32,230.57 1192.98,263.73 1202.95,253.04" fill="#0000ff"/><polygon points="1202.95,253.04 1192.98,263.73 1198.03,295.00" fill="#0000ff"/><polygon points="1202.95,253.04 1198.03,295.00 1206.57,275.52" fill="#0000ff"/><polygon points="1206.57,275.52 1198.03,295.00 1203.07,326.28" fill="#0000ff"/><polygon points="1206.57,275.52 1203.07,326.28 1210.20,298.00" fill="#0000ff"/><polygon points="1210.20,298.00 1203.07,326.28 1208.12,357.55" fill="#0000ff"/><polygon points="1210.20,298.00 1208.12,357.55 1213.83,320.47" fill="#0000ff"/><polygon points="1213.83,320.47 1208.12,357.55 1213.17,388.82" fill="#0000ff"/><polygon points="1213.83,320.47 1213.17,388.82 1217.46,342.95" fill="#0000ff"/><polygon points="1178.86,176.23 1164.92,162.31 1167.24,176.72" fill="url(#m361)"/><polygon points="1178.86,176.23 1167.24,176.72 1180.67,187.48" fill="url(#m363)"/><polygon points="1180.67,187.48 1167.24,176.72 1169.57,191.13" fill="url(#m365)"/><polygon points="1180.67,187.48 1169.57,191.13 1182.49,198.72" fill="url(#m367)"/><polygon points="1182.49,198.72 1169.57,191.13 1171.89,205.54" fill="url(#m369)"/><polygon points="1182.49,198.72 1171.89,205.54 1184.30,209.97" fill="url(#m371)"/><polygon points="1184.30,209.97 1171.89,205.54 1174.22,219.94" fill="url(#m373)"/><polygon points="1184.30,209.97 1174.22,219.94 1186.12,221.21" fill="url(#m375)"/><polygon points="1186.12,221.21 1174.22,219.94 1176.54,234.35" fill="url(#m377)"/><polygon points="1186.12,221.21 1176.54,234.35 1187.93,232.46" fill="url(#m379)"/><polygon points="1187.93,232.46 1176.54,234.35 1183.01,274.42" fill="#0000ff"/><polygon points="1187.93,232.46 1183.01,274.42 1192.98,263.73" fill="#0000ff"/><polygon points="1192.98,263.73 1183.01,274.42 1189.48,314.49" fill="#0000ff"/><polygon points="1192.98,263.73 1189.48,314.49 1198.03,295.00" fill="#0000ff"/><polygon points="1198.03,295.00 1189.48,314.49 1195.95,354.56" fill="#0000ff"/><polygon points="1198.03,295.00 1195.95,354.56 1203.07,326.28" fill="#0000ff"/><polygon points="1203.07,326.28 1195.95,354.56 1202.41,394.63" fill="#0000ff"/><polygon points="1203.07,326.28 1202.41,394.63 1208.12,357.55" fill="#0000ff"/><polygon points="1208.12,357.55 1202.41,394.63 1208.88,434.69" fill="#0000ff"/><polygon points="1208.12,357.55 1208.88,434.69 1213.17,388.82" fill="#0000ff"/><polygon points="1164.92,162.31 1150.97,148.39 1153.81,165.96" fill="url(#m401)"/><polygon points="1164.92,162.31 1153.81,165.96 1167.24,176.72" fill="url(#m403)"/><polygon points="1167.24,176.72 1153.81,165.96 1156.65,183.53" fill="url(#m405)"/><polygon points="1167.24,176.72 1156.65,183.53 1169.57,191.13" fill="url(#m407)"/><polygon points="1169.57,191.13 1156.65,183.53 1159.48,201.10" fill="url(#m409)"/><polygon points="1169.57,191.13 1159.48,201.10 1171.89,205.54" fill="url(#m411)"/><polygon points="1171.89,205.54 1159.48,201.10 1162.32,218.67" fill="url(#m413)"/><polygon points="1171.89,205.54 1162.32,218.67 1174.22,219.94" fill="url(#m415)"/><polygon points="1174.22,219.94 1162.32,218.67 1165.16,236.25" fill="url(#m417)"/><polygon points="1174.22,219.94 1165.16,236.25 1176.54,234.35" fill="url(#m419)"/><polygon points="1176.54,234.35 1165.16,236.25 1173.04,285.11" fill="#0000ff"/><polygon points="1176.54,234.35 1173.04,285.11 1183.01,274.42" fill="#0000ff"/><polygon points="1183.01,274.42 1173.04,285.11 1180.93,333.97" fill="#0000ff"/><polygon points="1183.01,274.42 1180.93,333.97 1189.48,314.49" fill="#0000ff"/><polygon points="1189.48,314.49 1180.93,333.97 1188.82,382.84" fill="#0000ff"/><polygon points="1189.48,314.49 1188.82,382.84 1195.95,354.56" fill="#0000ff"/><polygon points="1195.95,354.56 1188.82,382.84 1196.70,431.70" fill="#0000ff"/><polygon points="1195.95,354.56 1196.70,431.70 1202.41,394.63" fill="#0000ff"/><polygon points="1202.41,394.63 1196.70,431.70 1204.59,480.56" fill="#0000ff"/><polygon points="1202.41,394.63 1204.59,480.56 1208.88,434.69" fill="#0000ff"/><polygon points="1228.42,225.73 1225.56,256.31 1228.87,252.92" fill="#0000ff"/><polygon points="1228.42,225.73 1228.87,252.92 1232.18,249.53" fill="#0000ff"/><polygon points="1228.42,225.73 1232.18,249.53 1235.49,246.15" fill="#0000ff"/><polygon points="1228.42,225.73 1235.49,246.15 1238.80,242.76" fill="#0000ff"/><polygon points="1228.42,225.73 1238.80,242.76 1242.11,239.38" fill="#0000ff"/><polygon points="1228.42,225.73 1242.11,239.38 1245.83,235.57" fill="url(#m451)"/><polygon points="1228.42,225.73 1245.83,235.57 1249.55,231.76" fill="url(#m453)"/><polygon points="1228.42,225.73 1249.55,231.76 1253.26,227.96" fill="url(#m455)"/><polygon points="1228.42,225.73 1253.26,227.96 1256.98,224.15" fill="url(#m457)"/><polygon points="1228.42,225.73 1256.98,224.15 1260.70,220.35" fill="url(#m459)"/><polygon points="1225.56,256.31 1221.75,297.08 1229.47,289.18" fill="#0000ff"/><polygon points="1225.56,256.31 1229.47,289.18 1228.87,252.92" fill="#0000ff"/><polygon points="1228.87,252.92 1229.47,289.18 1237.19,281.28" fill="#0000ff"/><polygon points="1228.87,252.92 1237.19,281.28 1232.18,249.53" fill="#0000ff"/><polygon points="1232.18,249.53 1237.19,281.28 1244.91,273.38" fill="#0000ff"/><polygon points="1232.18,249.53 1244.91,273.38 1235.49,246.15" fill="#0000ff"/><polygon points="1235.49,246.15 1244.91,273.38 1252.63,265.48" fill="#0000ff"/><polygon points="1235.49,246.15 1252.63,265.48 1238.80,242.76" fill="#0000ff"/><polygon points="1238.80,242.76 1252.63,265.48 1260.36,257.58" fill="#0000ff"/><polygon points="1238.80,242.76 1260.36,257.58 1242.11,239.38" fill="#0000ff"/><polygon points="1242.11,239.38 1260.36,257.58 1269.03,248.70" fill="url(#m481)"/><polygon points="1242.11,239.38 1269.03,248.70 1245.83,235.57" fill="url(#m483)"/><polygon points="1245.83,235.57 1269.03,248.70 1277.71,239.82" fill="url(#m485)"/><polygon points="1245.83,235.57 1277.71,239.82 1249.55,231.76" fill="url(#m487)"/><polygon points="1249.55,231.76 1277.71,239.82 1286.39,230.93" fill="url(#m489)"/><polygon points="1249.55,231.76 1286.39,230.93 1253.26,227.96" fill="url(#m491)"/><polygon points="1253.26,227.96 1286.39,230.93 1295.07,222.05" fill="url(#m493)"/><polygon points="1253.26,227.96 1295.07,222.05 1256.98,224.15" fill="url(#m495)"/><polygon points="1256.98,224.15 1295.07,222.05 1303.75,213.17" fill="url(#m497)"/><polygon points="1256.98,224.15 1303.75,213.17 1260.70,220.35" fill="url(#m499)"/><polygon points="1221.75,297.08 1217.46,342.95 1230.14,329.97" fill="#0000ff"/><polygon points="1221.75,297.08 1230.14,329.97 1229.47,289.18" fill="#0000ff"/><polygon points="1229.47,289.18 1230.14,329.97 1242.83,316.99" fill="#0000ff"/><polygon points="1229.47,289.18 1242.83,316.99 1237.19,281.28" fill="#0000ff"/><polygon points="1237.19,281.28 1242.83,316.99 1255.52,304.01" fill="#0000ff"/><polygon points="1237.19,281.28 1255.52,304.01 1244.91,273.38" fill="#0000ff"/><polygon points="1244.91,273.38 1255.52,304.01 1268.20,291.03" fill="#0000ff"/><polygon points="1244.91,273.38 1268.20,291.03 1252.63,265.48" fill="#0000ff"/><polygon points="1252.63,265.48 1268.20,291.03 1280.89,278.05" fill="#0000ff"/><polygon points="1252.63,265.48 1280.89,278.05 1260.36,257.58" fill="#0000ff"/><polygon points="1260.36,257.58 1280.89,278.05 1295.14,263.46" fill="url(#m521)"/><polygon points="1260.36,257.58 1295.14,263.46 1269.03,248.70" fill="url(#m523)"/><polygon points="1269.03,248.70 1295.14,263.46 1309.40,248.87" fill="url(#m525)"/><polygon points="1269.03,248.70 1309.40,248.87 1277.71,239.82" fill="url(#m527)"/><polygon points="1277.71,239.82 1309.40,248.87 1323.66,234.28" fill="url(#m529)"/><polygon points="1277.71,239.82 1323.66,234.28 1286.39,230.93" fill="url(#m531)"/><polygon points="1286.39,230.93 1323.66,234.28 1337.92,219.69" fill="url(#m533)"/><polygon points="1286.39,230.93 1337.92,219.69 1295.07,222.05" fill="url(#m535)"/><polygon points="1295.07,222.05 1337.92,219.69 1352.18,205.11" fill="url(#m537)"/><polygon points="1295.07,222.05 1352.18,205.11 1303.75,213.17" fill="url(#m539)"/><polygon points="1217.46,342.95 1213.17,388.82 1230.82,370.76" fill="#0000ff"/><polygon points="1217.46,342.95 1230.82,370.76 1230.14,329.97" fill="#0000ff"/><polygon points="1230.14,329.97 1230.82,370.76 1248.47,352.70" fill="#0000ff"/><polygon points="1230.14,329.97 1248.47,352.70 1242.83,316.99" fill="#0000ff"/><polygon points="1242.83,316.99 1248.47,352.70 1266.12,334.64" fill="#0000ff"/><polygon points="1242.83,316.99 1266.12,334.64 1255.52,304.01" fill="#0000ff"/><polygon points="1255.52,304.01 1266.12,334.64 1283.77,316.58" fill="#0000ff"/><polygon points="1255.52,304.01 1283.77,316.58 1268.20,291.03" fill="#0000ff"/><polygon points="1268.20,291.03 1283.77,316.58 1301.42,298.53" fill="#0000ff"/><polygon points="1268.20,291.03 1301.42,298.53 1280.89,278.05" fill="#0000ff"/><polygon points="1280.89,278.05 1301.42,298.53 1321.25,278.23" fill="url(#m561)"/><polygon points="1280.89,278.05 1321.25,278.23 1295.14,263.46" fill="url(#m563)"/><polygon points="1295.14,263.46 1321.25,278.23 1341.09,257.93" fill="url(#m565)"/><polygon points="1295.14,263.46 1341.09,257.93 1309.40,248.87" fill="url(#m567)"/><polygon points="1309.40,248.87 1341.09,257.93 1360.93,237.63" fill="url(#m569)"/><polygon points="1309.40,248.87 1360.93,237.63 1323.66,234.28" fill="url(#m571)"/><polygon points="1323.66,234.28 1360.93,237.63 1380.76,217.33" fill="url(#m573)"/><polygon points="1323.66,234.28 1380.76,217.33 1337.92,219.69" fill="url(#m575)"/><polygon points="1337.92,219.69 1380.76,217.33 1400.60,197.04" fill="url(#m577)"/><polygon points="1337.92,219.69 1400.60,197.04 1352.18,205.11" fill="url(#m579)"/><polygon points="1213.17,388.82 1208.88,434.69 1231.49,411.55" fill="#0000ff"/><polygon points="1213.17,388.82 1231.49,411.55 1230.82,370.76" fill="#0000ff"/><polygon points="1230.82,370.76 1231.49,411.55 1254.11,388.42" fill="#0000ff"/><polygon points="1230.82,370.76 1254.11,388.42 1248.47,352.70" fill="#0000ff"/><polygon points="1248.47,352.70 1254.11,388.42 1276.72,365.28" fill="#0000ff"/><polygon points="1248.47,352.70 1276.72,365.28 1266.12,334.64" fill="#0000ff"/><polygon points="1266.12,334.64 1276.72,365.28 1299.33,342.14" fill="#0000ff"/><polygon points="1266.12,334.64 1299.33,342.14 1283.77,316.58" fill="#0000ff"/><polygon points="1283.77,316.58 1299.33,342.14 1321.95,319.00" fill="#0000ff"/><polygon points="1283.77,316.58 1321.95,319.00 1301.42,298.53" fill="#0000ff"/><polygon points="1301.42,298.53 1321.95,319.00 1347.36,292.99" fill="url(#m601)"/><polygon points="1301.42,298.53 1347.36,292.99 1321.25,278.23" fill="url(#m603)"/><polygon points="1321.25,278.23 1347.36,292.99 1372.78,266.99" fill="url(#m605)"/><polygon points="1321.25,278.23 1372.78,266.99 1341.09,257.93" fill="url(#m607)"/><polygon points="1341.09,257.93 1372.78,266.99 1398.20,240.98" fill="url(#m609)"/><polygon points="1341.09,257.93 1398.20,240.98 1360.93,237.63" fill="url(#m611)"/><polygon points="1360.93,237.63 1398.20,240.98 1423.61,214.97" fill="url(#m613)"/><polygon points="1360.93,237.63 1423.61,214.97 1380.76,217.33" fill="url(#m615)"/><polygon points="1380.76,217.33 1423.61,214.97 1449.03,188.97" fill="url(#m617)"/><polygon points="1380.76,217.33 1449.03,188.97 1400.60,197.04" fill="url(#m619)"/><polygon points="1208.88,434.69 1204.59,480.56 1232.17,452.35" fill="#0000ff"/><polygon points="1208.88,434.69 1232.17,452.35 1231.49,411.55" fill="#0000ff"/><polygon points="1231.49,411.55 1232.17,452.35 1259.75,424.13" fill="#0000ff"/><polygon points="1231.49,411.55 1259.75,424.13 1254.11,388.42" fill="#0000ff"/><polygon points="1254.11,388.42 1259.75,424.13 1287.32,395.91" fill="#0000ff"/><polygon points="1254.11,388.42 1287.32,395.91 1276.72,365.28" fill="#0000ff"/><polygon points="1276.72,365.28 1287.32,395.91 1314.90,367.69" fill="#0000ff"/><polygon points="1276.72,365.28 1314.90,367.69 1299.33,342.14" fill="#0000ff"/><polygon points="1299.33,342.14 1314.90,367.69 1342.48,339.48" fill="#0000ff"/><polygon points="1299.33,342.14 1342.48,339.48 1321.95,319.00" fill="#0000ff"/><polygon points="1321.95,319.00 1342.48,339.48 1373.47,307.76" fill="url(#m641)"/><polygon points="1321.95,319.00 1373.47,307.76 1347.36,292.99" fill="url(#m643)"/><polygon points="1347.36,292.99 1373.47,307.76 1404.47,276.04" fill="url(#m645)"/><polygon points="1347.36,292.99 1404.47,276.04 1372.78,266.99" fill="url(#m647)"/><polygon points="1372.78,266.99 1404.47,276.04 1435.46,244.33" fill="url(#m649)"/><polygon points="1372.78,266.99 1435.46,244.33 1398.20,240.98" fill="url(#m651)"/><polygon points="1398.20,240.98 1435.46,244.33 1466.46,212.61" fill="url(#m653)"/><polygon points="1398.20,240.98 1466.46,212.61 1423.61,214.97" fill="url(#m655)"/><polygon points="1423.61,214.97 1466.46,212.61 1497.45,180.90" fill="url(#m657)"/><polygon points="1423.61,214.97 1497.45,180.90 1449.03,188.97" fill="url(#m659)"/></g></g></g></g>
<rect x="1017.1" y="117.9" width="641.0" height="1.4" fill="#8f8f8f"/>
<rect x="1017.1" y="609.6" width="641.0" height="1.4" fill="#8f8f8f"/>
<rect x="1017.1" y="117.9" width="1.4" height="498.7" fill="#8f8f8f"/>
<rect x="1656.7" y="117.9" width="1.4" height="493.1" fill="#8f8f8f"/>
<rect x="1012" y="609.6" width="6" height="1.4" fill="#e0e0e0"/>
<text x="1011.0" y="616.9" font-size="14.5" text-anchor="end" fill="#d8d8d8">0</text>
<rect x="1012" y="568.7" width="6" height="1.4" fill="#c4c4c4"/>
<text x="1011.0" y="576.0" font-size="14.5" text-anchor="end" fill="#d8d8d8">0,05</text>
<rect x="1012" y="527.8" width="6" height="1.4" fill="#c4c4c4"/>
<text x="1011.0" y="535.1" font-size="14.5" text-anchor="end" fill="#d8d8d8">0,1</text>
<rect x="1012" y="486.9" width="6" height="1.4" fill="#c4c4c4"/>
<text x="1011.0" y="494.2" font-size="14.5" text-anchor="end" fill="#d8d8d8">0,15</text>
<rect x="1012" y="446.0" width="6" height="1.4" fill="#c4c4c4"/>
<text x="1011.0" y="453.3" font-size="14.5" text-anchor="end" fill="#d8d8d8">0,2</text>
<rect x="1012" y="405.1" width="6" height="1.4" fill="#c4c4c4"/>
<text x="1011.0" y="412.4" font-size="14.5" text-anchor="end" fill="#d8d8d8">0,25</text>
<rect x="1012" y="364.2" width="6" height="1.4" fill="#c4c4c4"/>
<text x="1011.0" y="371.5" font-size="14.5" text-anchor="end" fill="#d8d8d8">0,3</text>
<rect x="1012" y="323.3" width="6" height="1.4" fill="#c4c4c4"/>
<text x="1011.0" y="330.6" font-size="14.5" text-anchor="end" fill="#d8d8d8">0,35</text>
<rect x="1012" y="282.4" width="6" height="1.4" fill="#c4c4c4"/>
<text x="1011.0" y="289.7" font-size="14.5" text-anchor="end" fill="#d8d8d8">0,4</text>
<rect x="1012" y="241.5" width="6" height="1.4" fill="#c4c4c4"/>
<text x="1011.0" y="248.8" font-size="14.5" text-anchor="end" fill="#d8d8d8">0,45</text>
<rect x="1012" y="200.6" width="6" height="1.4" fill="#c4c4c4"/>
<text x="1011.0" y="207.9" font-size="14.5" text-anchor="end" fill="#d8d8d8">0,5</text>
<rect x="1012" y="159.7" width="6" height="1.4" fill="#c4c4c4"/>
<text x="1011.0" y="167.0" font-size="14.5" text-anchor="end" fill="#d8d8d8">0,55</text>
<rect x="1017.1" y="610.3" width="1.4" height="6" fill="#e0e0e0"/>
<text x="1017.8" y="633.0" font-size="14.5" text-anchor="middle" fill="#d8d8d8">0</text>
<rect x="1070.3" y="610.3" width="1.4" height="6" fill="#c4c4c4"/>
<text x="1071.0" y="633.0" font-size="14.5" text-anchor="middle" fill="#d8d8d8">0,05</text>
<rect x="1123.5" y="610.3" width="1.4" height="6" fill="#c4c4c4"/>
<text x="1124.2" y="633.0" font-size="14.5" text-anchor="middle" fill="#d8d8d8">0,1</text>
<rect x="1176.6" y="610.3" width="1.4" height="6" fill="#c4c4c4"/>
<text x="1177.3" y="633.0" font-size="14.5" text-anchor="middle" fill="#d8d8d8">0,15</text>
<rect x="1229.8" y="610.3" width="1.4" height="6" fill="#c4c4c4"/>
<text x="1230.5" y="633.0" font-size="14.5" text-anchor="middle" fill="#d8d8d8">0,2</text>
<rect x="1283.0" y="610.3" width="1.4" height="6" fill="#c4c4c4"/>
<text x="1283.7" y="633.0" font-size="14.5" text-anchor="middle" fill="#d8d8d8">0,25</text>
<rect x="1336.2" y="610.3" width="1.4" height="6" fill="#c4c4c4"/>
<text x="1336.9" y="633.0" font-size="14.5" text-anchor="middle" fill="#d8d8d8">0,3</text>
<rect x="1389.4" y="610.3" width="1.4" height="6" fill="#c4c4c4"/>
<text x="1390.1" y="633.0" font-size="14.5" text-anchor="middle" fill="#d8d8d8">0,35</text>
<rect x="1442.5" y="610.3" width="1.4" height="6" fill="#c4c4c4"/>
<text x="1443.2" y="633.0" font-size="14.5" text-anchor="middle" fill="#d8d8d8">0,4</text>
<rect x="1495.7" y="610.3" width="1.4" height="6" fill="#c4c4c4"/>
<text x="1496.4" y="633.0" font-size="14.5" text-anchor="middle" fill="#d8d8d8">0,45</text>
<rect x="1548.9" y="610.3" width="1.4" height="6" fill="#c4c4c4"/>
<text x="1549.6" y="633.0" font-size="14.5" text-anchor="middle" fill="#d8d8d8">0,5</text>
<rect x="1602.1" y="610.3" width="1.4" height="6" fill="#c4c4c4"/>
<text x="1602.8" y="633.0" font-size="14.5" text-anchor="middle" fill="#d8d8d8">0,55</text>
<g clip-path="url(#plotclip)"><rect x="1143.8" y="141.6" width="13.6" height="13.6" fill="#fff" fill-opacity="0.12" stroke="#fff" stroke-opacity="0.92" stroke-width="1.6"/><rect x="1155.8" y="153.6" width="13.6" height="13.6" fill="#fff" fill-opacity="0.12" stroke="#fff" stroke-opacity="0.92" stroke-width="1.6"/><rect x="1167.8" y="165.4" width="13.6" height="13.6" fill="#fff" fill-opacity="0.12" stroke="#fff" stroke-opacity="0.92" stroke-width="1.6"/><rect x="1182.7" y="180.5" width="13.6" height="13.6" fill="#fff" fill-opacity="0.12" stroke="#fff" stroke-opacity="0.92" stroke-width="1.6"/><rect x="1200.8" y="197.7" width="13.6" height="13.6" fill="#fff" fill-opacity="0.12" stroke="#fff" stroke-opacity="0.92" stroke-width="1.6"/><rect x="1227.6" y="149.6" width="13.6" height="13.6" fill="#fff" fill-opacity="0.12" stroke="#fff" stroke-opacity="0.92" stroke-width="1.6"/><rect x="1226.7" y="162.0" width="13.6" height="13.6" fill="#fff" fill-opacity="0.12" stroke="#fff" stroke-opacity="0.92" stroke-width="1.6"/><rect x="1226.0" y="174.2" width="13.6" height="13.6" fill="#fff" fill-opacity="0.12" stroke="#fff" stroke-opacity="0.92" stroke-width="1.6"/><rect x="1225.2" y="187.2" width="13.6" height="13.6" fill="#fff" fill-opacity="0.12" stroke="#fff" stroke-opacity="0.92" stroke-width="1.6"/><rect x="1223.2" y="202.2" width="13.6" height="13.6" fill="#fff" fill-opacity="0.12" stroke="#fff" stroke-opacity="0.92" stroke-width="1.6"/><rect x="1158.4" y="229.8" width="13.6" height="13.6" fill="#fff" fill-opacity="0.12" stroke="#fff" stroke-opacity="0.92" stroke-width="1.6"/><rect x="1170.7" y="227.5" width="13.6" height="13.6" fill="#fff" fill-opacity="0.12" stroke="#fff" stroke-opacity="0.92" stroke-width="1.6"/><rect x="1182.7" y="225.5" width="13.6" height="13.6" fill="#fff" fill-opacity="0.12" stroke="#fff" stroke-opacity="0.92" stroke-width="1.6"/><rect x="1195.9" y="223.5" width="13.6" height="13.6" fill="#fff" fill-opacity="0.12" stroke="#fff" stroke-opacity="0.92" stroke-width="1.6"/><rect x="1208.6" y="221.5" width="13.6" height="13.6" fill="#fff" fill-opacity="0.12" stroke="#fff" stroke-opacity="0.92" stroke-width="1.6"/><rect x="1238.7" y="235.7" width="13.6" height="13.6" fill="#fff" fill-opacity="0.12" stroke="#fff" stroke-opacity="0.92" stroke-width="1.6"/><rect x="1257.7" y="254.6" width="13.6" height="13.6" fill="#fff" fill-opacity="0.12" stroke="#fff" stroke-opacity="0.92" stroke-width="1.6"/><rect x="1276.8" y="274.6" width="13.6" height="13.6" fill="#fff" fill-opacity="0.12" stroke="#fff" stroke-opacity="0.92" stroke-width="1.6"/><rect x="1302.7" y="300.8" width="13.6" height="13.6" fill="#fff" fill-opacity="0.12" stroke="#fff" stroke-opacity="0.92" stroke-width="1.6"/><rect x="1335.7" y="331.6" width="13.6" height="13.6" fill="#fff" fill-opacity="0.12" stroke="#fff" stroke-opacity="0.92" stroke-width="1.6"/><rect x="1218.2" y="248.7" width="13.6" height="13.6" fill="#fff" fill-opacity="0.12" stroke="#fff" stroke-opacity="0.92" stroke-width="1.6"/><rect x="1215.7" y="285.6" width="13.6" height="13.6" fill="#fff" fill-opacity="0.12" stroke="#fff" stroke-opacity="0.92" stroke-width="1.6"/><rect x="1211.6" y="330.8" width="13.6" height="13.6" fill="#fff" fill-opacity="0.12" stroke="#fff" stroke-opacity="0.92" stroke-width="1.6"/><rect x="1205.8" y="387.6" width="13.6" height="13.6" fill="#fff" fill-opacity="0.12" stroke="#fff" stroke-opacity="0.92" stroke-width="1.6"/><rect x="1197.7" y="473.6" width="13.6" height="13.6" fill="#fff" fill-opacity="0.12" stroke="#fff" stroke-opacity="0.92" stroke-width="1.6"/><rect x="1269.7" y="210.6" width="13.6" height="13.6" fill="#fff" fill-opacity="0.12" stroke="#fff" stroke-opacity="0.92" stroke-width="1.6"/><rect x="1322.8" y="201.7" width="13.6" height="13.6" fill="#fff" fill-opacity="0.12" stroke="#fff" stroke-opacity="0.92" stroke-width="1.6"/><rect x="1371.6" y="194.6" width="13.6" height="13.6" fill="#fff" fill-opacity="0.12" stroke="#fff" stroke-opacity="0.92" stroke-width="1.6"/><rect x="1426.8" y="184.6" width="13.6" height="13.6" fill="#fff" fill-opacity="0.12" stroke="#fff" stroke-opacity="0.92" stroke-width="1.6"/><rect x="1490.6" y="174.2" width="13.6" height="13.6" fill="#fff" fill-opacity="0.12" stroke="#fff" stroke-opacity="0.92" stroke-width="1.6"/><rect x="1220.7" y="218.7" width="13.6" height="13.6" fill="none" stroke="#000" stroke-width="2"/><circle cx="1149.1" cy="148.1" r="4.0" fill="#10a010" stroke="#000" stroke-width="1.3"/><circle cx="1161.0" cy="160.4" r="4.0" fill="#5fa05f" stroke="#000" stroke-width="1.3"/><circle cx="1174.4" cy="173.7" r="4.0" fill="#78a478" stroke="#000" stroke-width="1.3"/><circle cx="1188.0" cy="188.9" r="4.0" fill="#8eac8e" stroke="#000" stroke-width="1.3"/><circle cx="1207.4" cy="207.0" r="4.0" fill="#a0b0a0" stroke="#000" stroke-width="1.3"/><circle cx="1235.8" cy="156.5" r="4.0" fill="#c8c020" stroke="#000" stroke-width="1.3"/><circle cx="1234.3" cy="168.8" r="4.0" fill="#bcbc5c" stroke="#000" stroke-width="1.3"/><circle cx="1232.8" cy="180.8" r="4.0" fill="#c0c078" stroke="#000" stroke-width="1.3"/><circle cx="1232.2" cy="194.3" r="4.0" fill="#b8b88a" stroke="#000" stroke-width="1.3"/><circle cx="1230.4" cy="210.9" r="4.0" fill="#b8b8a0" stroke="#000" stroke-width="1.3"/><circle cx="1163.9" cy="240.9" r="4.0" fill="#38b0c0" stroke="#000" stroke-width="1.3"/><circle cx="1177.5" cy="238.0" r="4.0" fill="#6cb4bc" stroke="#000" stroke-width="1.3"/><circle cx="1188.0" cy="235.4" r="4.0" fill="#86b6b6" stroke="#000" stroke-width="1.3"/><circle cx="1201.9" cy="233.9" r="4.0" fill="#98b8b8" stroke="#000" stroke-width="1.3"/><circle cx="1213.8" cy="231.6" r="4.0" fill="#a8b8b8" stroke="#000" stroke-width="1.3"/><circle cx="1243.8" cy="246.2" r="4.0" fill="#b8a8b8" stroke="#000" stroke-width="1.3"/><circle cx="1264.5" cy="266.8" r="4.0" fill="#c090c0" stroke="#000" stroke-width="1.3"/><circle cx="1283.6" cy="285.8" r="4.0" fill="#c480c4" stroke="#000" stroke-width="1.3"/><circle cx="1309.5" cy="312.9" r="4.0" fill="#c070c0" stroke="#000" stroke-width="1.3"/><circle cx="1339.6" cy="344.3" r="4.0" fill="#a82aa8" stroke="#000" stroke-width="1.3"/><circle cx="1224.9" cy="261.4" r="4.0" fill="#9898c0" stroke="#000" stroke-width="1.3"/><circle cx="1220.8" cy="299.5" r="4.0" fill="#9090c0" stroke="#000" stroke-width="1.3"/><circle cx="1215.4" cy="345.5" r="4.0" fill="#8080c0" stroke="#000" stroke-width="1.3"/><circle cx="1210.0" cy="405.6" r="4.0" fill="#6464c0" stroke="#000" stroke-width="1.3"/><circle cx="1200.6" cy="480.6" r="4.0" fill="#2020b8" stroke="#000" stroke-width="1.3"/><circle cx="1277.8" cy="220.3" r="4.0" fill="#c09090" stroke="#000" stroke-width="1.3"/><circle cx="1332.5" cy="210.7" r="4.0" fill="#c07070" stroke="#000" stroke-width="1.3"/><circle cx="1384.5" cy="201.2" r="4.0" fill="#c05a5a" stroke="#000" stroke-width="1.3"/><circle cx="1443.0" cy="190.5" r="4.0" fill="#c04848" stroke="#000" stroke-width="1.3"/><circle cx="1506.8" cy="179.5" r="4.0" fill="#c01010" stroke="#000" stroke-width="1.3"/><circle cx="1227.7" cy="228.3" r="4.0" fill="#fff" stroke="#000" stroke-width="1.3"/></g>
<rect x="1438.5" y="457" width="213" height="146" fill="#8c8c8c"/>
<polygon points="1440.5,459 1649.5,459 1649.5,586.5 1440.5,474" fill="url(#insOut)"/>
<polygon points="1440.5,474 1649.5,586.5 1649.5,601 1440.5,601" fill="url(#insIn)"/>
<rect x="1537.5" y="522.6" width="13.5" height="13.5" fill="none" stroke="#fff" stroke-opacity="0.9" stroke-width="2"/>
<circle cx="1552.6" cy="529.8" r="4.6" fill="#c8c010" stroke="#000" stroke-width="1.4"/>
<text x="166.4" y="677.8" font-size="29.5" text-anchor="middle" fill="#f2f2f2" textLength="232.0" lengthAdjust="spacingAndGlyphs" stroke="#f2f2f2" stroke-width="0.6">Avg dE2000: 1,69</text>
<text x="167.3" y="718.6" font-size="29.5" text-anchor="middle" fill="#f2f2f2" textLength="224.8" lengthAdjust="spacingAndGlyphs" stroke="#f2f2f2" stroke-width="0.6">Max dE2000: 2,8</text>
<text x="15.3" y="765.9" font-size="28" fill="#f2f2f2" textLength="217.6" lengthAdjust="spacingAndGlyphs" stroke="#f2f2f2" stroke-width="0.6">Current Reading</text>
<text x="14.4" y="802.0" font-size="23.5" fill="#f2f2f2" textLength="102.5" lengthAdjust="spacingAndGlyphs" stroke="#f2f2f2" stroke-width="0.6">x: 0,4214</text>
<text x="170.9" y="802.0" font-size="23.5" fill="#f2f2f2" textLength="101.6" lengthAdjust="spacingAndGlyphs" stroke="#f2f2f2" stroke-width="0.6">y: 0,5055</text>
<text x="14.4" y="842.8" font-size="23.5" fill="#f2f2f2" textLength="95.3" lengthAdjust="spacingAndGlyphs" stroke="#f2f2f2" stroke-width="0.6">fL: 84,72</text>
<text x="14.4" y="876.5" font-size="23.5" fill="#f2f2f2" textLength="158.3" lengthAdjust="spacingAndGlyphs" stroke="#f2f2f2" stroke-width="0.6">cd/m²: 290,28</text>
<text x="466.4" y="679.7" font-size="13" text-anchor="middle" fill="#d8d8d8" textLength="83.0" lengthAdjust="spacingAndGlyphs">RGB Balance</text>
<rect x="356.8" y="684.8" width="249.4" height="180.6" fill="#242424"/>
<rect x="356.8" y="702.3" width="249.4" height="1.3" fill="#8f8f8f"/>
<rect x="351" y="702.3" width="6" height="1.3" fill="#8f8f8f"/>
<text x="349.4" y="707.5" font-size="13" text-anchor="end" fill="#d8d8d8">104</text>
<rect x="356.8" y="738.4" width="249.4" height="1.3" fill="#8f8f8f"/>
<rect x="351" y="738.4" width="6" height="1.3" fill="#8f8f8f"/>
<text x="349.4" y="743.6" font-size="13" text-anchor="end" fill="#d8d8d8">102</text>
<rect x="356.8" y="774.5" width="249.4" height="1.3" fill="#8f8f8f"/>
<rect x="351" y="774.5" width="6" height="1.3" fill="#8f8f8f"/>
<text x="349.4" y="779.7" font-size="13" text-anchor="end" fill="#d8d8d8">100</text>
<rect x="356.8" y="810.6" width="249.4" height="1.3" fill="#8f8f8f"/>
<rect x="351" y="810.6" width="6" height="1.3" fill="#8f8f8f"/>
<text x="349.4" y="815.8" font-size="13" text-anchor="end" fill="#d8d8d8">98</text>
<rect x="356.8" y="846.7" width="249.4" height="1.3" fill="#8f8f8f"/>
<rect x="351" y="846.7" width="6" height="1.3" fill="#8f8f8f"/>
<text x="349.4" y="851.9" font-size="13" text-anchor="end" fill="#d8d8d8">96</text>
<rect x="380.2" y="741.6" width="66.9" height="123.8" fill="#000"/>
<rect x="382.0" y="743.2" width="64.1" height="122.2" fill="url(#rbR)"/>
<rect x="447.1" y="751.3" width="65.9" height="114.1" fill="#000"/>
<rect x="448.9" y="752.9" width="63.1" height="112.5" fill="url(#rbG)"/>
<rect x="513.0" y="813.0" width="67.2" height="52.4" fill="#000"/>
<rect x="514.8" y="814.6" width="64.4" height="50.8" fill="url(#rbB)"/>
<rect x="356.1" y="684.1" width="250.8" height="1.4" fill="#8f8f8f"/>
<rect x="356.1" y="864.7" width="250.8" height="1.4" fill="#8f8f8f"/>
<rect x="356.1" y="684.1" width="1.4" height="187.6" fill="#8f8f8f"/>
<rect x="605.5" y="684.1" width="1.4" height="187.6" fill="#8f8f8f"/>
<text x="481.6" y="881.6" font-size="13" text-anchor="middle" fill="#d8d8d8">100%</text>
<rect x="627.0" y="653.4" width="729.6" height="235.1" fill="#000"/>
<rect x="628.5" y="654.7" width="726.6" height="27.9" fill="url(#thd)"/>
<text transform="translate(876.0,674) scale(1.33,1)" font-size="15.3" stroke="#f0f0f0" stroke-width="0.55" text-anchor="middle" fill="#f0f0f0">20%</text>
<text transform="translate(982.0,674) scale(1.33,1)" font-size="15.3" stroke="#f0f0f0" stroke-width="0.55" text-anchor="middle" fill="#f0f0f0">40%</text>
<text transform="translate(1088.0,674) scale(1.33,1)" font-size="15.3" stroke="#f0f0f0" stroke-width="0.55" text-anchor="middle" fill="#f0f0f0">60%</text>
<text transform="translate(1194.0,674) scale(1.33,1)" font-size="15.3" stroke="#f0f0f0" stroke-width="0.55" text-anchor="middle" fill="#f0f0f0">80%</text>
<text transform="translate(1300.0,674) scale(1.33,1)" font-size="15.3" stroke="#f0f0f0" stroke-width="0.55" text-anchor="middle" fill="#f0f0f0">100%</text>
<rect x="628.5" y="682.6" width="726.6" height="25.9" fill="#3c3c3c"/>
<text transform="translate(646,701.5) scale(1.43,1)" font-size="15.5" font-weight="bold" fill="#f4f4f4">x: CIE31</text>
<text transform="translate(829,701.5) scale(1.42,1)" font-size="15.6" fill="#f4f4f4">0,3311</text>
<text transform="translate(935,701.5) scale(1.42,1)" font-size="15.6" fill="#f4f4f4">0,3544</text>
<text transform="translate(1041,701.5) scale(1.42,1)" font-size="15.6" fill="#f4f4f4">0,3764</text>
<text transform="translate(1147,701.5) scale(1.42,1)" font-size="15.6" fill="#f4f4f4">0,3974</text>
<text transform="translate(1253,701.5) scale(1.42,1)" font-size="15.6" fill="#f4f4f4">0,4214</text>
<rect x="628.5" y="708.3" width="726.6" height="25.9" fill="#858585"/>
<text transform="translate(646,727.2) scale(1.43,1)" font-size="15.5" font-weight="bold" fill="#f4f4f4">y: CIE31</text>
<text transform="translate(829,727.2) scale(1.42,1)" font-size="15.6" fill="#f4f4f4">0,3590</text>
<text transform="translate(935,727.2) scale(1.42,1)" font-size="15.6" fill="#f4f4f4">0,3967</text>
<text transform="translate(1041,727.2) scale(1.42,1)" font-size="15.6" fill="#f4f4f4">0,4330</text>
<text transform="translate(1147,727.2) scale(1.42,1)" font-size="15.6" fill="#f4f4f4">0,4670</text>
<text transform="translate(1253,727.2) scale(1.42,1)" font-size="15.6" fill="#f4f4f4">0,5055</text>
<rect x="628.5" y="734.1" width="726.6" height="25.9" fill="#3c3c3c"/>
<text transform="translate(646,753.0) scale(1.43,1)" font-size="15.5" font-weight="bold" fill="#f4f4f4">Y</text>
<text transform="translate(829,753.0) scale(1.42,1)" font-size="15.6" fill="#f4f4f4">307,5835</text>
<text transform="translate(935,753.0) scale(1.42,1)" font-size="15.6" fill="#f4f4f4">301,7562</text>
<text transform="translate(1041,753.0) scale(1.42,1)" font-size="15.6" fill="#f4f4f4">297,2428</text>
<text transform="translate(1147,753.0) scale(1.42,1)" font-size="15.6" fill="#f4f4f4">293,6342</text>
<text transform="translate(1253,753.0) scale(1.42,1)" font-size="15.6" fill="#f4f4f4">290,2768</text>
<rect x="628.5" y="759.8" width="726.6" height="25.9" fill="#858585"/>
<text transform="translate(646,778.7) scale(1.43,1)" font-size="15.5" font-weight="bold" fill="#f4f4f4">Target x:CIE31</text>
<text transform="translate(829,778.7) scale(1.42,1)" font-size="15.6" fill="#f4f4f4">0,3344</text>
<text transform="translate(935,778.7) scale(1.42,1)" font-size="15.6" fill="#f4f4f4">0,3564</text>
<text transform="translate(1041,778.7) scale(1.42,1)" font-size="15.6" fill="#f4f4f4">0,3773</text>
<text transform="translate(1147,778.7) scale(1.42,1)" font-size="15.6" fill="#f4f4f4">0,3969</text>
<text transform="translate(1253,778.7) scale(1.42,1)" font-size="15.6" fill="#f4f4f4">0,4193</text>
<rect x="628.5" y="785.6" width="726.6" height="25.9" fill="#3c3c3c"/>
<text transform="translate(646,804.5) scale(1.43,1)" font-size="15.5" font-weight="bold" fill="#f4f4f4">Target y:CIE31</text>
<text transform="translate(829,804.5) scale(1.42,1)" font-size="15.6" fill="#f4f4f4">0,3648</text>
<text transform="translate(935,804.5) scale(1.42,1)" font-size="15.6" fill="#f4f4f4">0,4013</text>
<text transform="translate(1041,804.5) scale(1.42,1)" font-size="15.6" fill="#f4f4f4">0,4358</text>
<text transform="translate(1147,804.5) scale(1.42,1)" font-size="15.6" fill="#f4f4f4">0,4682</text>
<text transform="translate(1253,804.5) scale(1.42,1)" font-size="15.6" fill="#f4f4f4">0,5053</text>
<rect x="628.5" y="811.3" width="726.6" height="25.9" fill="#858585"/>
<text transform="translate(646,830.2) scale(1.43,1)" font-size="15.5" font-weight="bold" fill="#f4f4f4">Target Y</text>
<text transform="translate(829,830.2) scale(1.42,1)" font-size="15.6" fill="#f4f4f4">292,5746</text>
<text transform="translate(935,830.2) scale(1.42,1)" font-size="15.6" fill="#f4f4f4">287,4390</text>
<text transform="translate(1041,830.2) scale(1.42,1)" font-size="15.6" fill="#f4f4f4">283,4931</text>
<text transform="translate(1147,830.2) scale(1.42,1)" font-size="15.6" fill="#f4f4f4">280,3963</text>
<text transform="translate(1253,830.2) scale(1.42,1)" font-size="15.6" fill="#f4f4f4">277,4025</text>
<rect x="628.5" y="837.0" width="726.6" height="25.9" fill="#3c3c3c"/>
<text transform="translate(646,855.9) scale(1.43,1)" font-size="15.5" font-weight="bold" fill="#f4f4f4">ΔE 2000</text>
<text transform="translate(829,855.9) scale(1.42,1)" font-size="15.6" fill="#f4f4f4">1,7804</text>
<text transform="translate(935,855.9) scale(1.42,1)" font-size="15.6" fill="#f4f4f4">1,2434</text>
<text transform="translate(1041,855.9) scale(1.42,1)" font-size="15.6" fill="#f4f4f4">1,0702</text>
<text transform="translate(1147,855.9) scale(1.42,1)" font-size="15.6" fill="#f4f4f4">1,0608</text>
<text transform="translate(1253,855.9) scale(1.42,1)" font-size="15.6" fill="#f4f4f4">1,1565</text>
<rect x="628.5" y="862.8" width="726.6" height="25.9" fill="#858585"/>
<text transform="translate(646,881.7) scale(1.43,1)" font-size="15.5" font-weight="bold" fill="#f4f4f4">ΔE ITP</text>
<text transform="translate(829,881.7) scale(1.42,1)" font-size="15.6" fill="#f4f4f4">4,6846</text>
<text transform="translate(935,881.7) scale(1.42,1)" font-size="15.6" fill="#f4f4f4">4,2916</text>
<text transform="translate(1041,881.7) scale(1.42,1)" font-size="15.6" fill="#f4f4f4">3,8680</text>
<text transform="translate(1147,881.7) scale(1.42,1)" font-size="15.6" fill="#f4f4f4">3,5912</text>
<text transform="translate(1253,881.7) scale(1.42,1)" font-size="15.6" fill="#f4f4f4">3,8251</text>
<rect x="0" y="928" width="1668" height="77" fill="#2c2c2c"/>
<path d="M0.8,1006.0 V933.2 Q0.8,928.2 5.8,928.2 H51.4 Q56.4,928.2 56.4,933.2 V1006.0 Z" fill="url(#btn)"/>
<circle cx="28.2" cy="940.2" r="9.4" fill="url(#circ)"/>
<path d="M22.8,942.5 L28.2,936.6 L33.6,942.5 Z" fill="#2a2a2a"/>
<rect x="6.3" y="960.6" width="44" height="38.2" rx="5" fill="#ffff00" stroke="#b8b800" stroke-width="1"/>
<path d="M64.2,1006.0 V933.7 Q64.2,928.7 69.2,928.7 H245.8 Q250.8,928.7 250.8,933.7 V1006.0 Z" fill="url(#btn)"/>
<rect x="71.2" y="935.5" width="172.6" height="44.5" rx="5" fill="#c2c2a4"/>
<rect x="71.7" y="935.8" width="171.6" height="2" rx="1" fill="#000" fill-opacity="0.18"/>
<text x="157.5" y="998.7" font-size="13" text-anchor="middle" font-weight="bold" fill="#2e2e2e">20%</text>
<path d="M253.8,1006.0 V933.7 Q253.8,928.7 258.8,928.7 H435.4 Q440.4,928.7 440.4,933.7 V1006.0 Z" fill="url(#btn)"/>
<rect x="260.8" y="935.5" width="172.6" height="44.5" rx="5" fill="#c2c286"/>
<rect x="261.3" y="935.8" width="171.6" height="2" rx="1" fill="#000" fill-opacity="0.18"/>
<text x="347.1" y="998.7" font-size="13" text-anchor="middle" font-weight="bold" fill="#2e2e2e">40%</text>
<path d="M444.6,1006.0 V933.7 Q444.6,928.7 449.6,928.7 H626.2 Q631.2,928.7 631.2,933.7 V1006.0 Z" fill="url(#btn)"/>
<rect x="451.6" y="935.5" width="172.6" height="44.5" rx="5" fill="#c2c26a"/>
<rect x="452.1" y="935.8" width="171.6" height="2" rx="1" fill="#000" fill-opacity="0.18"/>
<text x="537.9" y="998.7" font-size="13" text-anchor="middle" font-weight="bold" fill="#2e2e2e">60%</text>
<path d="M634.3,1006.0 V933.7 Q634.3,928.7 639.3,928.7 H815.8 Q820.8,928.7 820.8,933.7 V1006.0 Z" fill="url(#btn)"/>
<rect x="641.3" y="935.5" width="172.5" height="44.5" rx="5" fill="#c2c04e"/>
<rect x="641.8" y="935.8" width="171.5" height="2" rx="1" fill="#000" fill-opacity="0.18"/>
<text x="727.5" y="998.7" font-size="13" text-anchor="middle" font-weight="bold" fill="#2e2e2e">80%</text>
<path d="M824.2,1006.0 V934.0 Q824.2,929.0 829.2,929.0 H1006.2 Q1011.2,929.0 1011.2,934.0 V1006.0 Z" fill="url(#btnsel)"/>
<rect x="830.4" y="934.8" width="174.6" height="45.2" rx="5" fill="#c4c000"/>
<text x="917.7" y="998.7" font-size="13" text-anchor="middle" font-weight="bold" fill="#ffffff">100%</text>
<rect x="1011.5" y="929" width="254" height="77" fill="url(#darkr)"/>
<path d="M1265.1,1006.0 V933.6 Q1265.1,928.6 1270.1,928.6 H1320.5 Q1325.5,928.6 1325.5,933.6 V1006.0 Z" fill="url(#btn)"/>
<rect x="1265.1" y="950.5" width="60.4" height="1.6" fill="#3a3a3a"/>
<circle cx="1295.6" cy="940.1" r="9.4" fill="url(#circ)"/>
<path d="M1290.2,942.4 L1295.6,936.5 L1301,942.4 Z" fill="#2a2a2a"/>
<rect x="1277.3" y="960.8" width="35.4" height="34.5" rx="5" fill="url(#stopb)" stroke="#1e1e1e" stroke-width="3"/>
<rect x="1287.1" y="970.1" width="17" height="16.9" fill="#000"/>
<rect x="1287.1" y="970.1" width="17" height="8" fill="#1e1e1e"/>
<rect x="1326.2" y="928.6" width="341.8" height="77" fill="#2a2a2a"/>
<path d="M1326.2,965.5 V930.6 Q1326.2,928.6 1328.2,928.6 H1382.5 Q1384.5,928.6 1384.5,930.6 V965.5 Z" fill="url(#btn2)"/>
<circle cx="1355.3" cy="947.1" r="12.4" fill="url(#circ)"/>
<rect x="1385.3" y="928.6" width="55.1" height="36.9" fill="url(#btn2)"/>
<circle cx="1412.5" cy="947.1" r="12.4" fill="url(#circ)"/>
<rect x="1441.2" y="928.6" width="54.9" height="36.9" fill="url(#btn2)"/>
<circle cx="1468.7" cy="947.1" r="12.4" fill="url(#circ)"/>
<rect x="1497.7" y="928.6" width="55.6" height="36.9" fill="url(#btn2)"/>
<circle cx="1525.1" cy="947.1" r="12.4" fill="url(#circ)"/>
<rect x="1554.1" y="928.6" width="55.3" height="36.9" fill="url(#btn2)"/>
<circle cx="1581.3" cy="947.1" r="12.4" fill="url(#circ)"/>
<rect x="1610.2" y="928.6" width="54.8" height="36.9" fill="url(#btn2)"/>
<circle cx="1637.2" cy="947.1" r="12.4" fill="url(#circ)"/>
<rect x="1350" y="942.2" width="10" height="10" fill="#303030"/>
<path d="M1407.5,940.5 L1418.5,947.5 L1407.5,954.5 Z" fill="#303030"/>
<path d="M1463.5,941 h-2.5 v13 h2.5 M1474,941 h2.5 v13 h-2.5" stroke="#303030" stroke-width="2.4" fill="none"/>
<circle cx="1466" cy="947.5" r="1" fill="#303030"/><circle cx="1471" cy="947.5" r="1" fill="#303030"/>
<path d="M1525,947 C1522,943 1518,943.5 1518,947 C1518,950.5 1522,951 1525,947 C1528,943 1532,943.5 1532,947 C1532,950.5 1528,951 1525,947 Z" stroke="#303030" stroke-width="2.4" fill="none"/>
<path d="M1575.5,947 a6,6 0 0 1 10.5,-4 M1587,947 a6,6 0 0 1 -10.5,4" stroke="#303030" stroke-width="2.4" fill="none"/>
<path d="M1584,938.5 L1588.5,944.5 L1582,944 Z M1578.5,955.5 L1574,949.5 L1580.5,950 Z" fill="#303030"/>
<path d="M1326.2,1006.0 V968.5 Q1326.2,967.0 1327.7,967.0 H1494.6 Q1496.1,967.0 1496.1,968.5 V1006.0 Z" fill="url(#btn2)"/>
<path d="M1497.7,1006.0 V968.5 Q1497.7,967.0 1499.2,967.0 H1663.5 Q1665.0,967.0 1665.0,968.5 V1006.0 Z" fill="url(#btn2)"/>
<circle cx="1364" cy="985.5" r="12" fill="url(#circ)"/>
<path d="M1366.5,979.5 L1361,985.5 L1366.5,991.5 M1371,979.5 L1365.5,985.5 L1371,991.5" stroke="#303030" stroke-width="1.8" fill="none"/>
<circle cx="1631.8" cy="986.1" r="12" fill="url(#circ)"/>
<path d="M1629.3,980 L1634.8,986 L1629.3,992 M1624.8,980 L1630.3,986 L1624.8,992" stroke="#303030" stroke-width="1.8" fill="none"/>
<text x="1399.2" y="996.0" font-size="27.5" fill="#2e2e2e" textLength="62.5" lengthAdjust="spacingAndGlyphs" stroke="#2e2e2e" stroke-width="0.8">Back</text>
<text x="1532.3" y="996.0" font-size="27.5" fill="#2e2e2e" textLength="64.2" lengthAdjust="spacingAndGlyphs" stroke="#2e2e2e" stroke-width="0.8">Next</text>
<rect x="1665" y="928.6" width="3" height="77" fill="#1a1a1a"/>
<path d="M1053.8,36 V5 Q1053.8,0 1058.8,0 H1228.0 Q1232.0,0 1232.0,4 V36 Z" fill="url(#wdg)"/>
<path d="M1053.8,36 V5 Q1053.8,0 1058.8,0 H1061.2 V36 Z" fill="#22dd22"/>
<rect x="1187" y="1" width="1.2" height="35" fill="#3c3c3c"/>
<text x="1065.2" y="12.6" font-size="12.5" fill="#ececec" textLength="81.2" lengthAdjust="spacingAndGlyphs">X-Rite i1Pro 3</text>
<text x="1065.2" y="31.5" font-size="12.5" fill="#ececec" textLength="69.2" lengthAdjust="spacingAndGlyphs">Direct View</text>
<circle cx="1163.4" cy="17.6" r="12" fill="url(#circd)"/>
<path d="M1157.1,15.4 L1169.7,15.4 L1163.4,22.0 Z" fill="#ffffff"/>
<circle cx="1213.5" cy="17.6" r="15.2" fill="#0000e6" stroke="#e8e8ff" stroke-width="1.6"/>
<text x="1213.5" y="22.2" font-size="12.5" text-anchor="middle" fill="#ffffff" textLength="20.0" lengthAdjust="spacingAndGlyphs">708</text>
<path d="M1240.2,36 V5 Q1240.2,0 1245.2,0 H1398.0 Q1402.0,0 1402.0,4 V36 Z" fill="url(#wdg)"/>
<path d="M1240.2,36 V5 Q1240.2,0 1245.2,0 H1247.6 V36 Z" fill="#22dd22"/>
<text x="1251.6" y="13.2" font-size="12.5" fill="#ececec" textLength="80.0" lengthAdjust="spacingAndGlyphs">Mobile Forge</text>
<circle cx="1382.2" cy="17.0" r="12" fill="url(#circd)"/>
<path d="M1375.9,14.8 L1388.5,14.8 L1382.2,21.4 Z" fill="#ffffff"/>
<path d="M1410.5,36 V5 Q1410.5,0 1415.5,0 H1584.4 Q1588.4,0 1588.4,4 V36 Z" fill="url(#wdg)"/>
<path d="M1410.5,36 V5 Q1410.5,0 1415.5,0 H1417.9 V36 Z" fill="#dede00"/>
<text x="1421.4" y="12.8" font-size="12.5" fill="#ececec" textLength="130.5" lengthAdjust="spacingAndGlyphs">Direct Display Control</text>
<circle cx="1569.5" cy="17.0" r="12" fill="url(#circd)"/>
<path d="M1563.2,14.8 L1575.8,14.8 L1569.5,21.4 Z" fill="#ffffff"/>
<path d="M1593,0 V29 Q1593,33.5 1597.5,33.5 H1630 Q1634.5,33.5 1634.5,29 V0 Z" fill="url(#gearb)" stroke="#aaaaaa" stroke-width="1.2"/>
<circle cx="1613.8" cy="16.2" r="12" fill="url(#circd)"/>
<polygon points="1621.8,14.4 1621.8,18.0 1619.3,17.9 1618.9,18.9 1620.7,20.6 1618.2,23.1 1616.5,21.3 1615.5,21.7 1615.6,24.2 1612.0,24.2 1612.1,21.7 1611.1,21.3 1609.4,23.1 1606.9,20.6 1608.7,18.9 1608.3,17.9 1605.8,18.0 1605.8,14.4 1608.3,14.5 1608.7,13.5 1606.9,11.8 1609.4,9.3 1611.1,11.1 1612.1,10.7 1612.0,8.2 1615.6,8.2 1615.5,10.7 1616.5,11.1 1618.2,9.3 1620.7,11.8 1618.9,13.5 1619.3,14.5" fill="#d8d8d8"/>
<circle cx="1613.8" cy="16.2" r="3.4" fill="#5a5a5a"/>
<path d="M1636,0 V29 Q1636,33.5 1640.5,33.5 H1668 V0 Z" fill="url(#gearb)" stroke="#aaaaaa" stroke-width="1.2"/>
<circle cx="1653.3" cy="16.2" r="12" fill="url(#circd)"/>
<path d="M1656.5,10 L1650,16.2 L1656.5,22.4 Z" fill="#ffffff"/>
<rect x="1659" y="37.5" width="9" height="891" fill="url(#rshadow)"/>
</svg></body></html>
